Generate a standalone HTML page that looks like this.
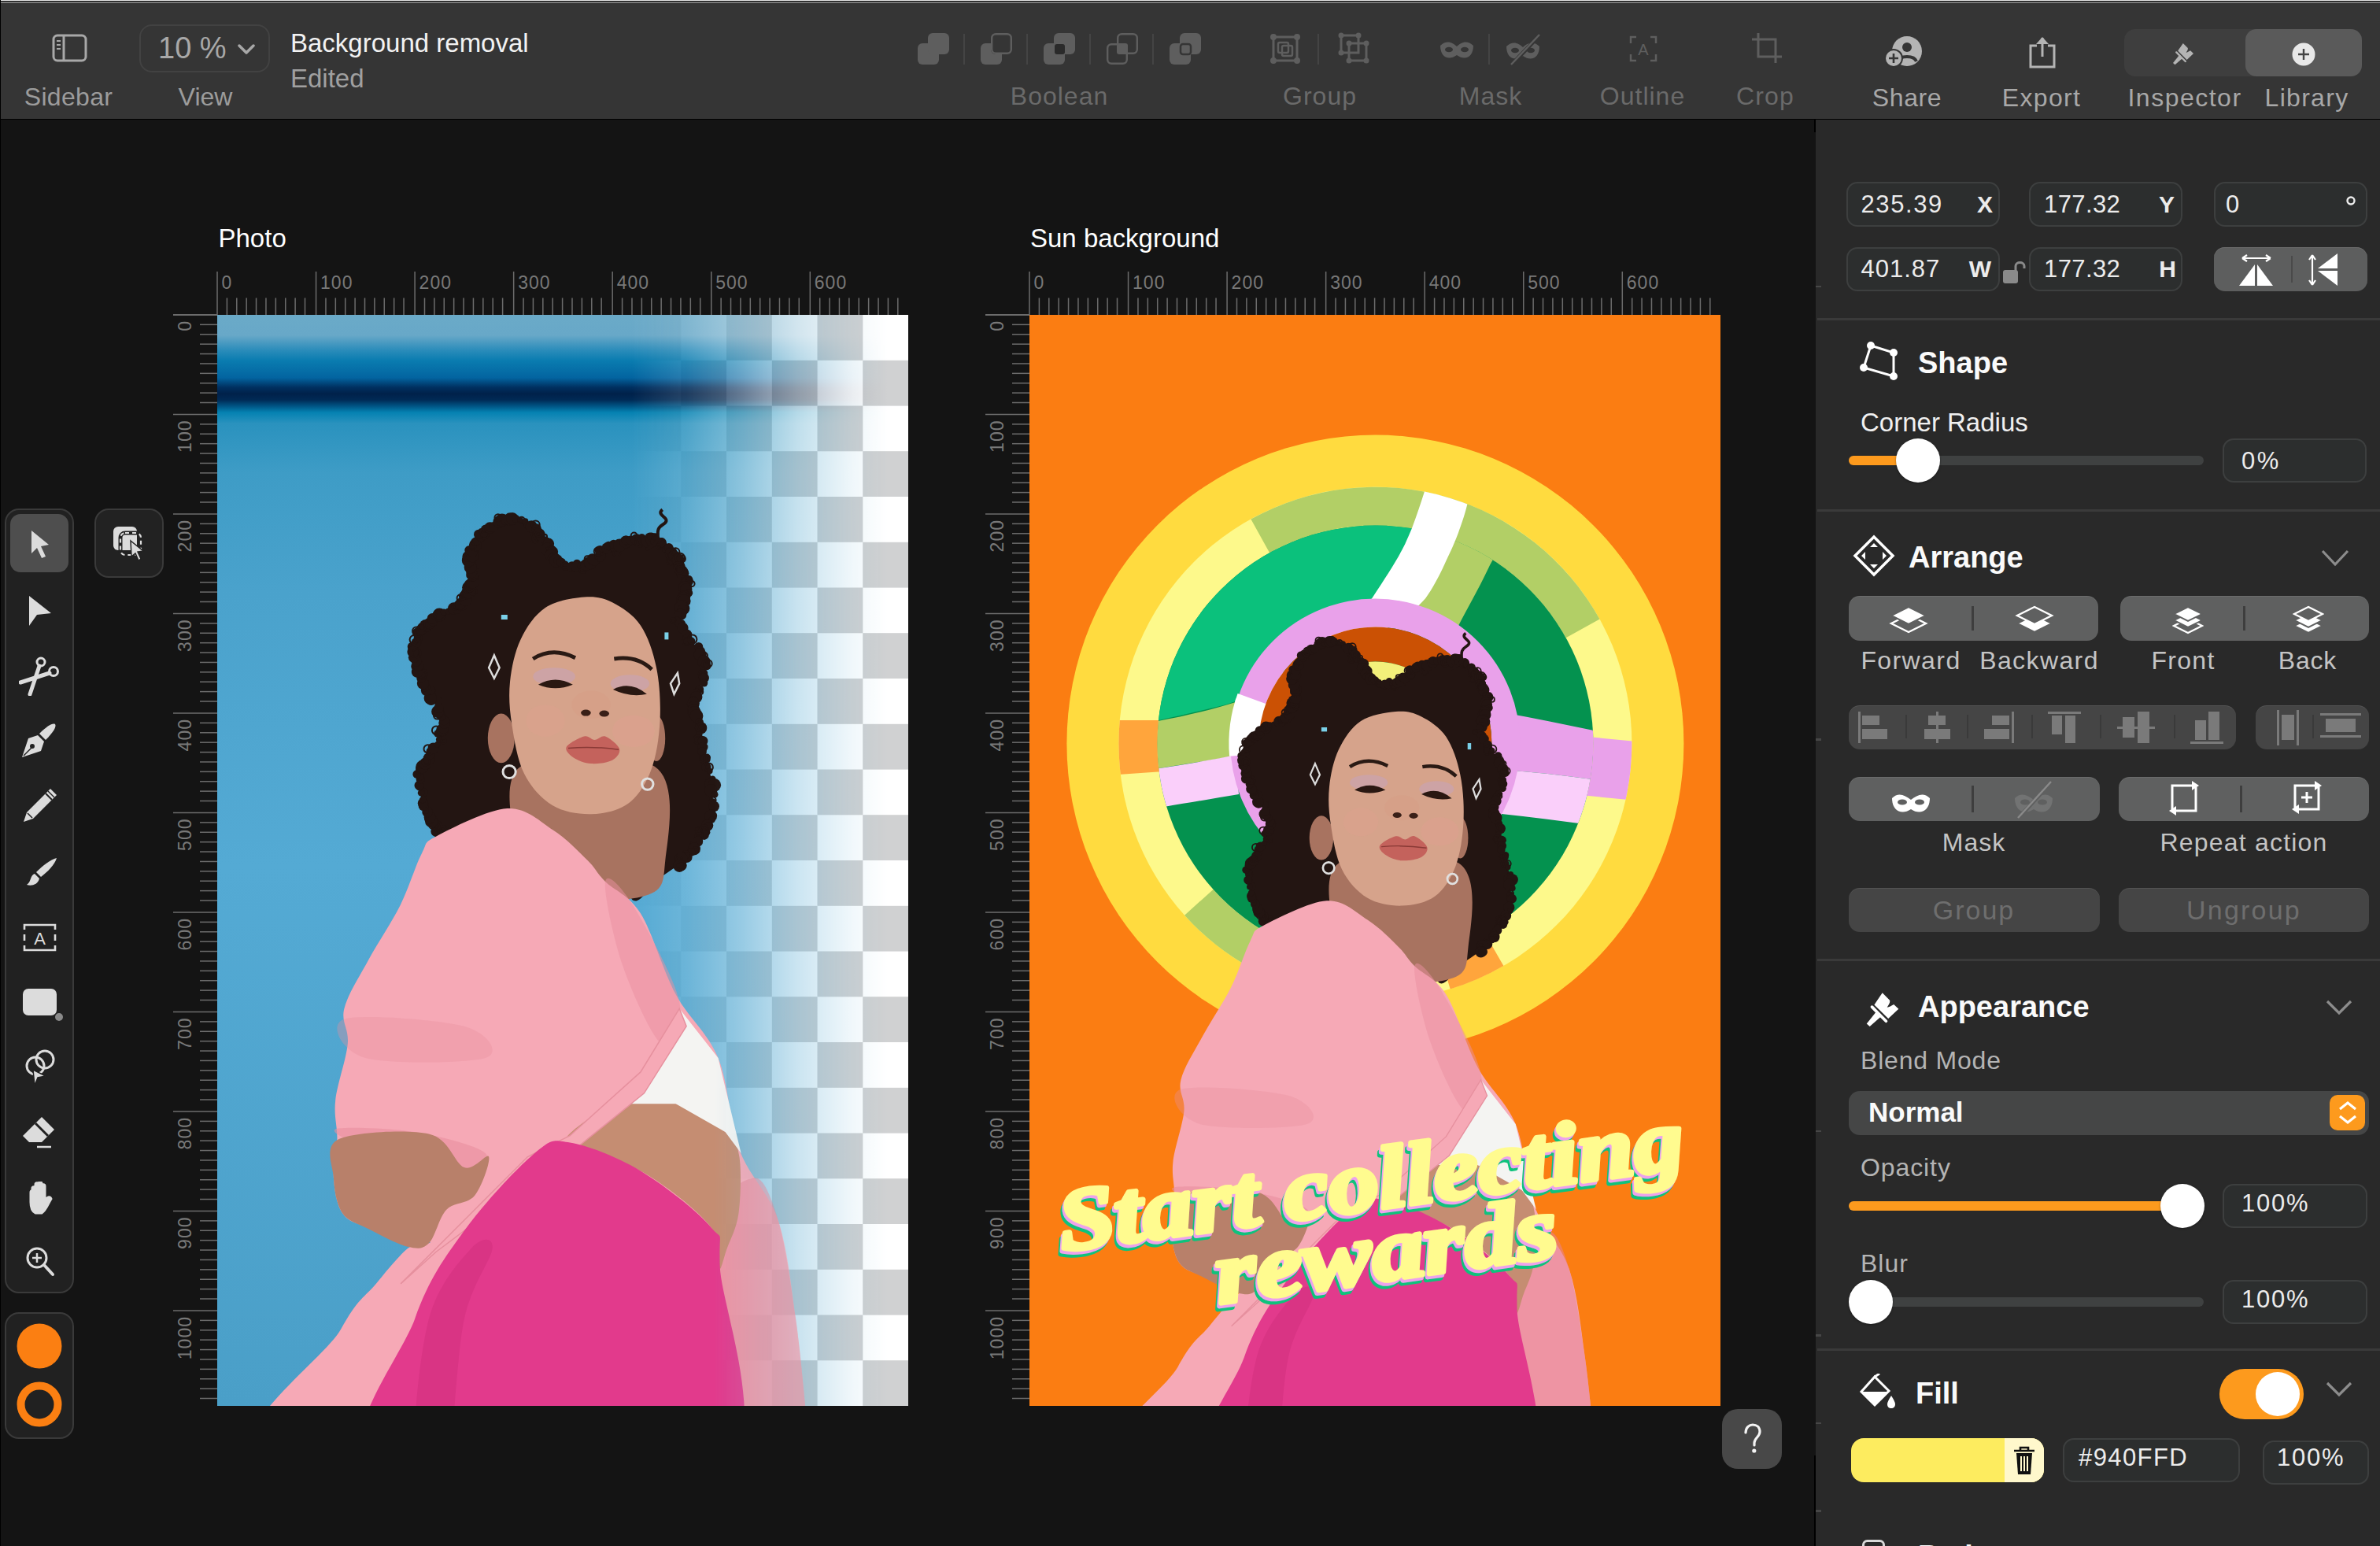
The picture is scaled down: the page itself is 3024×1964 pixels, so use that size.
<!DOCTYPE html>
<html><head><meta charset="utf-8"><style>
html,body{margin:0;padding:0;}
body{width:3024px;height:1964px;overflow:hidden;position:relative;background:#141414;font-family:"Liberation Sans", sans-serif;}
.a{position:absolute;display:block;}
.t{position:absolute;line-height:1;white-space:nowrap;}
</style></head><body>
<div class="t" style="left:277.5px;top:285.5px;font-size:33px;color:#fff;font-weight:400;letter-spacing:0px;">Photo</div><div class="t" style="left:1309.0px;top:285.5px;font-size:33px;color:#fff;font-weight:400;letter-spacing:0px;">Sun background</div><svg class="a" style="left:216.0px;top:330.0px;" width="938" height="1456" viewBox="0 0 938 1456"><rect x="4" y="69" width="56" height="2" fill="#6c6c6c"/><rect x="59.25" y="15" width="1.5" height="55" fill="#6c6c6c"/><text x="65.50" y="36.80000000000001" font-size="23" letter-spacing="1" fill="#787878" font-family="Liberation Sans">0</text><rect x="71.64" y="48.5" width="1.5" height="21.5" fill="#6c6c6c"/><rect x="84.03" y="48.5" width="1.5" height="21.5" fill="#6c6c6c"/><rect x="96.42" y="48.5" width="1.5" height="21.5" fill="#6c6c6c"/><rect x="108.81" y="48.5" width="1.5" height="21.5" fill="#6c6c6c"/><rect x="121.20" y="48.5" width="1.5" height="21.5" fill="#6c6c6c"/><rect x="133.59" y="48.5" width="1.5" height="21.5" fill="#6c6c6c"/><rect x="145.98" y="48.5" width="1.5" height="21.5" fill="#6c6c6c"/><rect x="158.37" y="48.5" width="1.5" height="21.5" fill="#6c6c6c"/><rect x="170.76" y="48.5" width="1.5" height="21.5" fill="#6c6c6c"/><rect x="184.80" y="15" width="1.5" height="55" fill="#6c6c6c"/><text x="191.05" y="36.80000000000001" font-size="23" letter-spacing="1" fill="#787878" font-family="Liberation Sans">100</text><rect x="197.19" y="48.5" width="1.5" height="21.5" fill="#6c6c6c"/><rect x="209.58" y="48.5" width="1.5" height="21.5" fill="#6c6c6c"/><rect x="221.97" y="48.5" width="1.5" height="21.5" fill="#6c6c6c"/><rect x="234.36" y="48.5" width="1.5" height="21.5" fill="#6c6c6c"/><rect x="246.75" y="48.5" width="1.5" height="21.5" fill="#6c6c6c"/><rect x="259.14" y="48.5" width="1.5" height="21.5" fill="#6c6c6c"/><rect x="271.53" y="48.5" width="1.5" height="21.5" fill="#6c6c6c"/><rect x="283.92" y="48.5" width="1.5" height="21.5" fill="#6c6c6c"/><rect x="296.31" y="48.5" width="1.5" height="21.5" fill="#6c6c6c"/><rect x="310.35" y="15" width="1.5" height="55" fill="#6c6c6c"/><text x="316.60" y="36.80000000000001" font-size="23" letter-spacing="1" fill="#787878" font-family="Liberation Sans">200</text><rect x="322.74" y="48.5" width="1.5" height="21.5" fill="#6c6c6c"/><rect x="335.13" y="48.5" width="1.5" height="21.5" fill="#6c6c6c"/><rect x="347.52" y="48.5" width="1.5" height="21.5" fill="#6c6c6c"/><rect x="359.91" y="48.5" width="1.5" height="21.5" fill="#6c6c6c"/><rect x="372.30" y="48.5" width="1.5" height="21.5" fill="#6c6c6c"/><rect x="384.69" y="48.5" width="1.5" height="21.5" fill="#6c6c6c"/><rect x="397.08" y="48.5" width="1.5" height="21.5" fill="#6c6c6c"/><rect x="409.47" y="48.5" width="1.5" height="21.5" fill="#6c6c6c"/><rect x="421.86" y="48.5" width="1.5" height="21.5" fill="#6c6c6c"/><rect x="435.90" y="15" width="1.5" height="55" fill="#6c6c6c"/><text x="442.15" y="36.80000000000001" font-size="23" letter-spacing="1" fill="#787878" font-family="Liberation Sans">300</text><rect x="448.29" y="48.5" width="1.5" height="21.5" fill="#6c6c6c"/><rect x="460.68" y="48.5" width="1.5" height="21.5" fill="#6c6c6c"/><rect x="473.07" y="48.5" width="1.5" height="21.5" fill="#6c6c6c"/><rect x="485.46" y="48.5" width="1.5" height="21.5" fill="#6c6c6c"/><rect x="497.85" y="48.5" width="1.5" height="21.5" fill="#6c6c6c"/><rect x="510.24" y="48.5" width="1.5" height="21.5" fill="#6c6c6c"/><rect x="522.63" y="48.5" width="1.5" height="21.5" fill="#6c6c6c"/><rect x="535.02" y="48.5" width="1.5" height="21.5" fill="#6c6c6c"/><rect x="547.41" y="48.5" width="1.5" height="21.5" fill="#6c6c6c"/><rect x="561.45" y="15" width="1.5" height="55" fill="#6c6c6c"/><text x="567.70" y="36.80000000000001" font-size="23" letter-spacing="1" fill="#787878" font-family="Liberation Sans">400</text><rect x="573.84" y="48.5" width="1.5" height="21.5" fill="#6c6c6c"/><rect x="586.23" y="48.5" width="1.5" height="21.5" fill="#6c6c6c"/><rect x="598.62" y="48.5" width="1.5" height="21.5" fill="#6c6c6c"/><rect x="611.01" y="48.5" width="1.5" height="21.5" fill="#6c6c6c"/><rect x="623.40" y="48.5" width="1.5" height="21.5" fill="#6c6c6c"/><rect x="635.79" y="48.5" width="1.5" height="21.5" fill="#6c6c6c"/><rect x="648.18" y="48.5" width="1.5" height="21.5" fill="#6c6c6c"/><rect x="660.57" y="48.5" width="1.5" height="21.5" fill="#6c6c6c"/><rect x="672.96" y="48.5" width="1.5" height="21.5" fill="#6c6c6c"/><rect x="687.00" y="15" width="1.5" height="55" fill="#6c6c6c"/><text x="693.25" y="36.80000000000001" font-size="23" letter-spacing="1" fill="#787878" font-family="Liberation Sans">500</text><rect x="699.39" y="48.5" width="1.5" height="21.5" fill="#6c6c6c"/><rect x="711.78" y="48.5" width="1.5" height="21.5" fill="#6c6c6c"/><rect x="724.17" y="48.5" width="1.5" height="21.5" fill="#6c6c6c"/><rect x="736.56" y="48.5" width="1.5" height="21.5" fill="#6c6c6c"/><rect x="748.95" y="48.5" width="1.5" height="21.5" fill="#6c6c6c"/><rect x="761.34" y="48.5" width="1.5" height="21.5" fill="#6c6c6c"/><rect x="773.73" y="48.5" width="1.5" height="21.5" fill="#6c6c6c"/><rect x="786.12" y="48.5" width="1.5" height="21.5" fill="#6c6c6c"/><rect x="798.51" y="48.5" width="1.5" height="21.5" fill="#6c6c6c"/><rect x="812.55" y="15" width="1.5" height="55" fill="#6c6c6c"/><text x="818.80" y="36.80000000000001" font-size="23" letter-spacing="1" fill="#787878" font-family="Liberation Sans">600</text><rect x="824.94" y="48.5" width="1.5" height="21.5" fill="#6c6c6c"/><rect x="837.33" y="48.5" width="1.5" height="21.5" fill="#6c6c6c"/><rect x="849.72" y="48.5" width="1.5" height="21.5" fill="#6c6c6c"/><rect x="862.11" y="48.5" width="1.5" height="21.5" fill="#6c6c6c"/><rect x="874.50" y="48.5" width="1.5" height="21.5" fill="#6c6c6c"/><rect x="886.89" y="48.5" width="1.5" height="21.5" fill="#6c6c6c"/><rect x="899.28" y="48.5" width="1.5" height="21.5" fill="#6c6c6c"/><rect x="911.67" y="48.5" width="1.5" height="21.5" fill="#6c6c6c"/><rect x="924.06" y="48.5" width="1.5" height="21.5" fill="#6c6c6c"/><rect x="4" y="69.25" width="56" height="1.5" fill="#6c6c6c"/><text transform="translate(27,77.0) rotate(-90)" text-anchor="end" font-size="23" letter-spacing="1" fill="#787878" font-family="Liberation Sans">0</text><rect x="38" y="81.64" width="22" height="1.5" fill="#6c6c6c"/><rect x="38" y="94.03" width="22" height="1.5" fill="#6c6c6c"/><rect x="38" y="106.42" width="22" height="1.5" fill="#6c6c6c"/><rect x="38" y="118.81" width="22" height="1.5" fill="#6c6c6c"/><rect x="38" y="131.20" width="22" height="1.5" fill="#6c6c6c"/><rect x="38" y="143.59" width="22" height="1.5" fill="#6c6c6c"/><rect x="38" y="155.98" width="22" height="1.5" fill="#6c6c6c"/><rect x="38" y="168.37" width="22" height="1.5" fill="#6c6c6c"/><rect x="38" y="180.76" width="22" height="1.5" fill="#6c6c6c"/><rect x="4" y="195.75" width="56" height="1.5" fill="#6c6c6c"/><text transform="translate(27,203.5) rotate(-90)" text-anchor="end" font-size="23" letter-spacing="1" fill="#787878" font-family="Liberation Sans">100</text><rect x="38" y="208.14" width="22" height="1.5" fill="#6c6c6c"/><rect x="38" y="220.53" width="22" height="1.5" fill="#6c6c6c"/><rect x="38" y="232.92" width="22" height="1.5" fill="#6c6c6c"/><rect x="38" y="245.31" width="22" height="1.5" fill="#6c6c6c"/><rect x="38" y="257.70" width="22" height="1.5" fill="#6c6c6c"/><rect x="38" y="270.09" width="22" height="1.5" fill="#6c6c6c"/><rect x="38" y="282.48" width="22" height="1.5" fill="#6c6c6c"/><rect x="38" y="294.87" width="22" height="1.5" fill="#6c6c6c"/><rect x="38" y="307.26" width="22" height="1.5" fill="#6c6c6c"/><rect x="4" y="322.25" width="56" height="1.5" fill="#6c6c6c"/><text transform="translate(27,330.0) rotate(-90)" text-anchor="end" font-size="23" letter-spacing="1" fill="#787878" font-family="Liberation Sans">200</text><rect x="38" y="334.64" width="22" height="1.5" fill="#6c6c6c"/><rect x="38" y="347.03" width="22" height="1.5" fill="#6c6c6c"/><rect x="38" y="359.42" width="22" height="1.5" fill="#6c6c6c"/><rect x="38" y="371.81" width="22" height="1.5" fill="#6c6c6c"/><rect x="38" y="384.20" width="22" height="1.5" fill="#6c6c6c"/><rect x="38" y="396.59" width="22" height="1.5" fill="#6c6c6c"/><rect x="38" y="408.98" width="22" height="1.5" fill="#6c6c6c"/><rect x="38" y="421.37" width="22" height="1.5" fill="#6c6c6c"/><rect x="38" y="433.76" width="22" height="1.5" fill="#6c6c6c"/><rect x="4" y="448.75" width="56" height="1.5" fill="#6c6c6c"/><text transform="translate(27,456.5) rotate(-90)" text-anchor="end" font-size="23" letter-spacing="1" fill="#787878" font-family="Liberation Sans">300</text><rect x="38" y="461.14" width="22" height="1.5" fill="#6c6c6c"/><rect x="38" y="473.53" width="22" height="1.5" fill="#6c6c6c"/><rect x="38" y="485.92" width="22" height="1.5" fill="#6c6c6c"/><rect x="38" y="498.31" width="22" height="1.5" fill="#6c6c6c"/><rect x="38" y="510.70" width="22" height="1.5" fill="#6c6c6c"/><rect x="38" y="523.09" width="22" height="1.5" fill="#6c6c6c"/><rect x="38" y="535.48" width="22" height="1.5" fill="#6c6c6c"/><rect x="38" y="547.87" width="22" height="1.5" fill="#6c6c6c"/><rect x="38" y="560.26" width="22" height="1.5" fill="#6c6c6c"/><rect x="4" y="575.25" width="56" height="1.5" fill="#6c6c6c"/><text transform="translate(27,583.0) rotate(-90)" text-anchor="end" font-size="23" letter-spacing="1" fill="#787878" font-family="Liberation Sans">400</text><rect x="38" y="587.64" width="22" height="1.5" fill="#6c6c6c"/><rect x="38" y="600.03" width="22" height="1.5" fill="#6c6c6c"/><rect x="38" y="612.42" width="22" height="1.5" fill="#6c6c6c"/><rect x="38" y="624.81" width="22" height="1.5" fill="#6c6c6c"/><rect x="38" y="637.20" width="22" height="1.5" fill="#6c6c6c"/><rect x="38" y="649.59" width="22" height="1.5" fill="#6c6c6c"/><rect x="38" y="661.98" width="22" height="1.5" fill="#6c6c6c"/><rect x="38" y="674.37" width="22" height="1.5" fill="#6c6c6c"/><rect x="38" y="686.76" width="22" height="1.5" fill="#6c6c6c"/><rect x="4" y="701.75" width="56" height="1.5" fill="#6c6c6c"/><text transform="translate(27,709.5) rotate(-90)" text-anchor="end" font-size="23" letter-spacing="1" fill="#787878" font-family="Liberation Sans">500</text><rect x="38" y="714.14" width="22" height="1.5" fill="#6c6c6c"/><rect x="38" y="726.53" width="22" height="1.5" fill="#6c6c6c"/><rect x="38" y="738.92" width="22" height="1.5" fill="#6c6c6c"/><rect x="38" y="751.31" width="22" height="1.5" fill="#6c6c6c"/><rect x="38" y="763.70" width="22" height="1.5" fill="#6c6c6c"/><rect x="38" y="776.09" width="22" height="1.5" fill="#6c6c6c"/><rect x="38" y="788.48" width="22" height="1.5" fill="#6c6c6c"/><rect x="38" y="800.87" width="22" height="1.5" fill="#6c6c6c"/><rect x="38" y="813.26" width="22" height="1.5" fill="#6c6c6c"/><rect x="4" y="828.25" width="56" height="1.5" fill="#6c6c6c"/><text transform="translate(27,836.0) rotate(-90)" text-anchor="end" font-size="23" letter-spacing="1" fill="#787878" font-family="Liberation Sans">600</text><rect x="38" y="840.64" width="22" height="1.5" fill="#6c6c6c"/><rect x="38" y="853.03" width="22" height="1.5" fill="#6c6c6c"/><rect x="38" y="865.42" width="22" height="1.5" fill="#6c6c6c"/><rect x="38" y="877.81" width="22" height="1.5" fill="#6c6c6c"/><rect x="38" y="890.20" width="22" height="1.5" fill="#6c6c6c"/><rect x="38" y="902.59" width="22" height="1.5" fill="#6c6c6c"/><rect x="38" y="914.98" width="22" height="1.5" fill="#6c6c6c"/><rect x="38" y="927.37" width="22" height="1.5" fill="#6c6c6c"/><rect x="38" y="939.76" width="22" height="1.5" fill="#6c6c6c"/><rect x="4" y="954.75" width="56" height="1.5" fill="#6c6c6c"/><text transform="translate(27,962.5) rotate(-90)" text-anchor="end" font-size="23" letter-spacing="1" fill="#787878" font-family="Liberation Sans">700</text><rect x="38" y="967.14" width="22" height="1.5" fill="#6c6c6c"/><rect x="38" y="979.53" width="22" height="1.5" fill="#6c6c6c"/><rect x="38" y="991.92" width="22" height="1.5" fill="#6c6c6c"/><rect x="38" y="1004.31" width="22" height="1.5" fill="#6c6c6c"/><rect x="38" y="1016.70" width="22" height="1.5" fill="#6c6c6c"/><rect x="38" y="1029.09" width="22" height="1.5" fill="#6c6c6c"/><rect x="38" y="1041.48" width="22" height="1.5" fill="#6c6c6c"/><rect x="38" y="1053.87" width="22" height="1.5" fill="#6c6c6c"/><rect x="38" y="1066.26" width="22" height="1.5" fill="#6c6c6c"/><rect x="4" y="1081.25" width="56" height="1.5" fill="#6c6c6c"/><text transform="translate(27,1089.0) rotate(-90)" text-anchor="end" font-size="23" letter-spacing="1" fill="#787878" font-family="Liberation Sans">800</text><rect x="38" y="1093.64" width="22" height="1.5" fill="#6c6c6c"/><rect x="38" y="1106.03" width="22" height="1.5" fill="#6c6c6c"/><rect x="38" y="1118.42" width="22" height="1.5" fill="#6c6c6c"/><rect x="38" y="1130.81" width="22" height="1.5" fill="#6c6c6c"/><rect x="38" y="1143.20" width="22" height="1.5" fill="#6c6c6c"/><rect x="38" y="1155.59" width="22" height="1.5" fill="#6c6c6c"/><rect x="38" y="1167.98" width="22" height="1.5" fill="#6c6c6c"/><rect x="38" y="1180.37" width="22" height="1.5" fill="#6c6c6c"/><rect x="38" y="1192.76" width="22" height="1.5" fill="#6c6c6c"/><rect x="4" y="1207.75" width="56" height="1.5" fill="#6c6c6c"/><text transform="translate(27,1215.5) rotate(-90)" text-anchor="end" font-size="23" letter-spacing="1" fill="#787878" font-family="Liberation Sans">900</text><rect x="38" y="1220.14" width="22" height="1.5" fill="#6c6c6c"/><rect x="38" y="1232.53" width="22" height="1.5" fill="#6c6c6c"/><rect x="38" y="1244.92" width="22" height="1.5" fill="#6c6c6c"/><rect x="38" y="1257.31" width="22" height="1.5" fill="#6c6c6c"/><rect x="38" y="1269.70" width="22" height="1.5" fill="#6c6c6c"/><rect x="38" y="1282.09" width="22" height="1.5" fill="#6c6c6c"/><rect x="38" y="1294.48" width="22" height="1.5" fill="#6c6c6c"/><rect x="38" y="1306.87" width="22" height="1.5" fill="#6c6c6c"/><rect x="38" y="1319.26" width="22" height="1.5" fill="#6c6c6c"/><rect x="4" y="1334.25" width="56" height="1.5" fill="#6c6c6c"/><text transform="translate(27,1342.0) rotate(-90)" text-anchor="end" font-size="23" letter-spacing="1" fill="#787878" font-family="Liberation Sans">1000</text><rect x="38" y="1346.64" width="22" height="1.5" fill="#6c6c6c"/><rect x="38" y="1359.03" width="22" height="1.5" fill="#6c6c6c"/><rect x="38" y="1371.42" width="22" height="1.5" fill="#6c6c6c"/><rect x="38" y="1383.81" width="22" height="1.5" fill="#6c6c6c"/><rect x="38" y="1396.20" width="22" height="1.5" fill="#6c6c6c"/><rect x="38" y="1408.59" width="22" height="1.5" fill="#6c6c6c"/><rect x="38" y="1420.98" width="22" height="1.5" fill="#6c6c6c"/><rect x="38" y="1433.37" width="22" height="1.5" fill="#6c6c6c"/><rect x="38" y="1445.76" width="22" height="1.5" fill="#6c6c6c"/></svg><svg class="a" style="left:1247.6px;top:330.0px;" width="938" height="1456" viewBox="0 0 938 1456"><rect x="4" y="69" width="56" height="2" fill="#6c6c6c"/><rect x="59.25" y="15" width="1.5" height="55" fill="#6c6c6c"/><text x="65.50" y="36.80000000000001" font-size="23" letter-spacing="1" fill="#787878" font-family="Liberation Sans">0</text><rect x="71.64" y="48.5" width="1.5" height="21.5" fill="#6c6c6c"/><rect x="84.03" y="48.5" width="1.5" height="21.5" fill="#6c6c6c"/><rect x="96.42" y="48.5" width="1.5" height="21.5" fill="#6c6c6c"/><rect x="108.81" y="48.5" width="1.5" height="21.5" fill="#6c6c6c"/><rect x="121.20" y="48.5" width="1.5" height="21.5" fill="#6c6c6c"/><rect x="133.59" y="48.5" width="1.5" height="21.5" fill="#6c6c6c"/><rect x="145.98" y="48.5" width="1.5" height="21.5" fill="#6c6c6c"/><rect x="158.37" y="48.5" width="1.5" height="21.5" fill="#6c6c6c"/><rect x="170.76" y="48.5" width="1.5" height="21.5" fill="#6c6c6c"/><rect x="184.80" y="15" width="1.5" height="55" fill="#6c6c6c"/><text x="191.05" y="36.80000000000001" font-size="23" letter-spacing="1" fill="#787878" font-family="Liberation Sans">100</text><rect x="197.19" y="48.5" width="1.5" height="21.5" fill="#6c6c6c"/><rect x="209.58" y="48.5" width="1.5" height="21.5" fill="#6c6c6c"/><rect x="221.97" y="48.5" width="1.5" height="21.5" fill="#6c6c6c"/><rect x="234.36" y="48.5" width="1.5" height="21.5" fill="#6c6c6c"/><rect x="246.75" y="48.5" width="1.5" height="21.5" fill="#6c6c6c"/><rect x="259.14" y="48.5" width="1.5" height="21.5" fill="#6c6c6c"/><rect x="271.53" y="48.5" width="1.5" height="21.5" fill="#6c6c6c"/><rect x="283.92" y="48.5" width="1.5" height="21.5" fill="#6c6c6c"/><rect x="296.31" y="48.5" width="1.5" height="21.5" fill="#6c6c6c"/><rect x="310.35" y="15" width="1.5" height="55" fill="#6c6c6c"/><text x="316.60" y="36.80000000000001" font-size="23" letter-spacing="1" fill="#787878" font-family="Liberation Sans">200</text><rect x="322.74" y="48.5" width="1.5" height="21.5" fill="#6c6c6c"/><rect x="335.13" y="48.5" width="1.5" height="21.5" fill="#6c6c6c"/><rect x="347.52" y="48.5" width="1.5" height="21.5" fill="#6c6c6c"/><rect x="359.91" y="48.5" width="1.5" height="21.5" fill="#6c6c6c"/><rect x="372.30" y="48.5" width="1.5" height="21.5" fill="#6c6c6c"/><rect x="384.69" y="48.5" width="1.5" height="21.5" fill="#6c6c6c"/><rect x="397.08" y="48.5" width="1.5" height="21.5" fill="#6c6c6c"/><rect x="409.47" y="48.5" width="1.5" height="21.5" fill="#6c6c6c"/><rect x="421.86" y="48.5" width="1.5" height="21.5" fill="#6c6c6c"/><rect x="435.90" y="15" width="1.5" height="55" fill="#6c6c6c"/><text x="442.15" y="36.80000000000001" font-size="23" letter-spacing="1" fill="#787878" font-family="Liberation Sans">300</text><rect x="448.29" y="48.5" width="1.5" height="21.5" fill="#6c6c6c"/><rect x="460.68" y="48.5" width="1.5" height="21.5" fill="#6c6c6c"/><rect x="473.07" y="48.5" width="1.5" height="21.5" fill="#6c6c6c"/><rect x="485.46" y="48.5" width="1.5" height="21.5" fill="#6c6c6c"/><rect x="497.85" y="48.5" width="1.5" height="21.5" fill="#6c6c6c"/><rect x="510.24" y="48.5" width="1.5" height="21.5" fill="#6c6c6c"/><rect x="522.63" y="48.5" width="1.5" height="21.5" fill="#6c6c6c"/><rect x="535.02" y="48.5" width="1.5" height="21.5" fill="#6c6c6c"/><rect x="547.41" y="48.5" width="1.5" height="21.5" fill="#6c6c6c"/><rect x="561.45" y="15" width="1.5" height="55" fill="#6c6c6c"/><text x="567.70" y="36.80000000000001" font-size="23" letter-spacing="1" fill="#787878" font-family="Liberation Sans">400</text><rect x="573.84" y="48.5" width="1.5" height="21.5" fill="#6c6c6c"/><rect x="586.23" y="48.5" width="1.5" height="21.5" fill="#6c6c6c"/><rect x="598.62" y="48.5" width="1.5" height="21.5" fill="#6c6c6c"/><rect x="611.01" y="48.5" width="1.5" height="21.5" fill="#6c6c6c"/><rect x="623.40" y="48.5" width="1.5" height="21.5" fill="#6c6c6c"/><rect x="635.79" y="48.5" width="1.5" height="21.5" fill="#6c6c6c"/><rect x="648.18" y="48.5" width="1.5" height="21.5" fill="#6c6c6c"/><rect x="660.57" y="48.5" width="1.5" height="21.5" fill="#6c6c6c"/><rect x="672.96" y="48.5" width="1.5" height="21.5" fill="#6c6c6c"/><rect x="687.00" y="15" width="1.5" height="55" fill="#6c6c6c"/><text x="693.25" y="36.80000000000001" font-size="23" letter-spacing="1" fill="#787878" font-family="Liberation Sans">500</text><rect x="699.39" y="48.5" width="1.5" height="21.5" fill="#6c6c6c"/><rect x="711.78" y="48.5" width="1.5" height="21.5" fill="#6c6c6c"/><rect x="724.17" y="48.5" width="1.5" height="21.5" fill="#6c6c6c"/><rect x="736.56" y="48.5" width="1.5" height="21.5" fill="#6c6c6c"/><rect x="748.95" y="48.5" width="1.5" height="21.5" fill="#6c6c6c"/><rect x="761.34" y="48.5" width="1.5" height="21.5" fill="#6c6c6c"/><rect x="773.73" y="48.5" width="1.5" height="21.5" fill="#6c6c6c"/><rect x="786.12" y="48.5" width="1.5" height="21.5" fill="#6c6c6c"/><rect x="798.51" y="48.5" width="1.5" height="21.5" fill="#6c6c6c"/><rect x="812.55" y="15" width="1.5" height="55" fill="#6c6c6c"/><text x="818.80" y="36.80000000000001" font-size="23" letter-spacing="1" fill="#787878" font-family="Liberation Sans">600</text><rect x="824.94" y="48.5" width="1.5" height="21.5" fill="#6c6c6c"/><rect x="837.33" y="48.5" width="1.5" height="21.5" fill="#6c6c6c"/><rect x="849.72" y="48.5" width="1.5" height="21.5" fill="#6c6c6c"/><rect x="862.11" y="48.5" width="1.5" height="21.5" fill="#6c6c6c"/><rect x="874.50" y="48.5" width="1.5" height="21.5" fill="#6c6c6c"/><rect x="886.89" y="48.5" width="1.5" height="21.5" fill="#6c6c6c"/><rect x="899.28" y="48.5" width="1.5" height="21.5" fill="#6c6c6c"/><rect x="911.67" y="48.5" width="1.5" height="21.5" fill="#6c6c6c"/><rect x="924.06" y="48.5" width="1.5" height="21.5" fill="#6c6c6c"/><rect x="4" y="69.25" width="56" height="1.5" fill="#6c6c6c"/><text transform="translate(27,77.0) rotate(-90)" text-anchor="end" font-size="23" letter-spacing="1" fill="#787878" font-family="Liberation Sans">0</text><rect x="38" y="81.64" width="22" height="1.5" fill="#6c6c6c"/><rect x="38" y="94.03" width="22" height="1.5" fill="#6c6c6c"/><rect x="38" y="106.42" width="22" height="1.5" fill="#6c6c6c"/><rect x="38" y="118.81" width="22" height="1.5" fill="#6c6c6c"/><rect x="38" y="131.20" width="22" height="1.5" fill="#6c6c6c"/><rect x="38" y="143.59" width="22" height="1.5" fill="#6c6c6c"/><rect x="38" y="155.98" width="22" height="1.5" fill="#6c6c6c"/><rect x="38" y="168.37" width="22" height="1.5" fill="#6c6c6c"/><rect x="38" y="180.76" width="22" height="1.5" fill="#6c6c6c"/><rect x="4" y="195.75" width="56" height="1.5" fill="#6c6c6c"/><text transform="translate(27,203.5) rotate(-90)" text-anchor="end" font-size="23" letter-spacing="1" fill="#787878" font-family="Liberation Sans">100</text><rect x="38" y="208.14" width="22" height="1.5" fill="#6c6c6c"/><rect x="38" y="220.53" width="22" height="1.5" fill="#6c6c6c"/><rect x="38" y="232.92" width="22" height="1.5" fill="#6c6c6c"/><rect x="38" y="245.31" width="22" height="1.5" fill="#6c6c6c"/><rect x="38" y="257.70" width="22" height="1.5" fill="#6c6c6c"/><rect x="38" y="270.09" width="22" height="1.5" fill="#6c6c6c"/><rect x="38" y="282.48" width="22" height="1.5" fill="#6c6c6c"/><rect x="38" y="294.87" width="22" height="1.5" fill="#6c6c6c"/><rect x="38" y="307.26" width="22" height="1.5" fill="#6c6c6c"/><rect x="4" y="322.25" width="56" height="1.5" fill="#6c6c6c"/><text transform="translate(27,330.0) rotate(-90)" text-anchor="end" font-size="23" letter-spacing="1" fill="#787878" font-family="Liberation Sans">200</text><rect x="38" y="334.64" width="22" height="1.5" fill="#6c6c6c"/><rect x="38" y="347.03" width="22" height="1.5" fill="#6c6c6c"/><rect x="38" y="359.42" width="22" height="1.5" fill="#6c6c6c"/><rect x="38" y="371.81" width="22" height="1.5" fill="#6c6c6c"/><rect x="38" y="384.20" width="22" height="1.5" fill="#6c6c6c"/><rect x="38" y="396.59" width="22" height="1.5" fill="#6c6c6c"/><rect x="38" y="408.98" width="22" height="1.5" fill="#6c6c6c"/><rect x="38" y="421.37" width="22" height="1.5" fill="#6c6c6c"/><rect x="38" y="433.76" width="22" height="1.5" fill="#6c6c6c"/><rect x="4" y="448.75" width="56" height="1.5" fill="#6c6c6c"/><text transform="translate(27,456.5) rotate(-90)" text-anchor="end" font-size="23" letter-spacing="1" fill="#787878" font-family="Liberation Sans">300</text><rect x="38" y="461.14" width="22" height="1.5" fill="#6c6c6c"/><rect x="38" y="473.53" width="22" height="1.5" fill="#6c6c6c"/><rect x="38" y="485.92" width="22" height="1.5" fill="#6c6c6c"/><rect x="38" y="498.31" width="22" height="1.5" fill="#6c6c6c"/><rect x="38" y="510.70" width="22" height="1.5" fill="#6c6c6c"/><rect x="38" y="523.09" width="22" height="1.5" fill="#6c6c6c"/><rect x="38" y="535.48" width="22" height="1.5" fill="#6c6c6c"/><rect x="38" y="547.87" width="22" height="1.5" fill="#6c6c6c"/><rect x="38" y="560.26" width="22" height="1.5" fill="#6c6c6c"/><rect x="4" y="575.25" width="56" height="1.5" fill="#6c6c6c"/><text transform="translate(27,583.0) rotate(-90)" text-anchor="end" font-size="23" letter-spacing="1" fill="#787878" font-family="Liberation Sans">400</text><rect x="38" y="587.64" width="22" height="1.5" fill="#6c6c6c"/><rect x="38" y="600.03" width="22" height="1.5" fill="#6c6c6c"/><rect x="38" y="612.42" width="22" height="1.5" fill="#6c6c6c"/><rect x="38" y="624.81" width="22" height="1.5" fill="#6c6c6c"/><rect x="38" y="637.20" width="22" height="1.5" fill="#6c6c6c"/><rect x="38" y="649.59" width="22" height="1.5" fill="#6c6c6c"/><rect x="38" y="661.98" width="22" height="1.5" fill="#6c6c6c"/><rect x="38" y="674.37" width="22" height="1.5" fill="#6c6c6c"/><rect x="38" y="686.76" width="22" height="1.5" fill="#6c6c6c"/><rect x="4" y="701.75" width="56" height="1.5" fill="#6c6c6c"/><text transform="translate(27,709.5) rotate(-90)" text-anchor="end" font-size="23" letter-spacing="1" fill="#787878" font-family="Liberation Sans">500</text><rect x="38" y="714.14" width="22" height="1.5" fill="#6c6c6c"/><rect x="38" y="726.53" width="22" height="1.5" fill="#6c6c6c"/><rect x="38" y="738.92" width="22" height="1.5" fill="#6c6c6c"/><rect x="38" y="751.31" width="22" height="1.5" fill="#6c6c6c"/><rect x="38" y="763.70" width="22" height="1.5" fill="#6c6c6c"/><rect x="38" y="776.09" width="22" height="1.5" fill="#6c6c6c"/><rect x="38" y="788.48" width="22" height="1.5" fill="#6c6c6c"/><rect x="38" y="800.87" width="22" height="1.5" fill="#6c6c6c"/><rect x="38" y="813.26" width="22" height="1.5" fill="#6c6c6c"/><rect x="4" y="828.25" width="56" height="1.5" fill="#6c6c6c"/><text transform="translate(27,836.0) rotate(-90)" text-anchor="end" font-size="23" letter-spacing="1" fill="#787878" font-family="Liberation Sans">600</text><rect x="38" y="840.64" width="22" height="1.5" fill="#6c6c6c"/><rect x="38" y="853.03" width="22" height="1.5" fill="#6c6c6c"/><rect x="38" y="865.42" width="22" height="1.5" fill="#6c6c6c"/><rect x="38" y="877.81" width="22" height="1.5" fill="#6c6c6c"/><rect x="38" y="890.20" width="22" height="1.5" fill="#6c6c6c"/><rect x="38" y="902.59" width="22" height="1.5" fill="#6c6c6c"/><rect x="38" y="914.98" width="22" height="1.5" fill="#6c6c6c"/><rect x="38" y="927.37" width="22" height="1.5" fill="#6c6c6c"/><rect x="38" y="939.76" width="22" height="1.5" fill="#6c6c6c"/><rect x="4" y="954.75" width="56" height="1.5" fill="#6c6c6c"/><text transform="translate(27,962.5) rotate(-90)" text-anchor="end" font-size="23" letter-spacing="1" fill="#787878" font-family="Liberation Sans">700</text><rect x="38" y="967.14" width="22" height="1.5" fill="#6c6c6c"/><rect x="38" y="979.53" width="22" height="1.5" fill="#6c6c6c"/><rect x="38" y="991.92" width="22" height="1.5" fill="#6c6c6c"/><rect x="38" y="1004.31" width="22" height="1.5" fill="#6c6c6c"/><rect x="38" y="1016.70" width="22" height="1.5" fill="#6c6c6c"/><rect x="38" y="1029.09" width="22" height="1.5" fill="#6c6c6c"/><rect x="38" y="1041.48" width="22" height="1.5" fill="#6c6c6c"/><rect x="38" y="1053.87" width="22" height="1.5" fill="#6c6c6c"/><rect x="38" y="1066.26" width="22" height="1.5" fill="#6c6c6c"/><rect x="4" y="1081.25" width="56" height="1.5" fill="#6c6c6c"/><text transform="translate(27,1089.0) rotate(-90)" text-anchor="end" font-size="23" letter-spacing="1" fill="#787878" font-family="Liberation Sans">800</text><rect x="38" y="1093.64" width="22" height="1.5" fill="#6c6c6c"/><rect x="38" y="1106.03" width="22" height="1.5" fill="#6c6c6c"/><rect x="38" y="1118.42" width="22" height="1.5" fill="#6c6c6c"/><rect x="38" y="1130.81" width="22" height="1.5" fill="#6c6c6c"/><rect x="38" y="1143.20" width="22" height="1.5" fill="#6c6c6c"/><rect x="38" y="1155.59" width="22" height="1.5" fill="#6c6c6c"/><rect x="38" y="1167.98" width="22" height="1.5" fill="#6c6c6c"/><rect x="38" y="1180.37" width="22" height="1.5" fill="#6c6c6c"/><rect x="38" y="1192.76" width="22" height="1.5" fill="#6c6c6c"/><rect x="4" y="1207.75" width="56" height="1.5" fill="#6c6c6c"/><text transform="translate(27,1215.5) rotate(-90)" text-anchor="end" font-size="23" letter-spacing="1" fill="#787878" font-family="Liberation Sans">900</text><rect x="38" y="1220.14" width="22" height="1.5" fill="#6c6c6c"/><rect x="38" y="1232.53" width="22" height="1.5" fill="#6c6c6c"/><rect x="38" y="1244.92" width="22" height="1.5" fill="#6c6c6c"/><rect x="38" y="1257.31" width="22" height="1.5" fill="#6c6c6c"/><rect x="38" y="1269.70" width="22" height="1.5" fill="#6c6c6c"/><rect x="38" y="1282.09" width="22" height="1.5" fill="#6c6c6c"/><rect x="38" y="1294.48" width="22" height="1.5" fill="#6c6c6c"/><rect x="38" y="1306.87" width="22" height="1.5" fill="#6c6c6c"/><rect x="38" y="1319.26" width="22" height="1.5" fill="#6c6c6c"/><rect x="4" y="1334.25" width="56" height="1.5" fill="#6c6c6c"/><text transform="translate(27,1342.0) rotate(-90)" text-anchor="end" font-size="23" letter-spacing="1" fill="#787878" font-family="Liberation Sans">1000</text><rect x="38" y="1346.64" width="22" height="1.5" fill="#6c6c6c"/><rect x="38" y="1359.03" width="22" height="1.5" fill="#6c6c6c"/><rect x="38" y="1371.42" width="22" height="1.5" fill="#6c6c6c"/><rect x="38" y="1383.81" width="22" height="1.5" fill="#6c6c6c"/><rect x="38" y="1396.20" width="22" height="1.5" fill="#6c6c6c"/><rect x="38" y="1408.59" width="22" height="1.5" fill="#6c6c6c"/><rect x="38" y="1420.98" width="22" height="1.5" fill="#6c6c6c"/><rect x="38" y="1433.37" width="22" height="1.5" fill="#6c6c6c"/><rect x="38" y="1445.76" width="22" height="1.5" fill="#6c6c6c"/></svg><svg class="a" style="left:276.0px;top:400.0px;" width="878" height="1386" viewBox="0 0 878 1386"><defs><linearGradient id="p1fade" x1="0" y1="0" x2="878" y2="0" gradientUnits="userSpaceOnUse"><stop offset="0.60" stop-color="#fff" stop-opacity="1"/><stop offset="0.68" stop-color="#fff" stop-opacity="0.85"/><stop offset="0.76" stop-color="#fff" stop-opacity="0.6"/><stop offset="0.84" stop-color="#fff" stop-opacity="0.3"/><stop offset="0.92" stop-color="#fff" stop-opacity="0.08"/><stop offset="0.97" stop-color="#fff" stop-opacity="0"/></linearGradient><mask id="p1mask" maskUnits="userSpaceOnUse" x="0" y="0" width="878" height="1386"><rect width="878" height="1386" fill="url(#p1fade)"/></mask><linearGradient id="p1ffade" x1="0" y1="0" x2="878" y2="0" gradientUnits="userSpaceOnUse"><stop offset="0.72" stop-color="#fff" stop-opacity="1"/><stop offset="0.86" stop-color="#fff" stop-opacity="0.6"/></linearGradient><mask id="p1fmask" maskUnits="userSpaceOnUse" x="0" y="0" width="878" height="1386"><rect width="878" height="1386" fill="url(#p1ffade)"/></mask><linearGradient id="p1bg" x1="0" y1="0" x2="0" y2="1386" gradientUnits="userSpaceOnUse"><stop offset="0.0000" stop-color="#6aaac8"/><stop offset="0.0188" stop-color="#68a8c8"/><stop offset="0.0325" stop-color="#2a8cba"/><stop offset="0.0418" stop-color="#0a7cb0"/><stop offset="0.0577" stop-color="#0364a0"/><stop offset="0.0664" stop-color="#003060"/><stop offset="0.0722" stop-color="#00214a"/><stop offset="0.0779" stop-color="#002a55"/><stop offset="0.0837" stop-color="#005585"/><stop offset="0.0895" stop-color="#0582b2"/><stop offset="0.0996" stop-color="#2a92be"/><stop offset="0.1443" stop-color="#3e9cc6"/><stop offset="0.2525" stop-color="#4aa2cc"/><stop offset="0.5051" stop-color="#54aad4"/><stop offset="1.0000" stop-color="#4a9fc8"/></linearGradient><filter id="p1blur" x="-0.1" y="-0.1" width="1.2" height="1.2"><feGaussianBlur stdDeviation="1.2"/></filter></defs><rect width="878" height="1386" fill="#ffffff"/><rect x="820.2" y="57.8" width="57.8" height="57.8" fill="#d0d1d2"/><rect x="820.2" y="173.2" width="57.8" height="57.8" fill="#d0d1d2"/><rect x="820.2" y="288.8" width="57.8" height="57.8" fill="#d0d1d2"/><rect x="820.2" y="404.2" width="57.8" height="57.8" fill="#d0d1d2"/><rect x="820.2" y="519.8" width="57.8" height="57.8" fill="#d0d1d2"/><rect x="820.2" y="635.2" width="57.8" height="57.8" fill="#d0d1d2"/><rect x="820.2" y="750.8" width="57.8" height="57.8" fill="#d0d1d2"/><rect x="820.2" y="866.2" width="57.8" height="57.8" fill="#d0d1d2"/><rect x="820.2" y="981.8" width="57.8" height="57.8" fill="#d0d1d2"/><rect x="820.2" y="1097.2" width="57.8" height="57.8" fill="#d0d1d2"/><rect x="820.2" y="1212.8" width="57.8" height="57.8" fill="#d0d1d2"/><rect x="820.2" y="1328.2" width="57.8" height="57.8" fill="#d0d1d2"/><rect x="762.5" y="0.0" width="57.8" height="57.8" fill="#d0d1d2"/><rect x="762.5" y="115.5" width="57.8" height="57.8" fill="#d0d1d2"/><rect x="762.5" y="231.0" width="57.8" height="57.8" fill="#d0d1d2"/><rect x="762.5" y="346.5" width="57.8" height="57.8" fill="#d0d1d2"/><rect x="762.5" y="462.0" width="57.8" height="57.8" fill="#d0d1d2"/><rect x="762.5" y="577.5" width="57.8" height="57.8" fill="#d0d1d2"/><rect x="762.5" y="693.0" width="57.8" height="57.8" fill="#d0d1d2"/><rect x="762.5" y="808.5" width="57.8" height="57.8" fill="#d0d1d2"/><rect x="762.5" y="924.0" width="57.8" height="57.8" fill="#d0d1d2"/><rect x="762.5" y="1039.5" width="57.8" height="57.8" fill="#d0d1d2"/><rect x="762.5" y="1155.0" width="57.8" height="57.8" fill="#d0d1d2"/><rect x="762.5" y="1270.5" width="57.8" height="57.8" fill="#d0d1d2"/><rect x="704.8" y="57.8" width="57.8" height="57.8" fill="#d0d1d2"/><rect x="704.8" y="173.2" width="57.8" height="57.8" fill="#d0d1d2"/><rect x="704.8" y="288.8" width="57.8" height="57.8" fill="#d0d1d2"/><rect x="704.8" y="404.2" width="57.8" height="57.8" fill="#d0d1d2"/><rect x="704.8" y="519.8" width="57.8" height="57.8" fill="#d0d1d2"/><rect x="704.8" y="635.2" width="57.8" height="57.8" fill="#d0d1d2"/><rect x="704.8" y="750.8" width="57.8" height="57.8" fill="#d0d1d2"/><rect x="704.8" y="866.2" width="57.8" height="57.8" fill="#d0d1d2"/><rect x="704.8" y="981.8" width="57.8" height="57.8" fill="#d0d1d2"/><rect x="704.8" y="1097.2" width="57.8" height="57.8" fill="#d0d1d2"/><rect x="704.8" y="1212.8" width="57.8" height="57.8" fill="#d0d1d2"/><rect x="704.8" y="1328.2" width="57.8" height="57.8" fill="#d0d1d2"/><rect x="647.0" y="0.0" width="57.8" height="57.8" fill="#d0d1d2"/><rect x="647.0" y="115.5" width="57.8" height="57.8" fill="#d0d1d2"/><rect x="647.0" y="231.0" width="57.8" height="57.8" fill="#d0d1d2"/><rect x="647.0" y="346.5" width="57.8" height="57.8" fill="#d0d1d2"/><rect x="647.0" y="462.0" width="57.8" height="57.8" fill="#d0d1d2"/><rect x="647.0" y="577.5" width="57.8" height="57.8" fill="#d0d1d2"/><rect x="647.0" y="693.0" width="57.8" height="57.8" fill="#d0d1d2"/><rect x="647.0" y="808.5" width="57.8" height="57.8" fill="#d0d1d2"/><rect x="647.0" y="924.0" width="57.8" height="57.8" fill="#d0d1d2"/><rect x="647.0" y="1039.5" width="57.8" height="57.8" fill="#d0d1d2"/><rect x="647.0" y="1155.0" width="57.8" height="57.8" fill="#d0d1d2"/><rect x="647.0" y="1270.5" width="57.8" height="57.8" fill="#d0d1d2"/><rect x="589.2" y="57.8" width="57.8" height="57.8" fill="#d0d1d2"/><rect x="589.2" y="173.2" width="57.8" height="57.8" fill="#d0d1d2"/><rect x="589.2" y="288.8" width="57.8" height="57.8" fill="#d0d1d2"/><rect x="589.2" y="404.2" width="57.8" height="57.8" fill="#d0d1d2"/><rect x="589.2" y="519.8" width="57.8" height="57.8" fill="#d0d1d2"/><rect x="589.2" y="635.2" width="57.8" height="57.8" fill="#d0d1d2"/><rect x="589.2" y="750.8" width="57.8" height="57.8" fill="#d0d1d2"/><rect x="589.2" y="866.2" width="57.8" height="57.8" fill="#d0d1d2"/><rect x="589.2" y="981.8" width="57.8" height="57.8" fill="#d0d1d2"/><rect x="589.2" y="1097.2" width="57.8" height="57.8" fill="#d0d1d2"/><rect x="589.2" y="1212.8" width="57.8" height="57.8" fill="#d0d1d2"/><rect x="589.2" y="1328.2" width="57.8" height="57.8" fill="#d0d1d2"/><rect x="531.5" y="0.0" width="57.8" height="57.8" fill="#d0d1d2"/><rect x="531.5" y="115.5" width="57.8" height="57.8" fill="#d0d1d2"/><rect x="531.5" y="231.0" width="57.8" height="57.8" fill="#d0d1d2"/><rect x="531.5" y="346.5" width="57.8" height="57.8" fill="#d0d1d2"/><rect x="531.5" y="462.0" width="57.8" height="57.8" fill="#d0d1d2"/><rect x="531.5" y="577.5" width="57.8" height="57.8" fill="#d0d1d2"/><rect x="531.5" y="693.0" width="57.8" height="57.8" fill="#d0d1d2"/><rect x="531.5" y="808.5" width="57.8" height="57.8" fill="#d0d1d2"/><rect x="531.5" y="924.0" width="57.8" height="57.8" fill="#d0d1d2"/><rect x="531.5" y="1039.5" width="57.8" height="57.8" fill="#d0d1d2"/><rect x="531.5" y="1155.0" width="57.8" height="57.8" fill="#d0d1d2"/><rect x="531.5" y="1270.5" width="57.8" height="57.8" fill="#d0d1d2"/><rect x="473.8" y="57.8" width="57.8" height="57.8" fill="#d0d1d2"/><rect x="473.8" y="173.2" width="57.8" height="57.8" fill="#d0d1d2"/><rect x="473.8" y="288.8" width="57.8" height="57.8" fill="#d0d1d2"/><rect x="473.8" y="404.2" width="57.8" height="57.8" fill="#d0d1d2"/><rect x="473.8" y="519.8" width="57.8" height="57.8" fill="#d0d1d2"/><rect x="473.8" y="635.2" width="57.8" height="57.8" fill="#d0d1d2"/><rect x="473.8" y="750.8" width="57.8" height="57.8" fill="#d0d1d2"/><rect x="473.8" y="866.2" width="57.8" height="57.8" fill="#d0d1d2"/><rect x="473.8" y="981.8" width="57.8" height="57.8" fill="#d0d1d2"/><rect x="473.8" y="1097.2" width="57.8" height="57.8" fill="#d0d1d2"/><rect x="473.8" y="1212.8" width="57.8" height="57.8" fill="#d0d1d2"/><rect x="473.8" y="1328.2" width="57.8" height="57.8" fill="#d0d1d2"/><rect x="416.0" y="0.0" width="57.8" height="57.8" fill="#d0d1d2"/><rect x="416.0" y="115.5" width="57.8" height="57.8" fill="#d0d1d2"/><rect x="416.0" y="231.0" width="57.8" height="57.8" fill="#d0d1d2"/><rect x="416.0" y="346.5" width="57.8" height="57.8" fill="#d0d1d2"/><rect x="416.0" y="462.0" width="57.8" height="57.8" fill="#d0d1d2"/><rect x="416.0" y="577.5" width="57.8" height="57.8" fill="#d0d1d2"/><rect x="416.0" y="693.0" width="57.8" height="57.8" fill="#d0d1d2"/><rect x="416.0" y="808.5" width="57.8" height="57.8" fill="#d0d1d2"/><rect x="416.0" y="924.0" width="57.8" height="57.8" fill="#d0d1d2"/><rect x="416.0" y="1039.5" width="57.8" height="57.8" fill="#d0d1d2"/><rect x="416.0" y="1155.0" width="57.8" height="57.8" fill="#d0d1d2"/><rect x="416.0" y="1270.5" width="57.8" height="57.8" fill="#d0d1d2"/><rect x="358.2" y="57.8" width="57.8" height="57.8" fill="#d0d1d2"/><rect x="358.2" y="173.2" width="57.8" height="57.8" fill="#d0d1d2"/><rect x="358.2" y="288.8" width="57.8" height="57.8" fill="#d0d1d2"/><rect x="358.2" y="404.2" width="57.8" height="57.8" fill="#d0d1d2"/><rect x="358.2" y="519.8" width="57.8" height="57.8" fill="#d0d1d2"/><rect x="358.2" y="635.2" width="57.8" height="57.8" fill="#d0d1d2"/><rect x="358.2" y="750.8" width="57.8" height="57.8" fill="#d0d1d2"/><rect x="358.2" y="866.2" width="57.8" height="57.8" fill="#d0d1d2"/><rect x="358.2" y="981.8" width="57.8" height="57.8" fill="#d0d1d2"/><rect x="358.2" y="1097.2" width="57.8" height="57.8" fill="#d0d1d2"/><rect x="358.2" y="1212.8" width="57.8" height="57.8" fill="#d0d1d2"/><rect x="358.2" y="1328.2" width="57.8" height="57.8" fill="#d0d1d2"/><rect x="300.5" y="0.0" width="57.8" height="57.8" fill="#d0d1d2"/><rect x="300.5" y="115.5" width="57.8" height="57.8" fill="#d0d1d2"/><rect x="300.5" y="231.0" width="57.8" height="57.8" fill="#d0d1d2"/><rect x="300.5" y="346.5" width="57.8" height="57.8" fill="#d0d1d2"/><rect x="300.5" y="462.0" width="57.8" height="57.8" fill="#d0d1d2"/><rect x="300.5" y="577.5" width="57.8" height="57.8" fill="#d0d1d2"/><rect x="300.5" y="693.0" width="57.8" height="57.8" fill="#d0d1d2"/><rect x="300.5" y="808.5" width="57.8" height="57.8" fill="#d0d1d2"/><rect x="300.5" y="924.0" width="57.8" height="57.8" fill="#d0d1d2"/><rect x="300.5" y="1039.5" width="57.8" height="57.8" fill="#d0d1d2"/><rect x="300.5" y="1155.0" width="57.8" height="57.8" fill="#d0d1d2"/><rect x="300.5" y="1270.5" width="57.8" height="57.8" fill="#d0d1d2"/><rect x="242.8" y="57.8" width="57.8" height="57.8" fill="#d0d1d2"/><rect x="242.8" y="173.2" width="57.8" height="57.8" fill="#d0d1d2"/><rect x="242.8" y="288.8" width="57.8" height="57.8" fill="#d0d1d2"/><rect x="242.8" y="404.2" width="57.8" height="57.8" fill="#d0d1d2"/><rect x="242.8" y="519.8" width="57.8" height="57.8" fill="#d0d1d2"/><rect x="242.8" y="635.2" width="57.8" height="57.8" fill="#d0d1d2"/><rect x="242.8" y="750.8" width="57.8" height="57.8" fill="#d0d1d2"/><rect x="242.8" y="866.2" width="57.8" height="57.8" fill="#d0d1d2"/><rect x="242.8" y="981.8" width="57.8" height="57.8" fill="#d0d1d2"/><rect x="242.8" y="1097.2" width="57.8" height="57.8" fill="#d0d1d2"/><rect x="242.8" y="1212.8" width="57.8" height="57.8" fill="#d0d1d2"/><rect x="242.8" y="1328.2" width="57.8" height="57.8" fill="#d0d1d2"/><rect x="185.0" y="0.0" width="57.8" height="57.8" fill="#d0d1d2"/><rect x="185.0" y="115.5" width="57.8" height="57.8" fill="#d0d1d2"/><rect x="185.0" y="231.0" width="57.8" height="57.8" fill="#d0d1d2"/><rect x="185.0" y="346.5" width="57.8" height="57.8" fill="#d0d1d2"/><rect x="185.0" y="462.0" width="57.8" height="57.8" fill="#d0d1d2"/><rect x="185.0" y="577.5" width="57.8" height="57.8" fill="#d0d1d2"/><rect x="185.0" y="693.0" width="57.8" height="57.8" fill="#d0d1d2"/><rect x="185.0" y="808.5" width="57.8" height="57.8" fill="#d0d1d2"/><rect x="185.0" y="924.0" width="57.8" height="57.8" fill="#d0d1d2"/><rect x="185.0" y="1039.5" width="57.8" height="57.8" fill="#d0d1d2"/><rect x="185.0" y="1155.0" width="57.8" height="57.8" fill="#d0d1d2"/><rect x="185.0" y="1270.5" width="57.8" height="57.8" fill="#d0d1d2"/><rect x="127.2" y="57.8" width="57.8" height="57.8" fill="#d0d1d2"/><rect x="127.2" y="173.2" width="57.8" height="57.8" fill="#d0d1d2"/><rect x="127.2" y="288.8" width="57.8" height="57.8" fill="#d0d1d2"/><rect x="127.2" y="404.2" width="57.8" height="57.8" fill="#d0d1d2"/><rect x="127.2" y="519.8" width="57.8" height="57.8" fill="#d0d1d2"/><rect x="127.2" y="635.2" width="57.8" height="57.8" fill="#d0d1d2"/><rect x="127.2" y="750.8" width="57.8" height="57.8" fill="#d0d1d2"/><rect x="127.2" y="866.2" width="57.8" height="57.8" fill="#d0d1d2"/><rect x="127.2" y="981.8" width="57.8" height="57.8" fill="#d0d1d2"/><rect x="127.2" y="1097.2" width="57.8" height="57.8" fill="#d0d1d2"/><rect x="127.2" y="1212.8" width="57.8" height="57.8" fill="#d0d1d2"/><rect x="127.2" y="1328.2" width="57.8" height="57.8" fill="#d0d1d2"/><rect x="69.5" y="0.0" width="57.8" height="57.8" fill="#d0d1d2"/><rect x="69.5" y="115.5" width="57.8" height="57.8" fill="#d0d1d2"/><rect x="69.5" y="231.0" width="57.8" height="57.8" fill="#d0d1d2"/><rect x="69.5" y="346.5" width="57.8" height="57.8" fill="#d0d1d2"/><rect x="69.5" y="462.0" width="57.8" height="57.8" fill="#d0d1d2"/><rect x="69.5" y="577.5" width="57.8" height="57.8" fill="#d0d1d2"/><rect x="69.5" y="693.0" width="57.8" height="57.8" fill="#d0d1d2"/><rect x="69.5" y="808.5" width="57.8" height="57.8" fill="#d0d1d2"/><rect x="69.5" y="924.0" width="57.8" height="57.8" fill="#d0d1d2"/><rect x="69.5" y="1039.5" width="57.8" height="57.8" fill="#d0d1d2"/><rect x="69.5" y="1155.0" width="57.8" height="57.8" fill="#d0d1d2"/><rect x="69.5" y="1270.5" width="57.8" height="57.8" fill="#d0d1d2"/><rect x="11.8" y="57.8" width="57.8" height="57.8" fill="#d0d1d2"/><rect x="11.8" y="173.2" width="57.8" height="57.8" fill="#d0d1d2"/><rect x="11.8" y="288.8" width="57.8" height="57.8" fill="#d0d1d2"/><rect x="11.8" y="404.2" width="57.8" height="57.8" fill="#d0d1d2"/><rect x="11.8" y="519.8" width="57.8" height="57.8" fill="#d0d1d2"/><rect x="11.8" y="635.2" width="57.8" height="57.8" fill="#d0d1d2"/><rect x="11.8" y="750.8" width="57.8" height="57.8" fill="#d0d1d2"/><rect x="11.8" y="866.2" width="57.8" height="57.8" fill="#d0d1d2"/><rect x="11.8" y="981.8" width="57.8" height="57.8" fill="#d0d1d2"/><rect x="11.8" y="1097.2" width="57.8" height="57.8" fill="#d0d1d2"/><rect x="11.8" y="1212.8" width="57.8" height="57.8" fill="#d0d1d2"/><rect x="11.8" y="1328.2" width="57.8" height="57.8" fill="#d0d1d2"/><rect x="-46.0" y="0.0" width="57.8" height="57.8" fill="#d0d1d2"/><rect x="-46.0" y="115.5" width="57.8" height="57.8" fill="#d0d1d2"/><rect x="-46.0" y="231.0" width="57.8" height="57.8" fill="#d0d1d2"/><rect x="-46.0" y="346.5" width="57.8" height="57.8" fill="#d0d1d2"/><rect x="-46.0" y="462.0" width="57.8" height="57.8" fill="#d0d1d2"/><rect x="-46.0" y="577.5" width="57.8" height="57.8" fill="#d0d1d2"/><rect x="-46.0" y="693.0" width="57.8" height="57.8" fill="#d0d1d2"/><rect x="-46.0" y="808.5" width="57.8" height="57.8" fill="#d0d1d2"/><rect x="-46.0" y="924.0" width="57.8" height="57.8" fill="#d0d1d2"/><rect x="-46.0" y="1039.5" width="57.8" height="57.8" fill="#d0d1d2"/><rect x="-46.0" y="1155.0" width="57.8" height="57.8" fill="#d0d1d2"/><rect x="-46.0" y="1270.5" width="57.8" height="57.8" fill="#d0d1d2"/><g mask="url(#p1mask)"><rect width="878" height="1386" fill="url(#p1bg)"/></g><g mask="url(#p1fmask)"><path d="M251.0,425.8 C251.8,412.4 259.2,399.7 268.9,390.0 C278.6,380.2 300.3,375.8 309.3,367.5 C318.2,359.3 320.9,350.4 322.7,340.7 C324.6,330.9 317.5,320.5 320.5,309.3 C323.5,298.1 330.6,281.6 340.7,273.4 C350.7,265.2 368.3,257.7 381.0,260.0 C393.7,262.2 408.6,277.9 416.9,286.9 C425.1,295.8 421.3,308.9 430.3,313.8 C439.3,318.6 459.4,319.0 470.6,316.0 C481.8,313.0 486.3,300.7 497.5,295.8 C508.7,291.0 527.4,288.4 537.9,286.9 C548.3,285.4 553.6,283.9 560.3,286.9 C567.0,289.9 573.0,298.8 578.2,304.8 C583.4,310.8 588.7,313.8 591.7,322.7 C594.7,331.7 596.9,347.4 596.1,358.6 C595.4,369.8 583.1,375.8 587.2,390.0 C591.3,404.2 617.4,426.6 620.8,443.7 C624.2,460.9 608.1,476.6 607.4,493.1 C606.6,509.5 612.6,523.7 616.3,542.4 C620.1,561.0 629.0,586.4 629.8,605.1 C630.5,623.8 627.1,639.8 620.8,654.4 C614.4,669.1 601.7,682.5 591.7,693.0 C581.6,703.4 570.7,708.7 560.3,717.2 C549.8,725.7 537.9,748.1 528.9,744.1 C519.9,740.0 527.4,701.5 506.5,693.0 C485.6,684.4 440.0,693.0 403.4,693.0 C366.8,693.0 306.3,697.9 286.9,693.0 C267.4,688.0 289.9,672.8 286.9,663.4 C283.9,654.0 274.2,648.4 268.9,636.5 C263.7,624.5 255.5,604.4 255.5,591.7 C255.5,579.0 263.7,573.0 268.9,560.3 C274.2,547.6 287.6,530.4 286.9,515.5 C286.1,500.5 270.4,485.6 264.5,470.6 C258.5,455.7 250.3,439.3 251.0,425.8 Z" fill="#231512"/><circle cx="248.9" cy="426.7" r="5.1" fill="#231512"/><circle cx="247.3" cy="421.4" r="4.6" fill="none" stroke="#231512" stroke-width="2"/><circle cx="248.7" cy="421.4" r="6.0" fill="#231512"/><circle cx="247.7" cy="425.3" r="3.3" fill="none" stroke="#231512" stroke-width="2"/><circle cx="250.6" cy="418.6" r="4.1" fill="#231512"/><circle cx="252.8" cy="416.8" r="6.4" fill="#231512"/><circle cx="250.2" cy="412.6" r="5.6" fill="none" stroke="#231512" stroke-width="2"/><circle cx="253.7" cy="412.1" r="4.1" fill="#231512"/><circle cx="255.4" cy="410.5" r="4.7" fill="none" stroke="#231512" stroke-width="2"/><circle cx="254.0" cy="403.8" r="6.2" fill="#231512"/><circle cx="253.1" cy="401.6" r="5.0" fill="none" stroke="#231512" stroke-width="2"/><circle cx="258.4" cy="401.7" r="6.4" fill="#231512"/><circle cx="259.4" cy="399.9" r="7.0" fill="#231512"/><circle cx="264.8" cy="394.9" r="7.9" fill="#231512"/><circle cx="265.6" cy="394.5" r="4.1" fill="#231512"/><circle cx="260.1" cy="396.5" r="4.5" fill="none" stroke="#231512" stroke-width="2"/><circle cx="269.4" cy="392.2" r="7.3" fill="#231512"/><circle cx="270.5" cy="393.2" r="5.1" fill="none" stroke="#231512" stroke-width="2"/><circle cx="274.2" cy="389.9" r="5.8" fill="#231512"/><circle cx="273.4" cy="385.9" r="6.8" fill="#231512"/><circle cx="282.2" cy="381.1" r="8.5" fill="#231512"/><circle cx="281.9" cy="380.0" r="6.8" fill="#231512"/><circle cx="276.6" cy="383.2" r="3.4" fill="none" stroke="#231512" stroke-width="2"/><circle cx="287.9" cy="377.5" r="4.1" fill="#231512"/><circle cx="293.7" cy="376.5" r="3.9" fill="#231512"/><circle cx="300.6" cy="372.8" r="7.6" fill="#231512"/><circle cx="304.9" cy="374.8" r="5.3" fill="#231512"/><circle cx="301.7" cy="371.6" r="3.5" fill="none" stroke="#231512" stroke-width="2"/><circle cx="306.8" cy="368.5" r="5.9" fill="#231512"/><circle cx="305.2" cy="369.3" r="4.3" fill="none" stroke="#231512" stroke-width="2"/><circle cx="310.4" cy="367.6" r="8.3" fill="#231512"/><circle cx="309.1" cy="367.5" r="6.9" fill="#231512"/><circle cx="315.7" cy="361.9" r="7.9" fill="#231512"/><circle cx="316.6" cy="357.3" r="4.0" fill="#231512"/><circle cx="312.5" cy="355.4" r="3.6" fill="none" stroke="#231512" stroke-width="2"/><circle cx="314.3" cy="355.2" r="3.8" fill="#231512"/><circle cx="308.7" cy="359.7" r="4.1" fill="none" stroke="#231512" stroke-width="2"/><circle cx="316.6" cy="353.2" r="6.6" fill="#231512"/><circle cx="312.0" cy="357.4" r="4.1" fill="none" stroke="#231512" stroke-width="2"/><circle cx="319.6" cy="351.9" r="8.5" fill="#231512"/><circle cx="317.7" cy="349.0" r="3.3" fill="none" stroke="#231512" stroke-width="2"/><circle cx="318.7" cy="346.3" r="7.6" fill="#231512"/><circle cx="319.3" cy="346.7" r="6.1" fill="#231512"/><circle cx="325.1" cy="351.0" r="4.6" fill="none" stroke="#231512" stroke-width="2"/><circle cx="320.7" cy="342.7" r="7.0" fill="#231512"/><circle cx="321.1" cy="346.1" r="5.3" fill="none" stroke="#231512" stroke-width="2"/><circle cx="321.1" cy="342.5" r="5.1" fill="#231512"/><circle cx="324.9" cy="339.6" r="7.8" fill="#231512"/><circle cx="323.0" cy="333.9" r="4.6" fill="#231512"/><circle cx="320.4" cy="331.0" r="3.1" fill="none" stroke="#231512" stroke-width="2"/><circle cx="325.2" cy="331.4" r="7.0" fill="#231512"/><circle cx="324.6" cy="327.8" r="8.4" fill="#231512"/><circle cx="321.0" cy="324.3" r="3.7" fill="none" stroke="#231512" stroke-width="2"/><circle cx="323.6" cy="327.6" r="6.6" fill="#231512"/><circle cx="322.3" cy="319.9" r="6.8" fill="#231512"/><circle cx="321.7" cy="320.7" r="8.0" fill="#231512"/><circle cx="321.5" cy="314.9" r="4.4" fill="#231512"/><circle cx="319.2" cy="312.0" r="8.4" fill="#231512"/><circle cx="318.5" cy="307.0" r="7.1" fill="#231512"/><circle cx="322.2" cy="302.8" r="5.7" fill="none" stroke="#231512" stroke-width="2"/><circle cx="324.4" cy="306.7" r="7.6" fill="#231512"/><circle cx="320.5" cy="299.1" r="6.2" fill="#231512"/><circle cx="324.4" cy="300.7" r="6.7" fill="#231512"/><circle cx="327.9" cy="292.4" r="7.9" fill="#231512"/><circle cx="324.8" cy="293.5" r="3.9" fill="none" stroke="#231512" stroke-width="2"/><circle cx="327.4" cy="288.0" r="4.8" fill="#231512"/><circle cx="329.8" cy="286.9" r="5.3" fill="#231512"/><circle cx="334.9" cy="282.7" r="5.6" fill="#231512"/><circle cx="332.1" cy="278.9" r="6.1" fill="#231512"/><circle cx="335.7" cy="274.9" r="3.0" fill="none" stroke="#231512" stroke-width="2"/><circle cx="339.1" cy="276.5" r="5.9" fill="#231512"/><circle cx="339.7" cy="279.9" r="4.6" fill="none" stroke="#231512" stroke-width="2"/><circle cx="341.0" cy="271.9" r="4.0" fill="#231512"/><circle cx="341.1" cy="272.7" r="5.3" fill="none" stroke="#231512" stroke-width="2"/><circle cx="346.4" cy="270.6" r="7.3" fill="#231512"/><circle cx="347.6" cy="269.8" r="6.0" fill="#231512"/><circle cx="351.3" cy="269.1" r="6.2" fill="#231512"/><circle cx="358.2" cy="263.0" r="7.9" fill="#231512"/><circle cx="361.9" cy="260.6" r="8.2" fill="#231512"/><circle cx="356.8" cy="257.5" r="4.3" fill="none" stroke="#231512" stroke-width="2"/><circle cx="365.2" cy="263.1" r="3.9" fill="#231512"/><circle cx="369.9" cy="261.3" r="4.3" fill="#231512"/><circle cx="375.5" cy="257.9" r="5.6" fill="none" stroke="#231512" stroke-width="2"/><circle cx="372.3" cy="259.6" r="8.3" fill="#231512"/><circle cx="375.0" cy="259.2" r="7.7" fill="#231512"/><circle cx="379.2" cy="258.9" r="5.2" fill="#231512"/><circle cx="385.2" cy="260.7" r="3.6" fill="#231512"/><circle cx="386.7" cy="260.8" r="4.0" fill="none" stroke="#231512" stroke-width="2"/><circle cx="391.7" cy="264.5" r="3.8" fill="#231512"/><circle cx="391.4" cy="262.3" r="4.0" fill="#231512"/><circle cx="394.5" cy="267.4" r="4.9" fill="#231512"/><circle cx="399.2" cy="268.8" r="7.6" fill="#231512"/><circle cx="405.5" cy="271.7" r="6.4" fill="#231512"/><circle cx="404.6" cy="266.6" r="5.1" fill="none" stroke="#231512" stroke-width="2"/><circle cx="408.7" cy="279.3" r="8.2" fill="#231512"/><circle cx="403.5" cy="283.7" r="5.6" fill="none" stroke="#231512" stroke-width="2"/><circle cx="410.2" cy="281.2" r="5.8" fill="#231512"/><circle cx="412.0" cy="284.2" r="4.8" fill="#231512"/><circle cx="407.9" cy="278.8" r="3.3" fill="none" stroke="#231512" stroke-width="2"/><circle cx="415.7" cy="285.7" r="4.5" fill="#231512"/><circle cx="419.0" cy="287.7" r="4.9" fill="#231512"/><circle cx="416.0" cy="281.9" r="3.1" fill="none" stroke="#231512" stroke-width="2"/><circle cx="420.9" cy="290.8" r="7.2" fill="#231512"/><circle cx="419.3" cy="297.6" r="8.2" fill="#231512"/><circle cx="424.6" cy="298.2" r="6.0" fill="#231512"/><circle cx="426.2" cy="300.9" r="6.9" fill="#231512"/><circle cx="424.9" cy="304.2" r="7.0" fill="#231512"/><circle cx="420.4" cy="299.1" r="3.2" fill="none" stroke="#231512" stroke-width="2"/><circle cx="423.5" cy="305.5" r="7.2" fill="#231512"/><circle cx="428.0" cy="307.5" r="5.5" fill="none" stroke="#231512" stroke-width="2"/><circle cx="424.7" cy="308.7" r="4.9" fill="#231512"/><circle cx="427.6" cy="310.6" r="4.3" fill="#231512"/><circle cx="430.6" cy="312.2" r="8.4" fill="#231512"/><circle cx="432.4" cy="312.1" r="5.0" fill="#231512"/><circle cx="436.9" cy="314.4" r="5.9" fill="#231512"/><circle cx="439.4" cy="314.5" r="3.5" fill="#231512"/><circle cx="442.3" cy="316.3" r="3.7" fill="#231512"/><circle cx="442.6" cy="319.3" r="4.8" fill="none" stroke="#231512" stroke-width="2"/><circle cx="450.9" cy="320.1" r="6.8" fill="#231512"/><circle cx="457.1" cy="315.8" r="5.1" fill="#231512"/><circle cx="455.9" cy="319.8" r="6.7" fill="#231512"/><circle cx="464.4" cy="319.3" r="6.6" fill="#231512"/><circle cx="464.5" cy="323.3" r="4.6" fill="none" stroke="#231512" stroke-width="2"/><circle cx="469.0" cy="317.3" r="7.5" fill="#231512"/><circle cx="471.8" cy="314.4" r="6.9" fill="#231512"/><circle cx="470.1" cy="309.6" r="3.4" fill="none" stroke="#231512" stroke-width="2"/><circle cx="474.2" cy="315.6" r="7.7" fill="#231512"/><circle cx="476.6" cy="310.2" r="6.9" fill="#231512"/><circle cx="479.3" cy="311.5" r="7.2" fill="#231512"/><circle cx="483.1" cy="307.5" r="3.8" fill="#231512"/><circle cx="485.9" cy="304.0" r="3.8" fill="none" stroke="#231512" stroke-width="2"/><circle cx="486.9" cy="306.6" r="7.2" fill="#231512"/><circle cx="487.6" cy="305.8" r="5.9" fill="#231512"/><circle cx="486.4" cy="299.6" r="6.7" fill="#231512"/><circle cx="484.0" cy="300.5" r="5.2" fill="none" stroke="#231512" stroke-width="2"/><circle cx="488.9" cy="298.1" r="3.6" fill="#231512"/><circle cx="495.4" cy="296.2" r="7.0" fill="#231512"/><circle cx="497.3" cy="293.5" r="5.8" fill="#231512"/><circle cx="504.0" cy="297.1" r="4.5" fill="#231512"/><circle cx="507.8" cy="302.7" r="4.4" fill="none" stroke="#231512" stroke-width="2"/><circle cx="503.6" cy="291.4" r="5.7" fill="#231512"/><circle cx="509.7" cy="289.9" r="4.6" fill="#231512"/><circle cx="511.4" cy="292.9" r="8.3" fill="#231512"/><circle cx="519.2" cy="288.5" r="7.9" fill="#231512"/><circle cx="519.5" cy="286.3" r="5.9" fill="#231512"/><circle cx="525.5" cy="286.4" r="5.8" fill="#231512"/><circle cx="529.6" cy="280.4" r="3.9" fill="none" stroke="#231512" stroke-width="2"/><circle cx="532.8" cy="285.6" r="7.3" fill="#231512"/><circle cx="536.9" cy="286.1" r="7.1" fill="#231512"/><circle cx="540.9" cy="287.4" r="5.5" fill="#231512"/><circle cx="539.5" cy="283.7" r="5.6" fill="#231512"/><circle cx="536.9" cy="288.9" r="5.5" fill="none" stroke="#231512" stroke-width="2"/><circle cx="542.2" cy="286.1" r="4.7" fill="#231512"/><circle cx="547.6" cy="290.7" r="4.1" fill="none" stroke="#231512" stroke-width="2"/><circle cx="546.8" cy="288.1" r="7.6" fill="#231512"/><circle cx="549.7" cy="282.7" r="6.2" fill="#231512"/><circle cx="552.0" cy="286.1" r="5.8" fill="#231512"/><circle cx="557.1" cy="281.6" r="3.1" fill="none" stroke="#231512" stroke-width="2"/><circle cx="551.6" cy="283.9" r="5.9" fill="#231512"/><circle cx="553.0" cy="286.2" r="8.4" fill="#231512"/><circle cx="551.8" cy="282.2" r="4.7" fill="none" stroke="#231512" stroke-width="2"/><circle cx="554.6" cy="288.0" r="4.3" fill="#231512"/><circle cx="560.7" cy="289.1" r="4.6" fill="#231512"/><circle cx="558.4" cy="284.4" r="4.2" fill="#231512"/><circle cx="555.3" cy="281.5" r="3.3" fill="none" stroke="#231512" stroke-width="2"/><circle cx="564.6" cy="289.4" r="6.3" fill="#231512"/><circle cx="564.4" cy="288.6" r="5.6" fill="#231512"/><circle cx="561.7" cy="294.2" r="3.2" fill="none" stroke="#231512" stroke-width="2"/><circle cx="566.2" cy="291.7" r="4.1" fill="#231512"/><circle cx="566.6" cy="291.2" r="4.6" fill="#231512"/><circle cx="572.5" cy="296.8" r="5.7" fill="#231512"/><circle cx="568.8" cy="298.0" r="3.6" fill="#231512"/><circle cx="573.8" cy="295.9" r="5.9" fill="#231512"/><circle cx="576.9" cy="303.1" r="8.1" fill="#231512"/><circle cx="574.3" cy="300.8" r="4.7" fill="#231512"/><circle cx="580.9" cy="306.1" r="6.9" fill="#231512"/><circle cx="579.5" cy="306.8" r="7.3" fill="#231512"/><circle cx="576.3" cy="311.9" r="5.3" fill="none" stroke="#231512" stroke-width="2"/><circle cx="580.2" cy="305.9" r="6.7" fill="#231512"/><circle cx="582.5" cy="301.2" r="4.9" fill="none" stroke="#231512" stroke-width="2"/><circle cx="583.0" cy="310.1" r="3.9" fill="#231512"/><circle cx="585.0" cy="308.2" r="4.6" fill="#231512"/><circle cx="590.5" cy="309.9" r="4.4" fill="none" stroke="#231512" stroke-width="2"/><circle cx="585.6" cy="311.0" r="7.9" fill="#231512"/><circle cx="588.1" cy="308.7" r="5.9" fill="none" stroke="#231512" stroke-width="2"/><circle cx="587.1" cy="315.3" r="3.6" fill="#231512"/><circle cx="589.4" cy="318.6" r="4.8" fill="#231512"/><circle cx="587.5" cy="317.6" r="3.1" fill="none" stroke="#231512" stroke-width="2"/><circle cx="587.8" cy="319.8" r="6.9" fill="#231512"/><circle cx="588.9" cy="323.0" r="6.0" fill="#231512"/><circle cx="585.7" cy="319.7" r="5.5" fill="none" stroke="#231512" stroke-width="2"/><circle cx="590.4" cy="325.4" r="7.3" fill="#231512"/><circle cx="590.9" cy="325.1" r="4.4" fill="#231512"/><circle cx="591.2" cy="328.2" r="8.2" fill="#231512"/><circle cx="586.9" cy="322.8" r="5.9" fill="none" stroke="#231512" stroke-width="2"/><circle cx="593.5" cy="334.7" r="3.8" fill="#231512"/><circle cx="597.7" cy="338.6" r="7.2" fill="#231512"/><circle cx="603.0" cy="341.5" r="3.6" fill="none" stroke="#231512" stroke-width="2"/><circle cx="596.3" cy="339.1" r="3.7" fill="#231512"/><circle cx="593.8" cy="340.7" r="5.2" fill="#231512"/><circle cx="599.2" cy="336.2" r="4.1" fill="none" stroke="#231512" stroke-width="2"/><circle cx="594.3" cy="346.7" r="8.3" fill="#231512"/><circle cx="595.8" cy="348.7" r="7.6" fill="#231512"/><circle cx="598.8" cy="353.3" r="5.4" fill="#231512"/><circle cx="593.3" cy="358.0" r="8.0" fill="#231512"/><circle cx="592.8" cy="359.0" r="7.3" fill="#231512"/><circle cx="589.9" cy="362.0" r="5.8" fill="none" stroke="#231512" stroke-width="2"/><circle cx="593.6" cy="363.4" r="8.0" fill="#231512"/><circle cx="591.7" cy="368.9" r="6.6" fill="#231512"/><circle cx="585.7" cy="372.0" r="3.8" fill="none" stroke="#231512" stroke-width="2"/><circle cx="592.3" cy="373.0" r="8.1" fill="#231512"/><circle cx="592.0" cy="378.5" r="3.7" fill="none" stroke="#231512" stroke-width="2"/><circle cx="589.2" cy="371.7" r="8.3" fill="#231512"/><circle cx="590.9" cy="374.1" r="6.0" fill="#231512"/><circle cx="589.1" cy="380.7" r="7.2" fill="#231512"/><circle cx="585.4" cy="381.5" r="5.1" fill="#231512"/><circle cx="584.6" cy="387.5" r="3.9" fill="#231512"/><circle cx="579.0" cy="388.1" r="3.2" fill="none" stroke="#231512" stroke-width="2"/><circle cx="590.1" cy="392.3" r="5.1" fill="#231512"/><circle cx="586.5" cy="392.0" r="4.8" fill="#231512"/><circle cx="591.6" cy="397.8" r="7.0" fill="#231512"/><circle cx="596.7" cy="406.1" r="6.6" fill="#231512"/><circle cx="597.5" cy="412.1" r="6.8" fill="#231512"/><circle cx="596.0" cy="415.0" r="4.7" fill="none" stroke="#231512" stroke-width="2"/><circle cx="602.8" cy="414.2" r="4.5" fill="#231512"/><circle cx="603.7" cy="412.1" r="5.7" fill="none" stroke="#231512" stroke-width="2"/><circle cx="611.7" cy="421.5" r="5.5" fill="#231512"/><circle cx="613.5" cy="427.4" r="5.4" fill="none" stroke="#231512" stroke-width="2"/><circle cx="612.7" cy="429.1" r="4.0" fill="#231512"/><circle cx="613.6" cy="431.7" r="8.1" fill="#231512"/><circle cx="619.3" cy="432.7" r="3.6" fill="none" stroke="#231512" stroke-width="2"/><circle cx="618.4" cy="440.6" r="8.2" fill="#231512"/><circle cx="622.5" cy="446.4" r="4.8" fill="#231512"/><circle cx="623.9" cy="443.0" r="4.8" fill="none" stroke="#231512" stroke-width="2"/><circle cx="619.1" cy="447.1" r="5.3" fill="#231512"/><circle cx="620.9" cy="443.5" r="4.8" fill="none" stroke="#231512" stroke-width="2"/><circle cx="619.7" cy="455.0" r="3.6" fill="#231512"/><circle cx="616.2" cy="458.5" r="3.9" fill="none" stroke="#231512" stroke-width="2"/><circle cx="616.9" cy="456.5" r="6.2" fill="#231512"/><circle cx="618.6" cy="461.3" r="6.3" fill="#231512"/><circle cx="617.5" cy="458.7" r="5.1" fill="none" stroke="#231512" stroke-width="2"/><circle cx="618.3" cy="467.6" r="5.0" fill="#231512"/><circle cx="612.9" cy="475.7" r="5.3" fill="#231512"/><circle cx="609.4" cy="479.8" r="5.3" fill="#231512"/><circle cx="614.2" cy="478.9" r="3.0" fill="none" stroke="#231512" stroke-width="2"/><circle cx="608.8" cy="485.6" r="7.6" fill="#231512"/><circle cx="605.1" cy="488.5" r="4.3" fill="#231512"/><circle cx="604.9" cy="493.8" r="8.0" fill="#231512"/><circle cx="605.2" cy="496.6" r="6.0" fill="#231512"/><circle cx="605.3" cy="502.6" r="8.1" fill="#231512"/><circle cx="606.4" cy="505.2" r="8.3" fill="#231512"/><circle cx="609.0" cy="509.4" r="8.4" fill="#231512"/><circle cx="612.6" cy="517.6" r="5.4" fill="#231512"/><circle cx="613.0" cy="520.0" r="4.3" fill="#231512"/><circle cx="614.6" cy="524.7" r="7.7" fill="#231512"/><circle cx="614.8" cy="523.3" r="4.2" fill="none" stroke="#231512" stroke-width="2"/><circle cx="612.4" cy="533.0" r="4.1" fill="#231512"/><circle cx="615.5" cy="538.4" r="3.7" fill="#231512"/><circle cx="610.9" cy="539.6" r="5.5" fill="none" stroke="#231512" stroke-width="2"/><circle cx="617.1" cy="541.2" r="6.3" fill="#231512"/><circle cx="617.1" cy="549.1" r="6.4" fill="#231512"/><circle cx="616.2" cy="555.0" r="5.7" fill="#231512"/><circle cx="622.3" cy="562.3" r="4.7" fill="#231512"/><circle cx="622.3" cy="564.8" r="4.4" fill="#231512"/><circle cx="617.4" cy="564.1" r="4.3" fill="none" stroke="#231512" stroke-width="2"/><circle cx="621.4" cy="574.6" r="6.1" fill="#231512"/><circle cx="624.7" cy="574.7" r="5.2" fill="none" stroke="#231512" stroke-width="2"/><circle cx="625.8" cy="579.6" r="3.8" fill="#231512"/><circle cx="629.4" cy="589.8" r="4.2" fill="#231512"/><circle cx="626.6" cy="596.1" r="7.6" fill="#231512"/><circle cx="631.8" cy="597.3" r="8.3" fill="#231512"/><circle cx="627.2" cy="604.2" r="8.2" fill="#231512"/><circle cx="632.2" cy="609.3" r="4.3" fill="#231512"/><circle cx="629.7" cy="618.5" r="4.2" fill="#231512"/><circle cx="629.8" cy="616.4" r="3.8" fill="none" stroke="#231512" stroke-width="2"/><circle cx="627.4" cy="619.2" r="3.7" fill="#231512"/><circle cx="631.1" cy="624.3" r="6.9" fill="#231512"/><circle cx="628.1" cy="632.1" r="4.1" fill="#231512"/><circle cx="627.2" cy="636.6" r="7.9" fill="#231512"/><circle cx="628.6" cy="641.6" r="4.0" fill="#231512"/><circle cx="622.8" cy="648.4" r="7.5" fill="#231512"/><circle cx="624.2" cy="649.6" r="5.3" fill="#231512"/><circle cx="618.8" cy="653.5" r="5.2" fill="none" stroke="#231512" stroke-width="2"/><circle cx="621.6" cy="657.3" r="4.8" fill="#231512"/><circle cx="617.6" cy="655.8" r="6.8" fill="#231512"/><circle cx="619.0" cy="655.0" r="3.4" fill="none" stroke="#231512" stroke-width="2"/><circle cx="618.7" cy="660.8" r="6.1" fill="#231512"/><circle cx="612.9" cy="654.9" r="5.0" fill="none" stroke="#231512" stroke-width="2"/><circle cx="611.2" cy="666.4" r="5.3" fill="#231512"/><circle cx="612.3" cy="662.8" r="4.8" fill="none" stroke="#231512" stroke-width="2"/><circle cx="610.6" cy="669.1" r="6.6" fill="#231512"/><circle cx="605.5" cy="672.8" r="4.7" fill="#231512"/><circle cx="606.1" cy="678.5" r="7.9" fill="#231512"/><circle cx="607.9" cy="679.3" r="3.0" fill="none" stroke="#231512" stroke-width="2"/><circle cx="602.1" cy="682.5" r="5.3" fill="#231512"/><circle cx="596.4" cy="688.8" r="7.2" fill="#231512"/><circle cx="595.3" cy="685.6" r="4.6" fill="none" stroke="#231512" stroke-width="2"/><circle cx="596.4" cy="686.8" r="3.8" fill="#231512"/><circle cx="589.5" cy="691.2" r="8.2" fill="#231512"/><circle cx="589.5" cy="697.8" r="6.0" fill="#231512"/><circle cx="587.1" cy="692.4" r="3.9" fill="none" stroke="#231512" stroke-width="2"/><circle cx="587.2" cy="700.0" r="7.9" fill="#231512"/><circle cx="590.2" cy="699.6" r="5.5" fill="none" stroke="#231512" stroke-width="2"/><circle cx="511.7" cy="694.7" r="7.2" fill="#231512"/><circle cx="506.1" cy="692.7" r="3.7" fill="none" stroke="#231512" stroke-width="2"/><circle cx="507.7" cy="695.0" r="7.2" fill="#231512"/><circle cx="499.8" cy="690.5" r="4.8" fill="#231512"/><circle cx="489.9" cy="690.5" r="6.1" fill="#231512"/><circle cx="484.2" cy="686.3" r="4.6" fill="#231512"/><circle cx="487.1" cy="691.6" r="3.7" fill="none" stroke="#231512" stroke-width="2"/><circle cx="470.7" cy="691.6" r="7.2" fill="#231512"/><circle cx="475.6" cy="693.1" r="3.7" fill="none" stroke="#231512" stroke-width="2"/><circle cx="461.8" cy="692.6" r="7.0" fill="#231512"/><circle cx="450.7" cy="692.7" r="7.7" fill="#231512"/><circle cx="438.3" cy="690.2" r="7.1" fill="#231512"/><circle cx="433.2" cy="695.1" r="4.9" fill="none" stroke="#231512" stroke-width="2"/><circle cx="423.3" cy="689.8" r="4.2" fill="#231512"/><circle cx="412.5" cy="689.9" r="5.2" fill="#231512"/><circle cx="414.1" cy="692.3" r="5.1" fill="none" stroke="#231512" stroke-width="2"/><circle cx="400.8" cy="693.5" r="7.2" fill="#231512"/><circle cx="393.7" cy="695.4" r="7.6" fill="#231512"/><circle cx="398.7" cy="700.8" r="5.6" fill="none" stroke="#231512" stroke-width="2"/><circle cx="377.3" cy="691.1" r="4.0" fill="#231512"/><circle cx="381.1" cy="692.7" r="5.5" fill="none" stroke="#231512" stroke-width="2"/><circle cx="366.6" cy="692.6" r="7.6" fill="#231512"/><circle cx="369.6" cy="689.1" r="3.3" fill="none" stroke="#231512" stroke-width="2"/><circle cx="351.7" cy="691.5" r="5.1" fill="#231512"/><circle cx="354.3" cy="689.9" r="3.8" fill="none" stroke="#231512" stroke-width="2"/><circle cx="341.5" cy="694.8" r="5.1" fill="#231512"/><circle cx="322.9" cy="694.6" r="6.6" fill="#231512"/><circle cx="312.8" cy="696.4" r="7.4" fill="#231512"/><circle cx="305.1" cy="692.4" r="4.6" fill="#231512"/><circle cx="290.9" cy="692.4" r="4.4" fill="#231512"/><circle cx="283.9" cy="692.9" r="8.4" fill="#231512"/><circle cx="280.3" cy="691.2" r="7.5" fill="#231512"/><circle cx="277.5" cy="696.5" r="5.5" fill="none" stroke="#231512" stroke-width="2"/><circle cx="278.0" cy="690.1" r="4.9" fill="#231512"/><circle cx="279.7" cy="683.7" r="4.0" fill="#231512"/><circle cx="281.1" cy="683.9" r="7.0" fill="#231512"/><circle cx="280.1" cy="682.2" r="5.5" fill="#231512"/><circle cx="274.4" cy="678.7" r="5.7" fill="none" stroke="#231512" stroke-width="2"/><circle cx="285.0" cy="676.4" r="4.8" fill="#231512"/><circle cx="282.9" cy="672.8" r="7.9" fill="#231512"/><circle cx="287.7" cy="670.5" r="7.3" fill="#231512"/><circle cx="283.5" cy="674.6" r="4.0" fill="none" stroke="#231512" stroke-width="2"/><circle cx="288.5" cy="664.4" r="6.8" fill="#231512"/><circle cx="287.3" cy="661.1" r="7.4" fill="#231512"/><circle cx="284.2" cy="658.8" r="7.9" fill="#231512"/><circle cx="288.3" cy="654.7" r="5.1" fill="none" stroke="#231512" stroke-width="2"/><circle cx="282.8" cy="657.1" r="4.3" fill="#231512"/><circle cx="281.6" cy="653.8" r="4.3" fill="#231512"/><circle cx="278.4" cy="656.1" r="7.1" fill="#231512"/><circle cx="284.2" cy="659.6" r="4.2" fill="none" stroke="#231512" stroke-width="2"/><circle cx="278.4" cy="649.1" r="7.2" fill="#231512"/><circle cx="274.9" cy="647.7" r="4.0" fill="#231512"/><circle cx="278.4" cy="650.1" r="4.2" fill="none" stroke="#231512" stroke-width="2"/><circle cx="275.3" cy="645.6" r="6.0" fill="#231512"/><circle cx="274.2" cy="648.5" r="4.8" fill="none" stroke="#231512" stroke-width="2"/><circle cx="272.1" cy="643.4" r="8.0" fill="#231512"/><circle cx="269.0" cy="641.2" r="5.6" fill="#231512"/><circle cx="270.1" cy="638.6" r="7.4" fill="#231512"/><circle cx="267.0" cy="631.5" r="6.7" fill="#231512"/><circle cx="265.0" cy="630.1" r="4.0" fill="#231512"/><circle cx="262.2" cy="623.5" r="6.6" fill="#231512"/><circle cx="261.4" cy="620.3" r="6.6" fill="#231512"/><circle cx="261.2" cy="616.0" r="4.4" fill="#231512"/><circle cx="261.6" cy="606.7" r="5.9" fill="#231512"/><circle cx="259.1" cy="607.3" r="4.3" fill="#231512"/><circle cx="256.8" cy="600.3" r="4.0" fill="#231512"/><circle cx="256.6" cy="597.7" r="6.1" fill="#231512"/><circle cx="258.2" cy="589.9" r="5.6" fill="#231512"/><circle cx="257.3" cy="585.8" r="5.5" fill="#231512"/><circle cx="253.7" cy="583.4" r="5.3" fill="#231512"/><circle cx="256.9" cy="581.2" r="3.6" fill="#231512"/><circle cx="257.3" cy="577.1" r="5.3" fill="#231512"/><circle cx="260.4" cy="574.3" r="8.2" fill="#231512"/><circle cx="260.2" cy="570.9" r="5.5" fill="#231512"/><circle cx="264.5" cy="570.1" r="7.5" fill="#231512"/><circle cx="268.3" cy="566.3" r="4.6" fill="#231512"/><circle cx="269.2" cy="563.7" r="7.6" fill="#231512"/><circle cx="264.7" cy="567.7" r="4.6" fill="none" stroke="#231512" stroke-width="2"/><circle cx="271.0" cy="558.9" r="5.3" fill="#231512"/><circle cx="270.3" cy="554.5" r="4.8" fill="#231512"/><circle cx="267.7" cy="551.4" r="5.2" fill="none" stroke="#231512" stroke-width="2"/><circle cx="272.8" cy="551.8" r="5.0" fill="#231512"/><circle cx="274.4" cy="550.4" r="6.8" fill="#231512"/><circle cx="279.7" cy="545.8" r="3.8" fill="#231512"/><circle cx="282.1" cy="539.5" r="4.2" fill="#231512"/><circle cx="287.6" cy="541.4" r="3.0" fill="none" stroke="#231512" stroke-width="2"/><circle cx="280.0" cy="531.9" r="4.8" fill="#231512"/><circle cx="278.2" cy="527.7" r="5.3" fill="none" stroke="#231512" stroke-width="2"/><circle cx="286.1" cy="527.3" r="8.0" fill="#231512"/><circle cx="287.5" cy="525.7" r="6.5" fill="#231512"/><circle cx="288.7" cy="518.2" r="7.4" fill="#231512"/><circle cx="288.3" cy="515.1" r="6.2" fill="#231512"/><circle cx="284.8" cy="509.4" r="6.3" fill="#231512"/><circle cx="279.5" cy="509.0" r="4.5" fill="none" stroke="#231512" stroke-width="2"/><circle cx="284.8" cy="506.5" r="4.2" fill="#231512"/><circle cx="279.9" cy="504.1" r="7.8" fill="#231512"/><circle cx="281.4" cy="499.6" r="6.3" fill="#231512"/><circle cx="280.4" cy="490.5" r="5.6" fill="#231512"/><circle cx="271.9" cy="489.2" r="6.7" fill="#231512"/><circle cx="270.8" cy="487.0" r="8.2" fill="#231512"/><circle cx="271.4" cy="476.8" r="5.9" fill="#231512"/><circle cx="265.5" cy="477.3" r="6.6" fill="#231512"/><circle cx="264.6" cy="472.3" r="5.9" fill="#231512"/><circle cx="263.7" cy="472.9" r="4.3" fill="none" stroke="#231512" stroke-width="2"/><circle cx="261.4" cy="468.1" r="7.6" fill="#231512"/><circle cx="259.3" cy="461.6" r="6.0" fill="#231512"/><circle cx="260.5" cy="455.9" r="6.8" fill="#231512"/><circle cx="261.6" cy="457.5" r="3.9" fill="none" stroke="#231512" stroke-width="2"/><circle cx="254.2" cy="453.6" r="7.4" fill="#231512"/><circle cx="252.5" cy="446.5" r="6.2" fill="#231512"/><circle cx="257.6" cy="447.8" r="3.6" fill="none" stroke="#231512" stroke-width="2"/><circle cx="255.4" cy="445.6" r="6.8" fill="#231512"/><circle cx="253.2" cy="439.8" r="6.6" fill="#231512"/><circle cx="249.8" cy="435.2" r="6.9" fill="#231512"/><circle cx="248.7" cy="428.0" r="7.3" fill="#231512"/><circle cx="253.6" cy="429.9" r="5.3" fill="none" stroke="#231512" stroke-width="2"/><path d="M544.6,298.1 C571.5,286.9 551.3,275.7 565.7,266.7 C580.5,257.7 555.8,255.5 565.7,247.4" fill="none" stroke="#231512" stroke-width="4"/><path d="M385.5,573.7 C414.6,553.9 525.2,553.9 555.8,573.7 C586.4,593.6 572.2,665.3 569.3,693.0 C566.3,720.6 569.3,731.8 537.9,739.6 C506.5,747.3 407.1,747.3 381.0,739.6 C354.8,731.8 380.2,720.6 381.0,693.0 C381.7,665.3 356.3,593.6 385.5,573.7 Z" fill="#a87360"/><ellipse cx="360.8" cy="537.9" rx="17.0" ry="31.4" fill="#a87360"/><ellipse cx="558.0" cy="537.9" rx="11.2" ry="29.1" fill="#a87360"/><path d="M466.2,358.6 C452.0,359.7 430.3,363.1 416.9,372.0 C403.4,381.0 392.9,396.7 385.5,412.4 C378.0,428.1 373.9,448.2 372.0,466.2 C370.2,484.1 371.3,500.5 374.3,519.9 C377.3,539.4 381.4,565.5 390.0,582.7 C398.6,599.9 411.6,614.4 425.8,623.0 C440.0,631.6 459.1,634.6 475.1,634.2 C491.2,633.9 509.5,630.1 522.2,620.8 C534.9,611.5 544.6,595.8 551.3,578.2 C558.0,560.7 561.4,537.1 562.5,515.5 C563.6,493.8 562.2,468.4 558.0,448.2 C553.9,428.1 547.2,408.3 537.9,394.4 C528.5,380.6 514.0,371.3 502.0,365.3 C490.1,359.3 480.4,357.5 466.2,358.6 Z" fill="#d6a38b"/><ellipse cx="528.9" cy="528.9" rx="26.9" ry="20.2" fill="#e0a090" opacity="0.45"/><ellipse cx="416.9" cy="515.5" rx="24.7" ry="20.2" fill="#e0a090" opacity="0.35"/><path d="M401.2,437.0 Q425.8,421.3 455.0,435.7" stroke="#2a1a14" stroke-width="5" fill="none"/><path d="M504.3,437.0 Q533.4,432.5 552.2,450.5" stroke="#2a1a14" stroke-width="5" fill="none"/><ellipse cx="428.1" cy="459.4" rx="26.9" ry="11.2" fill="#c9a3b0" opacity="0.7"/><ellipse cx="524.4" cy="468.4" rx="24.7" ry="11.2" fill="#c9a3b0" opacity="0.7"/><path d="M407.9,469.7 Q429.4,457.2 451.8,469.7 Q429.4,478.7 407.9,469.7 Z" fill="#2a1812"/><path d="M502.9,476.0 Q524.4,464.4 545.9,481.8 Q524.4,486.3 502.9,476.0 Z" fill="#2a1812"/><ellipse cx="475.1" cy="495.3" rx="24.7" ry="17.9" fill="#d6a088"/><ellipse cx="468.4" cy="505.6" rx="6.3" ry="4.0" fill="#3a2018"/><ellipse cx="491.7" cy="506.5" rx="6.3" ry="4.0" fill="#3a2018"/><path d="M443.7,549.1 C446.0,544.6 460.2,537.1 466.2,535.6 C472.1,534.1 475.1,540.1 479.6,540.1 C484.1,540.1 487.8,533.8 493.1,535.6 C498.3,537.5 509.5,546.3 511.0,551.3 C512.5,556.3 508.0,562.5 502.0,565.7 C496.0,568.8 483.3,570.7 475.1,570.1 C466.9,569.6 457.9,566.0 452.7,562.5 C447.5,559.0 441.5,553.6 443.7,549.1 Z" fill="#c4625c"/><path d="M446.0,550.4 Q477.4,547.7 510.1,552.2" stroke="#8a3a36" stroke-width="1.5" fill="none"/><circle cx="371.1" cy="580.5" r="8.1" fill="none" stroke="#e0e0e0" stroke-width="3"/><circle cx="546.8" cy="596.1" r="7.2" fill="none" stroke="#e0e0e0" stroke-width="3"/><path d="M351.9,432.5 L358.6,448.2 L351.9,461.7 L345.1,448.2 Z" fill="none" stroke="#ddd" stroke-width="2.5"/><path d="M584.9,455.0 L587.2,468.4 L580.5,481.8 L576.0,468.4 Z" fill="none" stroke="#ddd" stroke-width="2.5"/><rect x="360.8" y="381.0" width="8" height="6" fill="#7ad0e8"/><rect x="568.4" y="403.4" width="5" height="9" fill="#7ad0e8"/><path d="M260.0,684.0 C267.7,669.4 261.2,671.6 279.2,662.1 C297.3,652.6 343.9,628.4 368.4,627.1 C393.0,625.8 409.7,643.5 426.7,654.5 C443.7,665.4 459.6,682.1 470.6,693.0 C481.7,703.9 481.8,708.7 493.1,719.9 C504.3,731.1 522.9,736.3 537.9,760.2 C552.8,784.1 566.3,832.7 582.7,863.3 C599.1,894.0 623.0,911.1 636.5,944.0 C649.9,976.9 650.7,1026.2 663.4,1060.5 C676.1,1094.9 700.7,1114.3 712.7,1150.2 C724.6,1186.1 729.0,1232.4 735.1,1275.7 C741.2,1319.0 746.1,1376.5 749.4,1410.2 C752.8,1443.8 869.0,1466.2 755.3,1477.4 C641.6,1488.6 167.0,1508.8 67.2,1477.4 C-32.5,1446.0 134.5,1330.2 156.9,1289.1 C179.3,1248.1 187.5,1248.1 201.7,1230.9 C215.9,1213.7 230.8,1195.0 242.0,1186.1 C253.2,1177.1 277.2,1181.6 268.9,1177.1 C260.7,1172.6 211.0,1165.1 192.7,1159.2 C174.4,1153.2 166.6,1151.7 159.1,1141.2 C151.7,1130.8 149.0,1112.1 147.9,1096.4 C146.8,1080.7 152.0,1063.5 152.4,1047.1 C152.8,1030.7 147.9,1018.0 150.2,997.8 C152.4,977.6 164.0,945.5 165.8,926.1 C167.7,906.7 156.9,899.2 161.4,881.3 C165.8,863.3 180.9,840.4 192.7,818.5 C204.6,796.6 221.4,772.3 232.6,749.9 C243.8,727.5 252.2,698.7 260.0,684.0 Z" fill="#f6a9b6"/><path d="M152.4,1033.7 C164.4,1031.4 219.6,1032.9 251.0,1038.1 C282.4,1043.4 330.2,1055.3 340.7,1065.0 C351.1,1074.7 325.7,1097.2 313.8,1096.4 C301.8,1095.7 291.3,1068.0 268.9,1060.5 C246.5,1053.1 198.7,1056.1 179.3,1051.6 C159.9,1047.1 140.4,1035.9 152.4,1033.7 Z" fill="#e98f9f" opacity="0.6"/><path d="M161.4,894.7 C182.3,888.0 283.9,895.5 313.8,903.7 C343.6,911.9 361.6,937.3 340.7,944.0 C319.7,950.7 218.1,952.2 188.3,944.0 C158.4,935.8 140.4,901.4 161.4,894.7 Z" fill="#e98f9f" opacity="0.35"/><path d="M493.1,719.9 C495.3,707.2 513.2,725.9 528.9,751.3 C544.6,776.7 581.2,843.2 587.2,872.3 C593.2,901.4 576.7,933.5 564.8,926.1 C552.8,918.6 527.4,861.8 515.5,827.5 C503.5,793.1 490.8,732.6 493.1,719.9 Z" fill="#e98f9f" opacity="0.5"/><path d="M636.5,1168.1 C645.5,1104.6 668.6,1099.4 681.3,1096.4 C694.0,1093.4 703.7,1120.3 712.7,1150.2 C721.6,1180.1 729.0,1232.4 735.1,1275.7 C741.2,1319.0 746.1,1376.5 749.4,1410.2 C752.8,1443.8 775.6,1466.2 755.3,1477.4 C734.9,1488.6 647.3,1528.9 627.5,1477.4 C607.7,1425.9 627.5,1231.6 636.5,1168.1 Z" fill="#e88494" opacity="0.55"/><path d="M439.3,1056.1 C435.5,1041.1 491.6,1006.8 515.5,997.8 C539.4,988.8 561.0,995.6 582.7,1002.3 C604.4,1009.0 632.0,1026.9 645.5,1038.1 C658.9,1049.3 660.5,1052.3 663.4,1069.5 C666.2,1086.7 665.1,1121.8 662.5,1141.2 C659.9,1160.7 652.0,1174.1 647.7,1186.1 C643.4,1198.0 639.8,1217.4 636.5,1212.9 C633.1,1208.5 644.0,1180.1 627.5,1159.2 C611.1,1138.2 569.3,1104.6 537.9,1087.4 C506.5,1070.3 443.0,1071.0 439.3,1056.1 Z" fill="#c58d72"/><polygon points="515.5,1002.3 567.0,926.1 587.2,881.3 636.5,944.0 665.6,1065.0 645.5,1038.1 582.7,1002.3" fill="#f4f4f2"/><path d="M154.6,1047.1 C174.8,1037.8 242.4,1034.4 268.9,1040.4 C295.5,1046.4 301.1,1078.1 313.8,1083.0 C326.5,1087.8 342.9,1063.5 345.1,1069.5 C347.4,1075.5 336.2,1107.6 327.2,1118.8 C318.2,1130.0 301.1,1126.7 291.3,1136.7 C281.6,1146.8 277.2,1171.5 268.9,1179.3 C260.7,1187.2 254.7,1186.8 242.0,1183.8 C229.3,1180.8 206.6,1168.5 192.7,1161.4 C178.9,1154.3 166.6,1152.1 159.1,1141.2 C151.7,1130.4 148.7,1112.1 147.9,1096.4 C147.2,1080.7 134.5,1056.4 154.6,1047.1 Z" fill="#b8806a"/><polygon points="322.7,1141.2 394.4,1069.5 448.2,1042.6 537.9,961.9 587.2,881.3 596.1,903.7 542.4,988.8 448.2,1065.0 367.5,1123.3 277.9,1190.5 233.1,1230.9" fill="#f6a9b6" stroke="#e6909e" stroke-width="1.5"/><path d="M201.7,1477.4 C137.5,1443.8 232.3,1328.0 251.0,1275.7 C269.7,1223.4 288.4,1198.8 313.8,1163.6 C339.2,1128.5 381.0,1083.7 403.4,1065.0 C425.8,1046.4 425.8,1047.8 448.2,1051.6 C470.6,1055.3 508.0,1069.5 537.9,1087.4 C567.8,1105.4 610.7,1139.0 627.5,1159.2 C644.3,1179.3 637.2,1155.4 638.7,1208.5 C640.2,1261.5 709.3,1432.6 636.5,1477.4 C563.6,1522.2 265.9,1511.0 201.7,1477.4 Z" fill="#e23a8c"/><path d="M251.0,1455.0 C247.3,1425.1 257.0,1320.5 268.9,1275.7 C280.9,1230.9 309.3,1201.0 322.7,1186.1 C336.2,1171.1 351.1,1171.1 349.6,1186.1 C348.1,1201.0 323.5,1230.9 313.8,1275.7 C304.0,1320.5 301.8,1425.1 291.3,1455.0 C280.9,1484.9 254.7,1484.9 251.0,1455.0 Z" fill="#d02e7c" opacity="0.5"/></g></svg><svg class="a" style="left:1307.6px;top:400.0px;" width="878" height="1386" viewBox="0 0 878 1386"><defs><clipPath id="p2disc"><circle cx="439.4" cy="544.6" r="277"/></clipPath><clipPath id="p2outer"><circle cx="439.4" cy="544.6" r="326"/></clipPath><clipPath id="p2ring"><path d="M113.39999999999998,544.6 a326,326 0 1,0 652,0 a326,326 0 1,0 -652,0 Z M162.39999999999998,544.6 a277,277 0 1,1 554,0 a277,277 0 1,1 -554,0 Z" clip-rule="evenodd"/></clipPath></defs><rect width="878" height="1386" fill="#fb7d12"/><circle cx="439.4" cy="544.6" r="392" fill="#ffdb3f"/><circle cx="439.4" cy="544.6" r="326" fill="#fdf98b"/><path d="M724.5,386.6 A326,326 0 0 0 281.4,259.5 L305.1,302.3 A277,277 0 0 1 681.7,410.3 Z" fill="#b2cf66"/><path d="M197.1,762.7 A326,326 0 0 0 306.8,842.4 L326.7,797.7 A277,277 0 0 1 233.5,729.9 Z" fill="#b2cf66"/><path d="M534.7,856.4 A326,326 0 0 0 602.4,826.9 L577.9,784.5 A277,277 0 0 1 520.4,809.5 Z" fill="#ffa53c"/><circle cx="439.4" cy="544.6" r="277" fill="#04924f"/><g clip-path="url(#p2disc)"><path d="M140,200 L520,200 C500,300 470,350 420,390 C360,430 300,480 250,495 C210,505 180,512 140,520 Z" fill="#0bc17c"/><path d="M545,200 L640,200 C610,270 590,310 585,318 C570,350 555,375 545,395 L470,400 C510,350 530,300 545,200 Z" fill="#b2cf66"/><path d="M140,520 C190,512 230,502 262,492 L262,560 C230,566 190,572 140,580 Z" fill="#b2cf66"/><path d="M140,580 C190,572 230,566 262,559 L266,609 C230,615 190,622 140,630 Z" fill="#facffa"/><path d="M600,505 C660,515 720,530 780,540 L780,600 C720,590 660,582 600,578 Z" fill="#e9a1ea"/><path d="M600,578 C660,582 720,590 780,600 L780,655 C720,650 660,640 600,634 Z" fill="#facffa"/></g><g clip-path="url(#p2ring)"><path d="M100,515 L170,515 L170,580 L100,585 Z" fill="#ffa53c"/><path d="M700,535 L800,545 L800,620 L700,610 Z" fill="#e9a1ea"/></g><g clip-path="url(#p2outer)"><path d="M565,195 L556.3,240.7 C552,258 548,268 544.7,277.6 C538,295 533,305 527.7,316.3 C520,333 512,348 503.3,360 C490,375 478,384 461,392 C440,412 420,430 400,450 C370,470 340,490 305,510 L255,530 L262,488 C290,472 310,462 330,450 C355,432 375,412 396,392 C410,382 425,370 435.3,360 C455,330 468,310 477.3,291 C480,285 483,278 485.7,271.8 C492,255 497,240 501.6,225.5 L508,195 Z" fill="#ffffff"/></g><circle cx="439.4" cy="544.6" r="166" fill="none" stroke="#e9a1ea" stroke-width="36"/><path d="M264.6,481.0 A186,186 0 0 0 254.1,560.8 L294.0,557.3 A146,146 0 0 1 302.2,494.7 Z" fill="#ffffff"/><circle cx="439.4" cy="544.6" r="126" fill="none" stroke="#cb5104" stroke-width="44"/><circle cx="439.4" cy="544.6" r="104" fill="#f3f07a"/><path d="M335.4,544.6 A104,104 0 0 1 419.4,442.6 L469.4,484.6 L379.4,584.6 Z" fill="#0bc17c"/><g transform="translate(48,183) scale(0.895)"><path d="M251.0,425.8 C251.8,412.4 259.2,399.7 268.9,390.0 C278.6,380.2 300.3,375.8 309.3,367.5 C318.2,359.3 320.9,350.4 322.7,340.7 C324.6,330.9 317.5,320.5 320.5,309.3 C323.5,298.1 330.6,281.6 340.7,273.4 C350.7,265.2 368.3,257.7 381.0,260.0 C393.7,262.2 408.6,277.9 416.9,286.9 C425.1,295.8 421.3,308.9 430.3,313.8 C439.3,318.6 459.4,319.0 470.6,316.0 C481.8,313.0 486.3,300.7 497.5,295.8 C508.7,291.0 527.4,288.4 537.9,286.9 C548.3,285.4 553.6,283.9 560.3,286.9 C567.0,289.9 573.0,298.8 578.2,304.8 C583.4,310.8 588.7,313.8 591.7,322.7 C594.7,331.7 596.9,347.4 596.1,358.6 C595.4,369.8 583.1,375.8 587.2,390.0 C591.3,404.2 617.4,426.6 620.8,443.7 C624.2,460.9 608.1,476.6 607.4,493.1 C606.6,509.5 612.6,523.7 616.3,542.4 C620.1,561.0 629.0,586.4 629.8,605.1 C630.5,623.8 627.1,639.8 620.8,654.4 C614.4,669.1 601.7,682.5 591.7,693.0 C581.6,703.4 570.7,708.7 560.3,717.2 C549.8,725.7 537.9,748.1 528.9,744.1 C519.9,740.0 527.4,701.5 506.5,693.0 C485.6,684.4 440.0,693.0 403.4,693.0 C366.8,693.0 306.3,697.9 286.9,693.0 C267.4,688.0 289.9,672.8 286.9,663.4 C283.9,654.0 274.2,648.4 268.9,636.5 C263.7,624.5 255.5,604.4 255.5,591.7 C255.5,579.0 263.7,573.0 268.9,560.3 C274.2,547.6 287.6,530.4 286.9,515.5 C286.1,500.5 270.4,485.6 264.5,470.6 C258.5,455.7 250.3,439.3 251.0,425.8 Z" fill="#231512"/><circle cx="248.9" cy="426.7" r="5.1" fill="#231512"/><circle cx="247.3" cy="421.4" r="4.6" fill="none" stroke="#231512" stroke-width="2"/><circle cx="248.7" cy="421.4" r="6.0" fill="#231512"/><circle cx="247.7" cy="425.3" r="3.3" fill="none" stroke="#231512" stroke-width="2"/><circle cx="250.6" cy="418.6" r="4.1" fill="#231512"/><circle cx="252.8" cy="416.8" r="6.4" fill="#231512"/><circle cx="250.2" cy="412.6" r="5.6" fill="none" stroke="#231512" stroke-width="2"/><circle cx="253.7" cy="412.1" r="4.1" fill="#231512"/><circle cx="255.4" cy="410.5" r="4.7" fill="none" stroke="#231512" stroke-width="2"/><circle cx="254.0" cy="403.8" r="6.2" fill="#231512"/><circle cx="253.1" cy="401.6" r="5.0" fill="none" stroke="#231512" stroke-width="2"/><circle cx="258.4" cy="401.7" r="6.4" fill="#231512"/><circle cx="259.4" cy="399.9" r="7.0" fill="#231512"/><circle cx="264.8" cy="394.9" r="7.9" fill="#231512"/><circle cx="265.6" cy="394.5" r="4.1" fill="#231512"/><circle cx="260.1" cy="396.5" r="4.5" fill="none" stroke="#231512" stroke-width="2"/><circle cx="269.4" cy="392.2" r="7.3" fill="#231512"/><circle cx="270.5" cy="393.2" r="5.1" fill="none" stroke="#231512" stroke-width="2"/><circle cx="274.2" cy="389.9" r="5.8" fill="#231512"/><circle cx="273.4" cy="385.9" r="6.8" fill="#231512"/><circle cx="282.2" cy="381.1" r="8.5" fill="#231512"/><circle cx="281.9" cy="380.0" r="6.8" fill="#231512"/><circle cx="276.6" cy="383.2" r="3.4" fill="none" stroke="#231512" stroke-width="2"/><circle cx="287.9" cy="377.5" r="4.1" fill="#231512"/><circle cx="293.7" cy="376.5" r="3.9" fill="#231512"/><circle cx="300.6" cy="372.8" r="7.6" fill="#231512"/><circle cx="304.9" cy="374.8" r="5.3" fill="#231512"/><circle cx="301.7" cy="371.6" r="3.5" fill="none" stroke="#231512" stroke-width="2"/><circle cx="306.8" cy="368.5" r="5.9" fill="#231512"/><circle cx="305.2" cy="369.3" r="4.3" fill="none" stroke="#231512" stroke-width="2"/><circle cx="310.4" cy="367.6" r="8.3" fill="#231512"/><circle cx="309.1" cy="367.5" r="6.9" fill="#231512"/><circle cx="315.7" cy="361.9" r="7.9" fill="#231512"/><circle cx="316.6" cy="357.3" r="4.0" fill="#231512"/><circle cx="312.5" cy="355.4" r="3.6" fill="none" stroke="#231512" stroke-width="2"/><circle cx="314.3" cy="355.2" r="3.8" fill="#231512"/><circle cx="308.7" cy="359.7" r="4.1" fill="none" stroke="#231512" stroke-width="2"/><circle cx="316.6" cy="353.2" r="6.6" fill="#231512"/><circle cx="312.0" cy="357.4" r="4.1" fill="none" stroke="#231512" stroke-width="2"/><circle cx="319.6" cy="351.9" r="8.5" fill="#231512"/><circle cx="317.7" cy="349.0" r="3.3" fill="none" stroke="#231512" stroke-width="2"/><circle cx="318.7" cy="346.3" r="7.6" fill="#231512"/><circle cx="319.3" cy="346.7" r="6.1" fill="#231512"/><circle cx="325.1" cy="351.0" r="4.6" fill="none" stroke="#231512" stroke-width="2"/><circle cx="320.7" cy="342.7" r="7.0" fill="#231512"/><circle cx="321.1" cy="346.1" r="5.3" fill="none" stroke="#231512" stroke-width="2"/><circle cx="321.1" cy="342.5" r="5.1" fill="#231512"/><circle cx="324.9" cy="339.6" r="7.8" fill="#231512"/><circle cx="323.0" cy="333.9" r="4.6" fill="#231512"/><circle cx="320.4" cy="331.0" r="3.1" fill="none" stroke="#231512" stroke-width="2"/><circle cx="325.2" cy="331.4" r="7.0" fill="#231512"/><circle cx="324.6" cy="327.8" r="8.4" fill="#231512"/><circle cx="321.0" cy="324.3" r="3.7" fill="none" stroke="#231512" stroke-width="2"/><circle cx="323.6" cy="327.6" r="6.6" fill="#231512"/><circle cx="322.3" cy="319.9" r="6.8" fill="#231512"/><circle cx="321.7" cy="320.7" r="8.0" fill="#231512"/><circle cx="321.5" cy="314.9" r="4.4" fill="#231512"/><circle cx="319.2" cy="312.0" r="8.4" fill="#231512"/><circle cx="318.5" cy="307.0" r="7.1" fill="#231512"/><circle cx="322.2" cy="302.8" r="5.7" fill="none" stroke="#231512" stroke-width="2"/><circle cx="324.4" cy="306.7" r="7.6" fill="#231512"/><circle cx="320.5" cy="299.1" r="6.2" fill="#231512"/><circle cx="324.4" cy="300.7" r="6.7" fill="#231512"/><circle cx="327.9" cy="292.4" r="7.9" fill="#231512"/><circle cx="324.8" cy="293.5" r="3.9" fill="none" stroke="#231512" stroke-width="2"/><circle cx="327.4" cy="288.0" r="4.8" fill="#231512"/><circle cx="329.8" cy="286.9" r="5.3" fill="#231512"/><circle cx="334.9" cy="282.7" r="5.6" fill="#231512"/><circle cx="332.1" cy="278.9" r="6.1" fill="#231512"/><circle cx="335.7" cy="274.9" r="3.0" fill="none" stroke="#231512" stroke-width="2"/><circle cx="339.1" cy="276.5" r="5.9" fill="#231512"/><circle cx="339.7" cy="279.9" r="4.6" fill="none" stroke="#231512" stroke-width="2"/><circle cx="341.0" cy="271.9" r="4.0" fill="#231512"/><circle cx="341.1" cy="272.7" r="5.3" fill="none" stroke="#231512" stroke-width="2"/><circle cx="346.4" cy="270.6" r="7.3" fill="#231512"/><circle cx="347.6" cy="269.8" r="6.0" fill="#231512"/><circle cx="351.3" cy="269.1" r="6.2" fill="#231512"/><circle cx="358.2" cy="263.0" r="7.9" fill="#231512"/><circle cx="361.9" cy="260.6" r="8.2" fill="#231512"/><circle cx="356.8" cy="257.5" r="4.3" fill="none" stroke="#231512" stroke-width="2"/><circle cx="365.2" cy="263.1" r="3.9" fill="#231512"/><circle cx="369.9" cy="261.3" r="4.3" fill="#231512"/><circle cx="375.5" cy="257.9" r="5.6" fill="none" stroke="#231512" stroke-width="2"/><circle cx="372.3" cy="259.6" r="8.3" fill="#231512"/><circle cx="375.0" cy="259.2" r="7.7" fill="#231512"/><circle cx="379.2" cy="258.9" r="5.2" fill="#231512"/><circle cx="385.2" cy="260.7" r="3.6" fill="#231512"/><circle cx="386.7" cy="260.8" r="4.0" fill="none" stroke="#231512" stroke-width="2"/><circle cx="391.7" cy="264.5" r="3.8" fill="#231512"/><circle cx="391.4" cy="262.3" r="4.0" fill="#231512"/><circle cx="394.5" cy="267.4" r="4.9" fill="#231512"/><circle cx="399.2" cy="268.8" r="7.6" fill="#231512"/><circle cx="405.5" cy="271.7" r="6.4" fill="#231512"/><circle cx="404.6" cy="266.6" r="5.1" fill="none" stroke="#231512" stroke-width="2"/><circle cx="408.7" cy="279.3" r="8.2" fill="#231512"/><circle cx="403.5" cy="283.7" r="5.6" fill="none" stroke="#231512" stroke-width="2"/><circle cx="410.2" cy="281.2" r="5.8" fill="#231512"/><circle cx="412.0" cy="284.2" r="4.8" fill="#231512"/><circle cx="407.9" cy="278.8" r="3.3" fill="none" stroke="#231512" stroke-width="2"/><circle cx="415.7" cy="285.7" r="4.5" fill="#231512"/><circle cx="419.0" cy="287.7" r="4.9" fill="#231512"/><circle cx="416.0" cy="281.9" r="3.1" fill="none" stroke="#231512" stroke-width="2"/><circle cx="420.9" cy="290.8" r="7.2" fill="#231512"/><circle cx="419.3" cy="297.6" r="8.2" fill="#231512"/><circle cx="424.6" cy="298.2" r="6.0" fill="#231512"/><circle cx="426.2" cy="300.9" r="6.9" fill="#231512"/><circle cx="424.9" cy="304.2" r="7.0" fill="#231512"/><circle cx="420.4" cy="299.1" r="3.2" fill="none" stroke="#231512" stroke-width="2"/><circle cx="423.5" cy="305.5" r="7.2" fill="#231512"/><circle cx="428.0" cy="307.5" r="5.5" fill="none" stroke="#231512" stroke-width="2"/><circle cx="424.7" cy="308.7" r="4.9" fill="#231512"/><circle cx="427.6" cy="310.6" r="4.3" fill="#231512"/><circle cx="430.6" cy="312.2" r="8.4" fill="#231512"/><circle cx="432.4" cy="312.1" r="5.0" fill="#231512"/><circle cx="436.9" cy="314.4" r="5.9" fill="#231512"/><circle cx="439.4" cy="314.5" r="3.5" fill="#231512"/><circle cx="442.3" cy="316.3" r="3.7" fill="#231512"/><circle cx="442.6" cy="319.3" r="4.8" fill="none" stroke="#231512" stroke-width="2"/><circle cx="450.9" cy="320.1" r="6.8" fill="#231512"/><circle cx="457.1" cy="315.8" r="5.1" fill="#231512"/><circle cx="455.9" cy="319.8" r="6.7" fill="#231512"/><circle cx="464.4" cy="319.3" r="6.6" fill="#231512"/><circle cx="464.5" cy="323.3" r="4.6" fill="none" stroke="#231512" stroke-width="2"/><circle cx="469.0" cy="317.3" r="7.5" fill="#231512"/><circle cx="471.8" cy="314.4" r="6.9" fill="#231512"/><circle cx="470.1" cy="309.6" r="3.4" fill="none" stroke="#231512" stroke-width="2"/><circle cx="474.2" cy="315.6" r="7.7" fill="#231512"/><circle cx="476.6" cy="310.2" r="6.9" fill="#231512"/><circle cx="479.3" cy="311.5" r="7.2" fill="#231512"/><circle cx="483.1" cy="307.5" r="3.8" fill="#231512"/><circle cx="485.9" cy="304.0" r="3.8" fill="none" stroke="#231512" stroke-width="2"/><circle cx="486.9" cy="306.6" r="7.2" fill="#231512"/><circle cx="487.6" cy="305.8" r="5.9" fill="#231512"/><circle cx="486.4" cy="299.6" r="6.7" fill="#231512"/><circle cx="484.0" cy="300.5" r="5.2" fill="none" stroke="#231512" stroke-width="2"/><circle cx="488.9" cy="298.1" r="3.6" fill="#231512"/><circle cx="495.4" cy="296.2" r="7.0" fill="#231512"/><circle cx="497.3" cy="293.5" r="5.8" fill="#231512"/><circle cx="504.0" cy="297.1" r="4.5" fill="#231512"/><circle cx="507.8" cy="302.7" r="4.4" fill="none" stroke="#231512" stroke-width="2"/><circle cx="503.6" cy="291.4" r="5.7" fill="#231512"/><circle cx="509.7" cy="289.9" r="4.6" fill="#231512"/><circle cx="511.4" cy="292.9" r="8.3" fill="#231512"/><circle cx="519.2" cy="288.5" r="7.9" fill="#231512"/><circle cx="519.5" cy="286.3" r="5.9" fill="#231512"/><circle cx="525.5" cy="286.4" r="5.8" fill="#231512"/><circle cx="529.6" cy="280.4" r="3.9" fill="none" stroke="#231512" stroke-width="2"/><circle cx="532.8" cy="285.6" r="7.3" fill="#231512"/><circle cx="536.9" cy="286.1" r="7.1" fill="#231512"/><circle cx="540.9" cy="287.4" r="5.5" fill="#231512"/><circle cx="539.5" cy="283.7" r="5.6" fill="#231512"/><circle cx="536.9" cy="288.9" r="5.5" fill="none" stroke="#231512" stroke-width="2"/><circle cx="542.2" cy="286.1" r="4.7" fill="#231512"/><circle cx="547.6" cy="290.7" r="4.1" fill="none" stroke="#231512" stroke-width="2"/><circle cx="546.8" cy="288.1" r="7.6" fill="#231512"/><circle cx="549.7" cy="282.7" r="6.2" fill="#231512"/><circle cx="552.0" cy="286.1" r="5.8" fill="#231512"/><circle cx="557.1" cy="281.6" r="3.1" fill="none" stroke="#231512" stroke-width="2"/><circle cx="551.6" cy="283.9" r="5.9" fill="#231512"/><circle cx="553.0" cy="286.2" r="8.4" fill="#231512"/><circle cx="551.8" cy="282.2" r="4.7" fill="none" stroke="#231512" stroke-width="2"/><circle cx="554.6" cy="288.0" r="4.3" fill="#231512"/><circle cx="560.7" cy="289.1" r="4.6" fill="#231512"/><circle cx="558.4" cy="284.4" r="4.2" fill="#231512"/><circle cx="555.3" cy="281.5" r="3.3" fill="none" stroke="#231512" stroke-width="2"/><circle cx="564.6" cy="289.4" r="6.3" fill="#231512"/><circle cx="564.4" cy="288.6" r="5.6" fill="#231512"/><circle cx="561.7" cy="294.2" r="3.2" fill="none" stroke="#231512" stroke-width="2"/><circle cx="566.2" cy="291.7" r="4.1" fill="#231512"/><circle cx="566.6" cy="291.2" r="4.6" fill="#231512"/><circle cx="572.5" cy="296.8" r="5.7" fill="#231512"/><circle cx="568.8" cy="298.0" r="3.6" fill="#231512"/><circle cx="573.8" cy="295.9" r="5.9" fill="#231512"/><circle cx="576.9" cy="303.1" r="8.1" fill="#231512"/><circle cx="574.3" cy="300.8" r="4.7" fill="#231512"/><circle cx="580.9" cy="306.1" r="6.9" fill="#231512"/><circle cx="579.5" cy="306.8" r="7.3" fill="#231512"/><circle cx="576.3" cy="311.9" r="5.3" fill="none" stroke="#231512" stroke-width="2"/><circle cx="580.2" cy="305.9" r="6.7" fill="#231512"/><circle cx="582.5" cy="301.2" r="4.9" fill="none" stroke="#231512" stroke-width="2"/><circle cx="583.0" cy="310.1" r="3.9" fill="#231512"/><circle cx="585.0" cy="308.2" r="4.6" fill="#231512"/><circle cx="590.5" cy="309.9" r="4.4" fill="none" stroke="#231512" stroke-width="2"/><circle cx="585.6" cy="311.0" r="7.9" fill="#231512"/><circle cx="588.1" cy="308.7" r="5.9" fill="none" stroke="#231512" stroke-width="2"/><circle cx="587.1" cy="315.3" r="3.6" fill="#231512"/><circle cx="589.4" cy="318.6" r="4.8" fill="#231512"/><circle cx="587.5" cy="317.6" r="3.1" fill="none" stroke="#231512" stroke-width="2"/><circle cx="587.8" cy="319.8" r="6.9" fill="#231512"/><circle cx="588.9" cy="323.0" r="6.0" fill="#231512"/><circle cx="585.7" cy="319.7" r="5.5" fill="none" stroke="#231512" stroke-width="2"/><circle cx="590.4" cy="325.4" r="7.3" fill="#231512"/><circle cx="590.9" cy="325.1" r="4.4" fill="#231512"/><circle cx="591.2" cy="328.2" r="8.2" fill="#231512"/><circle cx="586.9" cy="322.8" r="5.9" fill="none" stroke="#231512" stroke-width="2"/><circle cx="593.5" cy="334.7" r="3.8" fill="#231512"/><circle cx="597.7" cy="338.6" r="7.2" fill="#231512"/><circle cx="603.0" cy="341.5" r="3.6" fill="none" stroke="#231512" stroke-width="2"/><circle cx="596.3" cy="339.1" r="3.7" fill="#231512"/><circle cx="593.8" cy="340.7" r="5.2" fill="#231512"/><circle cx="599.2" cy="336.2" r="4.1" fill="none" stroke="#231512" stroke-width="2"/><circle cx="594.3" cy="346.7" r="8.3" fill="#231512"/><circle cx="595.8" cy="348.7" r="7.6" fill="#231512"/><circle cx="598.8" cy="353.3" r="5.4" fill="#231512"/><circle cx="593.3" cy="358.0" r="8.0" fill="#231512"/><circle cx="592.8" cy="359.0" r="7.3" fill="#231512"/><circle cx="589.9" cy="362.0" r="5.8" fill="none" stroke="#231512" stroke-width="2"/><circle cx="593.6" cy="363.4" r="8.0" fill="#231512"/><circle cx="591.7" cy="368.9" r="6.6" fill="#231512"/><circle cx="585.7" cy="372.0" r="3.8" fill="none" stroke="#231512" stroke-width="2"/><circle cx="592.3" cy="373.0" r="8.1" fill="#231512"/><circle cx="592.0" cy="378.5" r="3.7" fill="none" stroke="#231512" stroke-width="2"/><circle cx="589.2" cy="371.7" r="8.3" fill="#231512"/><circle cx="590.9" cy="374.1" r="6.0" fill="#231512"/><circle cx="589.1" cy="380.7" r="7.2" fill="#231512"/><circle cx="585.4" cy="381.5" r="5.1" fill="#231512"/><circle cx="584.6" cy="387.5" r="3.9" fill="#231512"/><circle cx="579.0" cy="388.1" r="3.2" fill="none" stroke="#231512" stroke-width="2"/><circle cx="590.1" cy="392.3" r="5.1" fill="#231512"/><circle cx="586.5" cy="392.0" r="4.8" fill="#231512"/><circle cx="591.6" cy="397.8" r="7.0" fill="#231512"/><circle cx="596.7" cy="406.1" r="6.6" fill="#231512"/><circle cx="597.5" cy="412.1" r="6.8" fill="#231512"/><circle cx="596.0" cy="415.0" r="4.7" fill="none" stroke="#231512" stroke-width="2"/><circle cx="602.8" cy="414.2" r="4.5" fill="#231512"/><circle cx="603.7" cy="412.1" r="5.7" fill="none" stroke="#231512" stroke-width="2"/><circle cx="611.7" cy="421.5" r="5.5" fill="#231512"/><circle cx="613.5" cy="427.4" r="5.4" fill="none" stroke="#231512" stroke-width="2"/><circle cx="612.7" cy="429.1" r="4.0" fill="#231512"/><circle cx="613.6" cy="431.7" r="8.1" fill="#231512"/><circle cx="619.3" cy="432.7" r="3.6" fill="none" stroke="#231512" stroke-width="2"/><circle cx="618.4" cy="440.6" r="8.2" fill="#231512"/><circle cx="622.5" cy="446.4" r="4.8" fill="#231512"/><circle cx="623.9" cy="443.0" r="4.8" fill="none" stroke="#231512" stroke-width="2"/><circle cx="619.1" cy="447.1" r="5.3" fill="#231512"/><circle cx="620.9" cy="443.5" r="4.8" fill="none" stroke="#231512" stroke-width="2"/><circle cx="619.7" cy="455.0" r="3.6" fill="#231512"/><circle cx="616.2" cy="458.5" r="3.9" fill="none" stroke="#231512" stroke-width="2"/><circle cx="616.9" cy="456.5" r="6.2" fill="#231512"/><circle cx="618.6" cy="461.3" r="6.3" fill="#231512"/><circle cx="617.5" cy="458.7" r="5.1" fill="none" stroke="#231512" stroke-width="2"/><circle cx="618.3" cy="467.6" r="5.0" fill="#231512"/><circle cx="612.9" cy="475.7" r="5.3" fill="#231512"/><circle cx="609.4" cy="479.8" r="5.3" fill="#231512"/><circle cx="614.2" cy="478.9" r="3.0" fill="none" stroke="#231512" stroke-width="2"/><circle cx="608.8" cy="485.6" r="7.6" fill="#231512"/><circle cx="605.1" cy="488.5" r="4.3" fill="#231512"/><circle cx="604.9" cy="493.8" r="8.0" fill="#231512"/><circle cx="605.2" cy="496.6" r="6.0" fill="#231512"/><circle cx="605.3" cy="502.6" r="8.1" fill="#231512"/><circle cx="606.4" cy="505.2" r="8.3" fill="#231512"/><circle cx="609.0" cy="509.4" r="8.4" fill="#231512"/><circle cx="612.6" cy="517.6" r="5.4" fill="#231512"/><circle cx="613.0" cy="520.0" r="4.3" fill="#231512"/><circle cx="614.6" cy="524.7" r="7.7" fill="#231512"/><circle cx="614.8" cy="523.3" r="4.2" fill="none" stroke="#231512" stroke-width="2"/><circle cx="612.4" cy="533.0" r="4.1" fill="#231512"/><circle cx="615.5" cy="538.4" r="3.7" fill="#231512"/><circle cx="610.9" cy="539.6" r="5.5" fill="none" stroke="#231512" stroke-width="2"/><circle cx="617.1" cy="541.2" r="6.3" fill="#231512"/><circle cx="617.1" cy="549.1" r="6.4" fill="#231512"/><circle cx="616.2" cy="555.0" r="5.7" fill="#231512"/><circle cx="622.3" cy="562.3" r="4.7" fill="#231512"/><circle cx="622.3" cy="564.8" r="4.4" fill="#231512"/><circle cx="617.4" cy="564.1" r="4.3" fill="none" stroke="#231512" stroke-width="2"/><circle cx="621.4" cy="574.6" r="6.1" fill="#231512"/><circle cx="624.7" cy="574.7" r="5.2" fill="none" stroke="#231512" stroke-width="2"/><circle cx="625.8" cy="579.6" r="3.8" fill="#231512"/><circle cx="629.4" cy="589.8" r="4.2" fill="#231512"/><circle cx="626.6" cy="596.1" r="7.6" fill="#231512"/><circle cx="631.8" cy="597.3" r="8.3" fill="#231512"/><circle cx="627.2" cy="604.2" r="8.2" fill="#231512"/><circle cx="632.2" cy="609.3" r="4.3" fill="#231512"/><circle cx="629.7" cy="618.5" r="4.2" fill="#231512"/><circle cx="629.8" cy="616.4" r="3.8" fill="none" stroke="#231512" stroke-width="2"/><circle cx="627.4" cy="619.2" r="3.7" fill="#231512"/><circle cx="631.1" cy="624.3" r="6.9" fill="#231512"/><circle cx="628.1" cy="632.1" r="4.1" fill="#231512"/><circle cx="627.2" cy="636.6" r="7.9" fill="#231512"/><circle cx="628.6" cy="641.6" r="4.0" fill="#231512"/><circle cx="622.8" cy="648.4" r="7.5" fill="#231512"/><circle cx="624.2" cy="649.6" r="5.3" fill="#231512"/><circle cx="618.8" cy="653.5" r="5.2" fill="none" stroke="#231512" stroke-width="2"/><circle cx="621.6" cy="657.3" r="4.8" fill="#231512"/><circle cx="617.6" cy="655.8" r="6.8" fill="#231512"/><circle cx="619.0" cy="655.0" r="3.4" fill="none" stroke="#231512" stroke-width="2"/><circle cx="618.7" cy="660.8" r="6.1" fill="#231512"/><circle cx="612.9" cy="654.9" r="5.0" fill="none" stroke="#231512" stroke-width="2"/><circle cx="611.2" cy="666.4" r="5.3" fill="#231512"/><circle cx="612.3" cy="662.8" r="4.8" fill="none" stroke="#231512" stroke-width="2"/><circle cx="610.6" cy="669.1" r="6.6" fill="#231512"/><circle cx="605.5" cy="672.8" r="4.7" fill="#231512"/><circle cx="606.1" cy="678.5" r="7.9" fill="#231512"/><circle cx="607.9" cy="679.3" r="3.0" fill="none" stroke="#231512" stroke-width="2"/><circle cx="602.1" cy="682.5" r="5.3" fill="#231512"/><circle cx="596.4" cy="688.8" r="7.2" fill="#231512"/><circle cx="595.3" cy="685.6" r="4.6" fill="none" stroke="#231512" stroke-width="2"/><circle cx="596.4" cy="686.8" r="3.8" fill="#231512"/><circle cx="589.5" cy="691.2" r="8.2" fill="#231512"/><circle cx="589.5" cy="697.8" r="6.0" fill="#231512"/><circle cx="587.1" cy="692.4" r="3.9" fill="none" stroke="#231512" stroke-width="2"/><circle cx="587.2" cy="700.0" r="7.9" fill="#231512"/><circle cx="590.2" cy="699.6" r="5.5" fill="none" stroke="#231512" stroke-width="2"/><circle cx="511.7" cy="694.7" r="7.2" fill="#231512"/><circle cx="506.1" cy="692.7" r="3.7" fill="none" stroke="#231512" stroke-width="2"/><circle cx="507.7" cy="695.0" r="7.2" fill="#231512"/><circle cx="499.8" cy="690.5" r="4.8" fill="#231512"/><circle cx="489.9" cy="690.5" r="6.1" fill="#231512"/><circle cx="484.2" cy="686.3" r="4.6" fill="#231512"/><circle cx="487.1" cy="691.6" r="3.7" fill="none" stroke="#231512" stroke-width="2"/><circle cx="470.7" cy="691.6" r="7.2" fill="#231512"/><circle cx="475.6" cy="693.1" r="3.7" fill="none" stroke="#231512" stroke-width="2"/><circle cx="461.8" cy="692.6" r="7.0" fill="#231512"/><circle cx="450.7" cy="692.7" r="7.7" fill="#231512"/><circle cx="438.3" cy="690.2" r="7.1" fill="#231512"/><circle cx="433.2" cy="695.1" r="4.9" fill="none" stroke="#231512" stroke-width="2"/><circle cx="423.3" cy="689.8" r="4.2" fill="#231512"/><circle cx="412.5" cy="689.9" r="5.2" fill="#231512"/><circle cx="414.1" cy="692.3" r="5.1" fill="none" stroke="#231512" stroke-width="2"/><circle cx="400.8" cy="693.5" r="7.2" fill="#231512"/><circle cx="393.7" cy="695.4" r="7.6" fill="#231512"/><circle cx="398.7" cy="700.8" r="5.6" fill="none" stroke="#231512" stroke-width="2"/><circle cx="377.3" cy="691.1" r="4.0" fill="#231512"/><circle cx="381.1" cy="692.7" r="5.5" fill="none" stroke="#231512" stroke-width="2"/><circle cx="366.6" cy="692.6" r="7.6" fill="#231512"/><circle cx="369.6" cy="689.1" r="3.3" fill="none" stroke="#231512" stroke-width="2"/><circle cx="351.7" cy="691.5" r="5.1" fill="#231512"/><circle cx="354.3" cy="689.9" r="3.8" fill="none" stroke="#231512" stroke-width="2"/><circle cx="341.5" cy="694.8" r="5.1" fill="#231512"/><circle cx="322.9" cy="694.6" r="6.6" fill="#231512"/><circle cx="312.8" cy="696.4" r="7.4" fill="#231512"/><circle cx="305.1" cy="692.4" r="4.6" fill="#231512"/><circle cx="290.9" cy="692.4" r="4.4" fill="#231512"/><circle cx="283.9" cy="692.9" r="8.4" fill="#231512"/><circle cx="280.3" cy="691.2" r="7.5" fill="#231512"/><circle cx="277.5" cy="696.5" r="5.5" fill="none" stroke="#231512" stroke-width="2"/><circle cx="278.0" cy="690.1" r="4.9" fill="#231512"/><circle cx="279.7" cy="683.7" r="4.0" fill="#231512"/><circle cx="281.1" cy="683.9" r="7.0" fill="#231512"/><circle cx="280.1" cy="682.2" r="5.5" fill="#231512"/><circle cx="274.4" cy="678.7" r="5.7" fill="none" stroke="#231512" stroke-width="2"/><circle cx="285.0" cy="676.4" r="4.8" fill="#231512"/><circle cx="282.9" cy="672.8" r="7.9" fill="#231512"/><circle cx="287.7" cy="670.5" r="7.3" fill="#231512"/><circle cx="283.5" cy="674.6" r="4.0" fill="none" stroke="#231512" stroke-width="2"/><circle cx="288.5" cy="664.4" r="6.8" fill="#231512"/><circle cx="287.3" cy="661.1" r="7.4" fill="#231512"/><circle cx="284.2" cy="658.8" r="7.9" fill="#231512"/><circle cx="288.3" cy="654.7" r="5.1" fill="none" stroke="#231512" stroke-width="2"/><circle cx="282.8" cy="657.1" r="4.3" fill="#231512"/><circle cx="281.6" cy="653.8" r="4.3" fill="#231512"/><circle cx="278.4" cy="656.1" r="7.1" fill="#231512"/><circle cx="284.2" cy="659.6" r="4.2" fill="none" stroke="#231512" stroke-width="2"/><circle cx="278.4" cy="649.1" r="7.2" fill="#231512"/><circle cx="274.9" cy="647.7" r="4.0" fill="#231512"/><circle cx="278.4" cy="650.1" r="4.2" fill="none" stroke="#231512" stroke-width="2"/><circle cx="275.3" cy="645.6" r="6.0" fill="#231512"/><circle cx="274.2" cy="648.5" r="4.8" fill="none" stroke="#231512" stroke-width="2"/><circle cx="272.1" cy="643.4" r="8.0" fill="#231512"/><circle cx="269.0" cy="641.2" r="5.6" fill="#231512"/><circle cx="270.1" cy="638.6" r="7.4" fill="#231512"/><circle cx="267.0" cy="631.5" r="6.7" fill="#231512"/><circle cx="265.0" cy="630.1" r="4.0" fill="#231512"/><circle cx="262.2" cy="623.5" r="6.6" fill="#231512"/><circle cx="261.4" cy="620.3" r="6.6" fill="#231512"/><circle cx="261.2" cy="616.0" r="4.4" fill="#231512"/><circle cx="261.6" cy="606.7" r="5.9" fill="#231512"/><circle cx="259.1" cy="607.3" r="4.3" fill="#231512"/><circle cx="256.8" cy="600.3" r="4.0" fill="#231512"/><circle cx="256.6" cy="597.7" r="6.1" fill="#231512"/><circle cx="258.2" cy="589.9" r="5.6" fill="#231512"/><circle cx="257.3" cy="585.8" r="5.5" fill="#231512"/><circle cx="253.7" cy="583.4" r="5.3" fill="#231512"/><circle cx="256.9" cy="581.2" r="3.6" fill="#231512"/><circle cx="257.3" cy="577.1" r="5.3" fill="#231512"/><circle cx="260.4" cy="574.3" r="8.2" fill="#231512"/><circle cx="260.2" cy="570.9" r="5.5" fill="#231512"/><circle cx="264.5" cy="570.1" r="7.5" fill="#231512"/><circle cx="268.3" cy="566.3" r="4.6" fill="#231512"/><circle cx="269.2" cy="563.7" r="7.6" fill="#231512"/><circle cx="264.7" cy="567.7" r="4.6" fill="none" stroke="#231512" stroke-width="2"/><circle cx="271.0" cy="558.9" r="5.3" fill="#231512"/><circle cx="270.3" cy="554.5" r="4.8" fill="#231512"/><circle cx="267.7" cy="551.4" r="5.2" fill="none" stroke="#231512" stroke-width="2"/><circle cx="272.8" cy="551.8" r="5.0" fill="#231512"/><circle cx="274.4" cy="550.4" r="6.8" fill="#231512"/><circle cx="279.7" cy="545.8" r="3.8" fill="#231512"/><circle cx="282.1" cy="539.5" r="4.2" fill="#231512"/><circle cx="287.6" cy="541.4" r="3.0" fill="none" stroke="#231512" stroke-width="2"/><circle cx="280.0" cy="531.9" r="4.8" fill="#231512"/><circle cx="278.2" cy="527.7" r="5.3" fill="none" stroke="#231512" stroke-width="2"/><circle cx="286.1" cy="527.3" r="8.0" fill="#231512"/><circle cx="287.5" cy="525.7" r="6.5" fill="#231512"/><circle cx="288.7" cy="518.2" r="7.4" fill="#231512"/><circle cx="288.3" cy="515.1" r="6.2" fill="#231512"/><circle cx="284.8" cy="509.4" r="6.3" fill="#231512"/><circle cx="279.5" cy="509.0" r="4.5" fill="none" stroke="#231512" stroke-width="2"/><circle cx="284.8" cy="506.5" r="4.2" fill="#231512"/><circle cx="279.9" cy="504.1" r="7.8" fill="#231512"/><circle cx="281.4" cy="499.6" r="6.3" fill="#231512"/><circle cx="280.4" cy="490.5" r="5.6" fill="#231512"/><circle cx="271.9" cy="489.2" r="6.7" fill="#231512"/><circle cx="270.8" cy="487.0" r="8.2" fill="#231512"/><circle cx="271.4" cy="476.8" r="5.9" fill="#231512"/><circle cx="265.5" cy="477.3" r="6.6" fill="#231512"/><circle cx="264.6" cy="472.3" r="5.9" fill="#231512"/><circle cx="263.7" cy="472.9" r="4.3" fill="none" stroke="#231512" stroke-width="2"/><circle cx="261.4" cy="468.1" r="7.6" fill="#231512"/><circle cx="259.3" cy="461.6" r="6.0" fill="#231512"/><circle cx="260.5" cy="455.9" r="6.8" fill="#231512"/><circle cx="261.6" cy="457.5" r="3.9" fill="none" stroke="#231512" stroke-width="2"/><circle cx="254.2" cy="453.6" r="7.4" fill="#231512"/><circle cx="252.5" cy="446.5" r="6.2" fill="#231512"/><circle cx="257.6" cy="447.8" r="3.6" fill="none" stroke="#231512" stroke-width="2"/><circle cx="255.4" cy="445.6" r="6.8" fill="#231512"/><circle cx="253.2" cy="439.8" r="6.6" fill="#231512"/><circle cx="249.8" cy="435.2" r="6.9" fill="#231512"/><circle cx="248.7" cy="428.0" r="7.3" fill="#231512"/><circle cx="253.6" cy="429.9" r="5.3" fill="none" stroke="#231512" stroke-width="2"/><path d="M544.6,298.1 C571.5,286.9 551.3,275.7 565.7,266.7 C580.5,257.7 555.8,255.5 565.7,247.4" fill="none" stroke="#231512" stroke-width="4"/><path d="M385.5,573.7 C414.6,553.9 525.2,553.9 555.8,573.7 C586.4,593.6 572.2,665.3 569.3,693.0 C566.3,720.6 569.3,731.8 537.9,739.6 C506.5,747.3 407.1,747.3 381.0,739.6 C354.8,731.8 380.2,720.6 381.0,693.0 C381.7,665.3 356.3,593.6 385.5,573.7 Z" fill="#a87360"/><ellipse cx="360.8" cy="537.9" rx="17.0" ry="31.4" fill="#a87360"/><ellipse cx="558.0" cy="537.9" rx="11.2" ry="29.1" fill="#a87360"/><path d="M466.2,358.6 C452.0,359.7 430.3,363.1 416.9,372.0 C403.4,381.0 392.9,396.7 385.5,412.4 C378.0,428.1 373.9,448.2 372.0,466.2 C370.2,484.1 371.3,500.5 374.3,519.9 C377.3,539.4 381.4,565.5 390.0,582.7 C398.6,599.9 411.6,614.4 425.8,623.0 C440.0,631.6 459.1,634.6 475.1,634.2 C491.2,633.9 509.5,630.1 522.2,620.8 C534.9,611.5 544.6,595.8 551.3,578.2 C558.0,560.7 561.4,537.1 562.5,515.5 C563.6,493.8 562.2,468.4 558.0,448.2 C553.9,428.1 547.2,408.3 537.9,394.4 C528.5,380.6 514.0,371.3 502.0,365.3 C490.1,359.3 480.4,357.5 466.2,358.6 Z" fill="#d6a38b"/><ellipse cx="528.9" cy="528.9" rx="26.9" ry="20.2" fill="#e0a090" opacity="0.45"/><ellipse cx="416.9" cy="515.5" rx="24.7" ry="20.2" fill="#e0a090" opacity="0.35"/><path d="M401.2,437.0 Q425.8,421.3 455.0,435.7" stroke="#2a1a14" stroke-width="5" fill="none"/><path d="M504.3,437.0 Q533.4,432.5 552.2,450.5" stroke="#2a1a14" stroke-width="5" fill="none"/><ellipse cx="428.1" cy="459.4" rx="26.9" ry="11.2" fill="#c9a3b0" opacity="0.7"/><ellipse cx="524.4" cy="468.4" rx="24.7" ry="11.2" fill="#c9a3b0" opacity="0.7"/><path d="M407.9,469.7 Q429.4,457.2 451.8,469.7 Q429.4,478.7 407.9,469.7 Z" fill="#2a1812"/><path d="M502.9,476.0 Q524.4,464.4 545.9,481.8 Q524.4,486.3 502.9,476.0 Z" fill="#2a1812"/><ellipse cx="475.1" cy="495.3" rx="24.7" ry="17.9" fill="#d6a088"/><ellipse cx="468.4" cy="505.6" rx="6.3" ry="4.0" fill="#3a2018"/><ellipse cx="491.7" cy="506.5" rx="6.3" ry="4.0" fill="#3a2018"/><path d="M443.7,549.1 C446.0,544.6 460.2,537.1 466.2,535.6 C472.1,534.1 475.1,540.1 479.6,540.1 C484.1,540.1 487.8,533.8 493.1,535.6 C498.3,537.5 509.5,546.3 511.0,551.3 C512.5,556.3 508.0,562.5 502.0,565.7 C496.0,568.8 483.3,570.7 475.1,570.1 C466.9,569.6 457.9,566.0 452.7,562.5 C447.5,559.0 441.5,553.6 443.7,549.1 Z" fill="#c4625c"/><path d="M446.0,550.4 Q477.4,547.7 510.1,552.2" stroke="#8a3a36" stroke-width="1.5" fill="none"/><circle cx="371.1" cy="580.5" r="8.1" fill="none" stroke="#e0e0e0" stroke-width="3"/><circle cx="546.8" cy="596.1" r="7.2" fill="none" stroke="#e0e0e0" stroke-width="3"/><path d="M351.9,432.5 L358.6,448.2 L351.9,461.7 L345.1,448.2 Z" fill="none" stroke="#ddd" stroke-width="2.5"/><path d="M584.9,455.0 L587.2,468.4 L580.5,481.8 L576.0,468.4 Z" fill="none" stroke="#ddd" stroke-width="2.5"/><rect x="360.8" y="381.0" width="8" height="6" fill="#7ad0e8"/><rect x="568.4" y="403.4" width="5" height="9" fill="#7ad0e8"/><path d="M260.0,684.0 C267.7,669.4 261.2,671.6 279.2,662.1 C297.3,652.6 343.9,628.4 368.4,627.1 C393.0,625.8 409.7,643.5 426.7,654.5 C443.7,665.4 459.6,682.1 470.6,693.0 C481.7,703.9 481.8,708.7 493.1,719.9 C504.3,731.1 522.9,736.3 537.9,760.2 C552.8,784.1 566.3,832.7 582.7,863.3 C599.1,894.0 623.0,911.1 636.5,944.0 C649.9,976.9 650.7,1026.2 663.4,1060.5 C676.1,1094.9 700.7,1114.3 712.7,1150.2 C724.6,1186.1 729.0,1232.4 735.1,1275.7 C741.2,1319.0 746.1,1376.5 749.4,1410.2 C752.8,1443.8 869.0,1466.2 755.3,1477.4 C641.6,1488.6 167.0,1508.8 67.2,1477.4 C-32.5,1446.0 134.5,1330.2 156.9,1289.1 C179.3,1248.1 187.5,1248.1 201.7,1230.9 C215.9,1213.7 230.8,1195.0 242.0,1186.1 C253.2,1177.1 277.2,1181.6 268.9,1177.1 C260.7,1172.6 211.0,1165.1 192.7,1159.2 C174.4,1153.2 166.6,1151.7 159.1,1141.2 C151.7,1130.8 149.0,1112.1 147.9,1096.4 C146.8,1080.7 152.0,1063.5 152.4,1047.1 C152.8,1030.7 147.9,1018.0 150.2,997.8 C152.4,977.6 164.0,945.5 165.8,926.1 C167.7,906.7 156.9,899.2 161.4,881.3 C165.8,863.3 180.9,840.4 192.7,818.5 C204.6,796.6 221.4,772.3 232.6,749.9 C243.8,727.5 252.2,698.7 260.0,684.0 Z" fill="#f6a9b6"/><path d="M152.4,1033.7 C164.4,1031.4 219.6,1032.9 251.0,1038.1 C282.4,1043.4 330.2,1055.3 340.7,1065.0 C351.1,1074.7 325.7,1097.2 313.8,1096.4 C301.8,1095.7 291.3,1068.0 268.9,1060.5 C246.5,1053.1 198.7,1056.1 179.3,1051.6 C159.9,1047.1 140.4,1035.9 152.4,1033.7 Z" fill="#e98f9f" opacity="0.6"/><path d="M161.4,894.7 C182.3,888.0 283.9,895.5 313.8,903.7 C343.6,911.9 361.6,937.3 340.7,944.0 C319.7,950.7 218.1,952.2 188.3,944.0 C158.4,935.8 140.4,901.4 161.4,894.7 Z" fill="#e98f9f" opacity="0.35"/><path d="M493.1,719.9 C495.3,707.2 513.2,725.9 528.9,751.3 C544.6,776.7 581.2,843.2 587.2,872.3 C593.2,901.4 576.7,933.5 564.8,926.1 C552.8,918.6 527.4,861.8 515.5,827.5 C503.5,793.1 490.8,732.6 493.1,719.9 Z" fill="#e98f9f" opacity="0.5"/><path d="M636.5,1168.1 C645.5,1104.6 668.6,1099.4 681.3,1096.4 C694.0,1093.4 703.7,1120.3 712.7,1150.2 C721.6,1180.1 729.0,1232.4 735.1,1275.7 C741.2,1319.0 746.1,1376.5 749.4,1410.2 C752.8,1443.8 775.6,1466.2 755.3,1477.4 C734.9,1488.6 647.3,1528.9 627.5,1477.4 C607.7,1425.9 627.5,1231.6 636.5,1168.1 Z" fill="#e88494" opacity="0.55"/><path d="M439.3,1056.1 C435.5,1041.1 491.6,1006.8 515.5,997.8 C539.4,988.8 561.0,995.6 582.7,1002.3 C604.4,1009.0 632.0,1026.9 645.5,1038.1 C658.9,1049.3 660.5,1052.3 663.4,1069.5 C666.2,1086.7 665.1,1121.8 662.5,1141.2 C659.9,1160.7 652.0,1174.1 647.7,1186.1 C643.4,1198.0 639.8,1217.4 636.5,1212.9 C633.1,1208.5 644.0,1180.1 627.5,1159.2 C611.1,1138.2 569.3,1104.6 537.9,1087.4 C506.5,1070.3 443.0,1071.0 439.3,1056.1 Z" fill="#c58d72"/><polygon points="515.5,1002.3 567.0,926.1 587.2,881.3 636.5,944.0 665.6,1065.0 645.5,1038.1 582.7,1002.3" fill="#f4f4f2"/><path d="M154.6,1047.1 C174.8,1037.8 242.4,1034.4 268.9,1040.4 C295.5,1046.4 301.1,1078.1 313.8,1083.0 C326.5,1087.8 342.9,1063.5 345.1,1069.5 C347.4,1075.5 336.2,1107.6 327.2,1118.8 C318.2,1130.0 301.1,1126.7 291.3,1136.7 C281.6,1146.8 277.2,1171.5 268.9,1179.3 C260.7,1187.2 254.7,1186.8 242.0,1183.8 C229.3,1180.8 206.6,1168.5 192.7,1161.4 C178.9,1154.3 166.6,1152.1 159.1,1141.2 C151.7,1130.4 148.7,1112.1 147.9,1096.4 C147.2,1080.7 134.5,1056.4 154.6,1047.1 Z" fill="#b8806a"/><polygon points="322.7,1141.2 394.4,1069.5 448.2,1042.6 537.9,961.9 587.2,881.3 596.1,903.7 542.4,988.8 448.2,1065.0 367.5,1123.3 277.9,1190.5 233.1,1230.9" fill="#f6a9b6" stroke="#e6909e" stroke-width="1.5"/><path d="M201.7,1477.4 C137.5,1443.8 232.3,1328.0 251.0,1275.7 C269.7,1223.4 288.4,1198.8 313.8,1163.6 C339.2,1128.5 381.0,1083.7 403.4,1065.0 C425.8,1046.4 425.8,1047.8 448.2,1051.6 C470.6,1055.3 508.0,1069.5 537.9,1087.4 C567.8,1105.4 610.7,1139.0 627.5,1159.2 C644.3,1179.3 637.2,1155.4 638.7,1208.5 C640.2,1261.5 709.3,1432.6 636.5,1477.4 C563.6,1522.2 265.9,1511.0 201.7,1477.4 Z" fill="#e23a8c"/><path d="M251.0,1455.0 C247.3,1425.1 257.0,1320.5 268.9,1275.7 C280.9,1230.9 309.3,1201.0 322.7,1186.1 C336.2,1171.1 351.1,1171.1 349.6,1186.1 C348.1,1201.0 323.5,1230.9 313.8,1275.7 C304.0,1320.5 301.8,1425.1 291.3,1455.0 C280.9,1484.9 254.7,1484.9 251.0,1455.0 Z" fill="#d02e7c" opacity="0.5"/></g><filter id="p2sh" x="-0.1" y="-0.3" width="1.2" height="1.6"><feGaussianBlur stdDeviation="4"/></filter><g transform="rotate(-7.6 42 1189)"><text x="37" y="1196" font-family="Liberation Serif" font-weight="700" font-style="italic" font-size="112" textLength="800" lengthAdjust="spacingAndGlyphs" stroke-linejoin="round" fill="#0fc27c" stroke="#0fc27c" stroke-width="6">Start collecting</text><text x="39.5" y="1192.5" font-family="Liberation Serif" font-weight="700" font-style="italic" font-size="112" textLength="800" lengthAdjust="spacingAndGlyphs" stroke-linejoin="round" fill="#eda2ec" stroke="#eda2ec" stroke-width="6">Start collecting</text><text x="42" y="1189" font-family="Liberation Serif" font-weight="700" font-style="italic" font-size="112" textLength="800" lengthAdjust="spacingAndGlyphs" stroke-linejoin="round" fill="#fffb8f" stroke="#fffb8f" stroke-width="6">Start collecting</text></g><g transform="rotate(-8.0 241 1256)"><text x="236" y="1263" font-family="Liberation Serif" font-weight="700" font-style="italic" font-size="112" textLength="438" lengthAdjust="spacingAndGlyphs" stroke-linejoin="round" fill="#0fc27c" stroke="#0fc27c" stroke-width="6">rewards</text><text x="238.5" y="1259.5" font-family="Liberation Serif" font-weight="700" font-style="italic" font-size="112" textLength="438" lengthAdjust="spacingAndGlyphs" stroke-linejoin="round" fill="#eda2ec" stroke="#eda2ec" stroke-width="6">rewards</text><text x="241" y="1256" font-family="Liberation Serif" font-weight="700" font-style="italic" font-size="112" textLength="438" lengthAdjust="spacingAndGlyphs" stroke-linejoin="round" fill="#fffb8f" stroke="#fffb8f" stroke-width="6">rewards</text></g></svg><div class="a" style="left:2188px;top:1790px;width:76px;height:76px;background:#484848;border-radius:20px;"></div><svg class="a" style="left:2210.0px;top:1808.0px;" width="32" height="40" viewBox="0 0 32 40"><path d="M8,12 C8,5 13,2 17,2 C22,2 26,5 26,11 C26,17 19,19 19,25 V28" fill="none" stroke="#f4f4f4" stroke-width="3.2" stroke-linecap="round"/><circle cx="18.8" cy="35" r="2.6" fill="#f4f4f4"/></svg><div class="a" style="left:0.0px;top:0.0px;width:3024.0px;height:151.0px;background:#353535;"></div><div class="a" style="left:0.0px;top:0.0px;width:3024.0px;height:1.0px;background:#eeeeee;"></div><div class="a" style="left:0.0px;top:1.0px;width:3024.0px;height:1.0px;background:#000;"></div><div class="a" style="left:0.0px;top:2.0px;width:3024.0px;height:2.0px;background:#7a7a7a;"></div><div class="a" style="left:0.0px;top:151.0px;width:3024.0px;height:1.0px;background:#000;"></div><div class="a" style="left:0.0px;top:0.0px;width:1.0px;height:1964.0px;background:#000;"></div><svg class="a" style="left:66.0px;top:43.0px;" width="45" height="36" viewBox="0 0 45 36"><rect x="2" y="2" width="41" height="32" rx="5" fill="none" stroke="#a8a8a8" stroke-width="3"/><line x1="15" y1="2" x2="15" y2="34" stroke="#a8a8a8" stroke-width="3"/><line x1="6" y1="9" x2="11" y2="9" stroke="#a8a8a8" stroke-width="2"/><line x1="6" y1="14" x2="11" y2="14" stroke="#a8a8a8" stroke-width="2"/><line x1="6" y1="19" x2="11" y2="19" stroke="#a8a8a8" stroke-width="2"/></svg><div class="t" style="left:87.0px;top:106.9px;font-size:32px;color:#9c9c9c;font-weight:400;letter-spacing:0.3px;transform:translateX(-50%);">Sidebar</div><div class="a" style="left:177px;top:31px;width:166px;height:61px;border:2px solid #424242;border-radius:16px;box-sizing:border-box;"></div><div class="t" style="left:201.0px;top:41.8px;font-size:38px;color:#a8a8a8;font-weight:400;letter-spacing:0px;">10 %</div><svg class="a" style="left:302.0px;top:55.0px;" width="22" height="16" viewBox="0 0 22 16"><polyline points="2,3 11,12 20,3" fill="none" stroke="#a8a8a8" stroke-width="3.5" stroke-linecap="round" stroke-linejoin="round"/></svg><div class="t" style="left:261.0px;top:106.9px;font-size:32px;color:#9c9c9c;font-weight:400;letter-spacing:0px;transform:translateX(-50%);">View</div><div class="t" style="left:369.0px;top:38.1px;font-size:33px;color:#f2f2f2;font-weight:400;letter-spacing:0px;">Background removal</div><div class="t" style="left:369.0px;top:83.1px;font-size:33px;color:#a0a0a0;font-weight:400;letter-spacing:0px;">Edited</div><svg class="a" style="left:1166.0px;top:42.0px;" width="40" height="40" viewBox="0 0 40 40"><rect x="0" y="13" width="27" height="27" rx="6" fill="#5e5e5e"/><rect x="13" y="0" width="27" height="27" rx="6" fill="#5e5e5e"/></svg><svg class="a" style="left:1246.0px;top:42.0px;" width="40" height="40" viewBox="0 0 40 40"><rect x="0" y="13" width="27" height="27" rx="6" fill="#5e5e5e"/><rect x="13" y="0" width="27" height="27" rx="6" fill="#353535"/><rect x="14.2" y="1.2" width="24.6" height="24.6" rx="5" fill="none" stroke="#5e5e5e" stroke-width="2.4"/></svg><svg class="a" style="left:1326.0px;top:42.0px;" width="40" height="40" viewBox="0 0 40 40"><rect x="0" y="13" width="27" height="27" rx="6" fill="#5e5e5e"/><rect x="13" y="0" width="27" height="27" rx="6" fill="#5e5e5e"/><rect x="14" y="14" width="13" height="13" rx="3" fill="#2a2a2a"/></svg><svg class="a" style="left:1406.0px;top:42.0px;" width="40" height="40" viewBox="0 0 40 40"><rect x="1.2" y="14.2" width="24.6" height="24.6" rx="5" fill="none" stroke="#5e5e5e" stroke-width="2.4"/><rect x="14.2" y="1.2" width="24.6" height="24.6" rx="5" fill="none" stroke="#5e5e5e" stroke-width="2.4"/><rect x="13" y="13" width="14" height="14" rx="3" fill="#5e5e5e"/></svg><svg class="a" style="left:1486.0px;top:42.0px;" width="40" height="40" viewBox="0 0 40 40"><rect x="0" y="13" width="27" height="27" rx="6" fill="#5e5e5e"/><rect x="13" y="0" width="27" height="27" rx="6" fill="#5e5e5e"/><rect x="14" y="14" width="13" height="13" rx="3" fill="none" stroke="#353535" stroke-width="2.5"/></svg><div class="a" style="left:1224.0px;top:43.0px;width:2.0px;height:39.0px;background:#444;"></div><div class="a" style="left:1304.0px;top:43.0px;width:2.0px;height:39.0px;background:#444;"></div><div class="a" style="left:1384.0px;top:43.0px;width:2.0px;height:39.0px;background:#444;"></div><div class="a" style="left:1464.0px;top:43.0px;width:2.0px;height:39.0px;background:#444;"></div><div class="t" style="left:1346.0px;top:105.9px;font-size:32px;color:#6a6a6a;font-weight:400;letter-spacing:1px;transform:translateX(-50%);">Boolean</div><svg class="a" style="left:1614.0px;top:43.0px;" width="38" height="38" viewBox="0 0 38 38"><rect x="4" y="4" width="30" height="30" fill="none" stroke="#5e5e5e" stroke-width="3"/><circle cx="4" cy="4" r="4" fill="#5e5e5e"/><circle cx="34" cy="4" r="4" fill="#5e5e5e"/><circle cx="4" cy="34" r="4" fill="#5e5e5e"/><circle cx="34" cy="34" r="4" fill="#5e5e5e"/><rect x="10" y="11" width="13" height="13" rx="2" fill="none" stroke="#5e5e5e" stroke-width="2.5"/><rect x="15" y="15" width="13" height="13" rx="2" fill="none" stroke="#5e5e5e" stroke-width="2.5"/></svg><div class="a" style="left:1674.0px;top:43.0px;width:2.0px;height:39.0px;background:#444;"></div><svg class="a" style="left:1700.0px;top:41.0px;" width="41" height="41" viewBox="0 0 41 41"><rect x="4" y="4" width="22" height="22" fill="none" stroke="#5e5e5e" stroke-width="3"/><rect x="14" y="14" width="22" height="22" fill="none" stroke="#5e5e5e" stroke-width="3"/><circle cx="4" cy="4" r="3.5" fill="#5e5e5e"/><circle cx="26" cy="4" r="3.5" fill="#5e5e5e"/><circle cx="4" cy="26" r="3.5" fill="#5e5e5e"/><circle cx="14" cy="14" r="3.5" fill="#5e5e5e"/><circle cx="36" cy="14" r="3.5" fill="#5e5e5e"/><circle cx="14" cy="36" r="3.5" fill="#5e5e5e"/><circle cx="36" cy="36" r="3.5" fill="#5e5e5e"/></svg><div class="t" style="left:1677.0px;top:105.9px;font-size:32px;color:#6a6a6a;font-weight:400;letter-spacing:1px;transform:translateX(-50%);">Group</div><svg class="a" style="left:1828.0px;top:50.0px;" width="46" height="30" viewBox="0 0 46 30"><path d="M2,8 C10,0 18,4 23,9 C28,4 36,0 44,8 C44,22 34,28 23,20 C12,28 2,22 2,8 Z" fill="#5e5e5e"/><ellipse cx="13" cy="13" rx="5" ry="3.2" fill="#353535"/><ellipse cx="33" cy="13" rx="5" ry="3.2" fill="#353535"/></svg><div class="a" style="left:1891.0px;top:43.0px;width:2.0px;height:39.0px;background:#444;"></div><svg class="a" style="left:1912.0px;top:43.0px;" width="46" height="40" viewBox="0 0 46 40"><g transform="translate(0,8)"><path d="M2,8 C10,0 18,4 23,9 C28,4 36,0 44,8 C44,22 34,28 23,20 C12,28 2,22 2,8 Z" fill="#5e5e5e"/><ellipse cx="13" cy="13" rx="5" ry="3.2" fill="#353535"/><ellipse cx="33" cy="13" rx="5" ry="3.2" fill="#353535"/></g><line x1="8" y1="40" x2="44" y2="2" stroke="#353535" stroke-width="5"/><line x1="8" y1="39" x2="44" y2="1" stroke="#5e5e5e" stroke-width="2.5"/></svg><div class="t" style="left:1894.0px;top:105.9px;font-size:32px;color:#6a6a6a;font-weight:400;letter-spacing:1px;transform:translateX(-50%);">Mask</div><svg class="a" style="left:2070.0px;top:45.0px;" width="36" height="34" viewBox="0 0 36 34"><path d="M2,10 V2 H9 M27,2 H34 V10 M34,24 V32 H27 M9,32 H2 V24" fill="none" stroke="#5e5e5e" stroke-width="2.5"/><text x="18" y="25" font-family="Liberation Sans" font-size="20" fill="#5e5e5e" text-anchor="middle">A</text></svg><div class="t" style="left:2087.0px;top:105.9px;font-size:32px;color:#6a6a6a;font-weight:400;letter-spacing:1px;transform:translateX(-50%);">Outline</div><svg class="a" style="left:2224.0px;top:40.0px;" width="42" height="42" viewBox="0 0 42 42"><path d="M10,2 V32 H40 M2,10 H32 V40" fill="none" stroke="#5e5e5e" stroke-width="3"/></svg><div class="t" style="left:2243.0px;top:105.9px;font-size:32px;color:#6a6a6a;font-weight:400;letter-spacing:1.2px;transform:translateX(-50%);">Crop</div><svg class="a" style="left:2394.0px;top:45.0px;" width="50" height="42" viewBox="0 0 50 42"><circle cx="29" cy="20" r="19" fill="#b4b4b4"/><circle cx="29" cy="15" r="6" fill="#353535"/><path d="M17,33 C20,25 38,25 41,33" fill="none" stroke="#353535" stroke-width="4"/><circle cx="12" cy="29" r="12" fill="#353535"/><circle cx="12" cy="29" r="10" fill="#b4b4b4"/><path d="M12,23 V35 M6,29 H18" stroke="#353535" stroke-width="2.6"/></svg><div class="t" style="left:2423.0px;top:107.9px;font-size:32px;color:#a8a8a8;font-weight:400;letter-spacing:0.6px;transform:translateX(-50%);">Share</div><svg class="a" style="left:2577.0px;top:44.0px;" width="36" height="43" viewBox="0 0 36 43"><path d="M11,14 H3 V41 H33 V14 H25" fill="none" stroke="#b4b4b4" stroke-width="3"/><path d="M18,28 V4" stroke="#b4b4b4" stroke-width="3"/><path d="M10,12 L18,3 L26,12 Z" fill="#b4b4b4"/></svg><div class="t" style="left:2594.0px;top:107.9px;font-size:32px;color:#a8a8a8;font-weight:400;letter-spacing:1.3px;transform:translateX(-50%);">Export</div><div class="a" style="left:2699px;top:37px;width:302px;height:60px;background:#3e3e3e;border-radius:14px;"></div><div class="a" style="left:2853px;top:37px;width:148px;height:60px;background:#5a5a5a;border-radius:14px;"></div><svg class="a" style="left:2740.0px;top:40.0px;" width="70" height="60" viewBox="0 0 70 60"><path d="M33.8,14.9 L39.8,21 C40.2,22.5 39.5,24 37.6,26.8 C39.5,26.5 41,25.5 43.1,24.3 L47,28 L38.6,35.9 L27.2,24.6 Z" fill="#b4b4b4"/><path d="M25.3,26.4 L36.8,38" stroke="#b4b4b4" stroke-width="2.4" stroke-linecap="round"/><path d="M28.8,30.3 L32.8,34.2 L23.5,42.3 L21,40 Z" fill="#b4b4b4"/></svg><svg class="a" style="left:2912.0px;top:54.0px;" width="30" height="30" viewBox="0 0 30 30"><circle cx="15" cy="15" r="14.5" fill="#e8e8e8"/><path d="M15,8 V22 M8,15 H22" stroke="#444" stroke-width="2.4"/></svg><div class="t" style="left:2776.0px;top:107.9px;font-size:32px;color:#a8a8a8;font-weight:400;letter-spacing:1.5px;transform:translateX(-50%);">Inspector</div><div class="t" style="left:2931.0px;top:107.9px;font-size:32px;color:#a8a8a8;font-weight:400;letter-spacing:1.3px;transform:translateX(-50%);">Library</div><div class="a" style="left:6px;top:646px;width:88px;height:997px;background:#212121;border:2px solid #3a3a3a;border-radius:18px;box-sizing:border-box;"></div><div class="a" style="left:13px;top:653px;width:74px;height:74px;background:#4e4e4e;border-radius:13px;"></div><div class="a" style="left:120px;top:646px;width:88px;height:88px;background:#222;border:2px solid #3a3a3a;border-radius:18px;box-sizing:border-box;"></div><svg class="a" style="left:142.0px;top:667.0px;" width="44" height="46" viewBox="0 0 44 46"><rect x="2" y="2" width="30" height="30" rx="6" fill="#dcdcdc"/><rect x="11" y="10" width="26" height="28" rx="6" fill="none" stroke="#222" stroke-width="5"/><rect x="11" y="10" width="26" height="28" rx="6" fill="none" stroke="#dcdcdc" stroke-width="2.2" stroke-dasharray="5 4"/><path d="M24,20 L40,33 L33,34 L37,43 L34,45 L30,36 L25,40 Z" fill="#dcdcdc" stroke="#222" stroke-width="1.5"/></svg><svg class="a" style="left:36.0px;top:672.0px;" width="30" height="40" viewBox="0 0 30 40"><path d="M4,2 L26,20 L16,22 L22,35 L17,37 L11,24 L4,31 Z" fill="#dcdcdc"/></svg><svg class="a" style="left:35.0px;top:755.0px;" width="32" height="42" viewBox="0 0 32 42"><path d="M2,2 L30,24 L12,26 L2,40 Z" fill="#dcdcdc"/></svg><svg class="a" style="left:24.0px;top:832.0px;" width="52" height="52" viewBox="0 0 52 52"><circle cx="28" cy="9" r="5" fill="none" stroke="#dcdcdc" stroke-width="3"/><circle cx="44" cy="21" r="5.5" fill="none" stroke="#dcdcdc" stroke-width="3"/><path d="M26,14 L14,50" stroke="#dcdcdc" stroke-width="5" stroke-linecap="round"/><path d="M39,23 L2,35" stroke="#dcdcdc" stroke-width="5" stroke-linecap="round"/></svg><svg class="a" style="left:26.0px;top:918.0px;" width="46" height="46" viewBox="0 0 46 46"><path d="M44,2 C46,5 42,12 32,22 L24,14 C34,4 41,0 44,2 Z" fill="#dcdcdc"/><path d="M22,16 L30,24 L26,36 L2,44 L10,20 Z" fill="#dcdcdc"/><circle cx="15" cy="30" r="3" fill="#212121"/><path d="M4,42 L14,32" stroke="#212121" stroke-width="1.5"/></svg><svg class="a" style="left:28.0px;top:1000.0px;" width="46" height="46" viewBox="0 0 46 46"><path d="M36,2 L44,10 L14,40 L2,44 L6,32 Z" fill="#dcdcdc"/><path d="M30,8 L38,16" stroke="#212121" stroke-width="2"/><path d="M33,5 L41,13" stroke="#212121" stroke-width="1.5"/><path d="M7,33 L13,39" stroke="#212121" stroke-width="1.5"/></svg><svg class="a" style="left:32.0px;top:1088.0px;" width="42" height="38" viewBox="0 0 42 38"><path d="M40,2 C38,10 28,20 20,26 L14,20 C22,12 32,4 40,2 Z" fill="#dcdcdc"/><path d="M12,22 L18,28 C16,36 8,38 2,36 C8,32 6,24 12,22 Z" fill="#dcdcdc"/></svg><svg class="a" style="left:29.0px;top:1173.0px;" width="43" height="36" viewBox="0 0 43 36"><path d="M2,8 V2 H41 V8 M41,14 V22 M41,28 V34 H2 V28 M2,22 V14" fill="none" stroke="#dcdcdc" stroke-width="2.6"/><text x="21.5" y="27" font-family="Liberation Sans" font-size="22" fill="#dcdcdc" text-anchor="middle">A</text></svg><svg class="a" style="left:28.0px;top:1255.0px;" width="54" height="45" viewBox="0 0 54 45"><rect x="1" y="1" width="43" height="34" rx="7" fill="#dcdcdc"/><circle cx="47" cy="37" r="5" fill="#8a8a8a"/></svg><svg class="a" style="left:30.0px;top:1331.0px;" width="42" height="50" viewBox="0 0 42 50"><circle cx="15" cy="23" r="11" fill="none" stroke="#dcdcdc" stroke-width="3"/><circle cx="27" cy="15" r="11" fill="none" stroke="#dcdcdc" stroke-width="3"/><path d="M12,28 L28,36 L18,38 L14,48 Z" fill="#dcdcdc" stroke="#212121" stroke-width="1.5"/></svg><svg class="a" style="left:27.0px;top:1417.0px;" width="44" height="42" viewBox="0 0 44 42"><path d="M26,2 L42,18 L26,34 L10,34 L2,26 Z" fill="#dcdcdc"/><path d="M18,10 L34,26" stroke="#212121" stroke-width="3"/><path d="M20,40 H38" stroke="#dcdcdc" stroke-width="2.5"/><path d="M5,26 L12,32 L24,20 L17,14 Z" fill="#212121" opacity="0"/></svg><svg class="a" style="left:33.0px;top:1501.0px;" width="36" height="42" viewBox="0 0 36 42"><path d="M8,24 V9 C8,6 12,6 12,9 V20 M12,20 V4 C12,1 16,1 16,4 V20 M16,20 V3 C16,0 20,0 20,3 V20 M20,20 V6 C20,3 24,3 24,6 V24 C26,20 31,18 32,22 C28,28 26,36 20,40 H12 C8,38 6,32 6,26 V14 C6,11 9,11 9,14" fill="#dcdcdc" stroke="#dcdcdc" stroke-width="3" stroke-linejoin="round"/></svg><svg class="a" style="left:31.0px;top:1582.0px;" width="40" height="42" viewBox="0 0 40 42"><circle cx="16" cy="16" r="12" fill="none" stroke="#dcdcdc" stroke-width="3"/><path d="M16,10 V22 M10,16 H22" stroke="#dcdcdc" stroke-width="2.5"/><path d="M25,25 L36,37" stroke="#dcdcdc" stroke-width="4" stroke-linecap="round"/></svg><div class="a" style="left:6px;top:1667px;width:88px;height:161px;background:#212121;border:2px solid #3a3a3a;border-radius:18px;box-sizing:border-box;"></div><svg class="a" style="left:21.0px;top:1681.0px;" width="58" height="58" viewBox="0 0 58 58"><circle cx="29" cy="29" r="28.5" fill="#fb7f12"/></svg><svg class="a" style="left:21.0px;top:1755.0px;" width="58" height="58" viewBox="0 0 58 58"><circle cx="29" cy="29" r="23.5" fill="none" stroke="#fb7f12" stroke-width="10"/></svg><div class="a" style="left:2307.0px;top:152.0px;width:717.0px;height:1812.0px;background:#292929;"></div><div class="a" style="left:2305.0px;top:152.0px;width:2.0px;height:16.0px;background:#000;"></div><div class="a" style="left:2305.0px;top:1849.0px;width:2.0px;height:115.0px;background:#000;"></div><div class="a" style="left:2307.0px;top:362.6px;width:7.0px;height:2.5px;background:#474747;"></div><div class="a" style="left:2307.0px;top:938.0px;width:7.0px;height:2.5px;background:#474747;"></div><div class="a" style="left:2307.0px;top:1435.5px;width:7.0px;height:2.5px;background:#474747;"></div><div class="a" style="left:2307.0px;top:1695.0px;width:7.0px;height:2.5px;background:#474747;"></div><div class="a" style="left:2307.0px;top:1806.7px;width:7.0px;height:2.5px;background:#474747;"></div><div class="a" style="left:2307.0px;top:1918.0px;width:7.0px;height:2.5px;background:#474747;"></div><div class="a" style="left:2346px;top:231px;width:195px;height:57px;background:#2c2e2e;border:2px solid #3d3f3f;border-radius:14px;box-sizing:border-box;"></div><div class="a" style="left:2578px;top:231px;width:195px;height:57px;background:#2c2e2e;border:2px solid #3d3f3f;border-radius:14px;box-sizing:border-box;"></div><div class="a" style="left:2813px;top:231px;width:195px;height:57px;background:#2c2e2e;border:2px solid #3d3f3f;border-radius:14px;box-sizing:border-box;"></div><div class="t" style="left:2364.5px;top:243.8px;font-size:31px;color:#ececec;font-weight:400;letter-spacing:1.6px;">235.39</div><div class="t" style="left:2532.0px;top:244.6px;font-size:30px;color:#ececec;font-weight:700;letter-spacing:0px;transform:translateX(-100%);">X</div><div class="t" style="left:2597.0px;top:243.8px;font-size:31px;color:#ececec;font-weight:400;letter-spacing:0.4px;">177.32</div><div class="t" style="left:2763.0px;top:244.6px;font-size:30px;color:#ececec;font-weight:700;letter-spacing:0px;transform:translateX(-100%);">Y</div><div class="t" style="left:2828.0px;top:243.8px;font-size:31px;color:#ececec;font-weight:400;letter-spacing:0px;">0</div><svg class="a" style="left:2980.0px;top:248.0px;" width="14" height="14" viewBox="0 0 14 14"><circle cx="7" cy="7" r="4.5" fill="none" stroke="#ececec" stroke-width="2.4"/></svg><div class="a" style="left:2346px;top:314px;width:195px;height:56px;background:#2c2e2e;border:2px solid #3d3f3f;border-radius:14px;box-sizing:border-box;"></div><div class="a" style="left:2578px;top:314px;width:195px;height:56px;background:#2c2e2e;border:2px solid #3d3f3f;border-radius:14px;box-sizing:border-box;"></div><div class="t" style="left:2364.5px;top:325.8px;font-size:31px;color:#ececec;font-weight:400;letter-spacing:1px;">401.87</div><div class="t" style="left:2530.0px;top:326.6px;font-size:30px;color:#ececec;font-weight:700;letter-spacing:0px;transform:translateX(-100%);">W</div><div class="t" style="left:2597.0px;top:325.8px;font-size:31px;color:#ececec;font-weight:400;letter-spacing:0.4px;">177.32</div><div class="t" style="left:2765.0px;top:326.6px;font-size:30px;color:#ececec;font-weight:700;letter-spacing:0px;transform:translateX(-100%);">H</div><svg class="a" style="left:2544.0px;top:330.0px;" width="30" height="32" viewBox="0 0 30 32"><rect x="1" y="13" width="19" height="17" rx="3" fill="#8a8a8a"/><path d="M17,14 V8 C17,2 28,2 28,8 V11" fill="none" stroke="#8a8a8a" stroke-width="3"/></svg><div class="a" style="left:2813px;top:314px;width:195px;height:56px;background:#5d5e5e;border-radius:14px;box-shadow:inset 0 1px 0 #6a6a6a;"></div><div class="a" style="left:2911.0px;top:325.0px;width:2.0px;height:34.0px;background:#4a4a4a;"></div><svg class="a" style="left:2843.0px;top:320.0px;" width="48" height="46" viewBox="0 0 48 46"><path d="M6,8 H42 M6,8 L12,4 M6,8 L12,12 M42,8 L36,4 M42,8 L36,12" stroke="#fff" stroke-width="2.2" fill="none"/><path d="M22,16 V43 H2 Z" fill="#fff"/><path d="M25,16 V43 H45 Z" fill="#fff"/></svg><svg class="a" style="left:2930.0px;top:318.0px;" width="44" height="50" viewBox="0 0 44 50"><path d="M8,6 V44 M8,6 L4,12 M8,6 L12,12 M8,44 L4,38 M8,44 L12,38" stroke="#fff" stroke-width="2.2" fill="none"/><path d="M40,4 V23 L15,23 Z" fill="#fff"/><path d="M40,26 V45 L15,26 Z" fill="#fff"/></svg><div class="a" style="left:2309.0px;top:404.0px;width:715.0px;height:3.0px;background:#3a3a3a;"></div><svg class="a" style="left:2361.0px;top:432.0px;" width="56" height="52" viewBox="0 0 56 52"><path d="M16,7 L45,16 L45,46 L7,35 Z" fill="none" stroke="#fff" stroke-width="3"/><circle cx="16" cy="7" r="5" fill="#fff"/><circle cx="45" cy="16" r="5" fill="#fff"/><circle cx="45" cy="46" r="5" fill="#fff"/><circle cx="7" cy="35" r="5" fill="#fff"/></svg><div class="t" style="left:2437.0px;top:441.8px;font-size:38px;color:#fafafa;font-weight:700;letter-spacing:0px;">Shape</div><div class="t" style="left:2364.0px;top:519.6px;font-size:33px;color:#f0f0f0;font-weight:400;letter-spacing:0px;">Corner Radius</div><div class="a" style="left:2349.0px;top:578.7px;width:451.0px;height:12.0px;background:#3f4141;border-radius:6px;"></div><div class="a" style="left:2349.0px;top:578.7px;width:88.0px;height:12.0px;background:#fd9a1d;border-radius:6px;"></div><div class="a" style="left:2409px;top:556.7px;width:56px;height:56px;background:#fff;border-radius:50%;box-shadow:0 1px 3px rgba(0,0,0,0.35);"></div><div class="a" style="left:2824px;top:557px;width:183px;height:56px;background:#2c2e2e;border:2px solid #3d3f3f;border-radius:14px;box-sizing:border-box;"></div><div class="t" style="left:2848.0px;top:569.8px;font-size:31px;color:#ececec;font-weight:400;letter-spacing:2.5px;">0%</div><div class="a" style="left:2309.0px;top:647.0px;width:715.0px;height:3.0px;background:#3a3a3a;"></div><svg class="a" style="left:2353.0px;top:678.0px;" width="56" height="56" viewBox="0 0 56 56"><path d="M28,4 L52,28 L28,52 L4,28 Z" fill="none" stroke="#fff" stroke-width="3.5" stroke-linejoin="miter"/><path d="M28,12 L33,17 H23 Z M28,44 L33,39 H23 Z M12,28 L17,23 V33 Z M44,28 L39,23 V33 Z" fill="#fff"/></svg><div class="t" style="left:2425.0px;top:688.8px;font-size:38px;color:#fafafa;font-weight:700;letter-spacing:0px;">Arrange</div><svg class="a" style="left:2949.0px;top:698.0px;" width="36" height="22" viewBox="0 0 36 22"><polyline points="2,2 18.0,19 34,2" fill="none" stroke="#8c8c8c" stroke-width="3.2"/></svg><div class="a" style="left:2349px;top:757px;width:317px;height:57px;background:#5f6060;border-radius:14px;box-shadow:inset 0 1px 0 rgba(255,255,255,0.08);"></div><div class="a" style="left:2694px;top:757px;width:316px;height:57px;background:#5f6060;border-radius:14px;box-shadow:inset 0 1px 0 rgba(255,255,255,0.08);"></div><div class="a" style="left:2505.0px;top:770.0px;width:3.0px;height:31.0px;background:#3e3e3e;"></div><div class="a" style="left:2850.0px;top:770.0px;width:3.0px;height:31.0px;background:#3e3e3e;"></div><svg class="a" style="left:2400.0px;top:764.0px;" width="50" height="44" viewBox="0 0 50 44"><polygon points="25,17.0 47.0,28 25,39.0 3.0,28" fill="#5f6060" stroke="#fff" stroke-width="2.4"/><polygon points="25,7.0 47.0,18 25,29.0 3.0,18" fill="#fff" stroke="#5f6060" stroke-width="2"/></svg><svg class="a" style="left:2560.0px;top:764.0px;" width="50" height="44" viewBox="0 0 50 44"><polygon points="25,17.0 47.0,28 25,39.0 3.0,28" fill="#fff" stroke="#5f6060" stroke-width="2"/><polygon points="25,7.0 47.0,18 25,29.0 3.0,18" fill="#5f6060" stroke="#fff" stroke-width="2.4"/></svg><svg class="a" style="left:2760.0px;top:764.0px;" width="40" height="44" viewBox="0 0 40 44"><polygon points="20,22.0 38.0,31 20,40.0 2.0,31" fill="#5f6060" stroke="#fff" stroke-width="2.4"/><polygon points="20,15.0 38.0,24 20,33.0 2.0,24" fill="#fff" stroke="#5f6060" stroke-width="2"/><polygon points="20,7.0 38.0,16 20,25.0 2.0,16" fill="#fff" stroke="#5f6060" stroke-width="2"/></svg><svg class="a" style="left:2913.0px;top:764.0px;" width="40" height="44" viewBox="0 0 40 44"><polygon points="20,22.0 38.0,31 20,40.0 2.0,31" fill="#fff" stroke="#5f6060" stroke-width="2"/><polygon points="20,15.0 38.0,24 20,33.0 2.0,24" fill="#fff" stroke="#5f6060" stroke-width="2"/><polygon points="20,7.0 38.0,16 20,25.0 2.0,16" fill="#5f6060" stroke="#fff" stroke-width="2.4"/></svg><div class="t" style="left:2428.0px;top:822.9px;font-size:32px;color:#c4c4c4;font-weight:400;letter-spacing:1.4px;transform:translateX(-50%);">Forward</div><div class="t" style="left:2591.0px;top:822.9px;font-size:32px;color:#c4c4c4;font-weight:400;letter-spacing:1.4px;transform:translateX(-50%);">Backward</div><div class="t" style="left:2774.0px;top:822.9px;font-size:32px;color:#c4c4c4;font-weight:400;letter-spacing:1.3px;transform:translateX(-50%);">Front</div><div class="t" style="left:2932.0px;top:822.9px;font-size:32px;color:#c4c4c4;font-weight:400;letter-spacing:0.8px;transform:translateX(-50%);">Back</div><div class="a" style="left:2349px;top:896px;width:492px;height:56px;background:#454545;border-radius:14px;box-shadow:inset 0 1px 0 rgba(255,255,255,0.08);"></div><div class="a" style="left:2866px;top:896px;width:144px;height:56px;background:#454545;border-radius:14px;box-shadow:inset 0 1px 0 rgba(255,255,255,0.08);"></div><svg class="a" style="left:2361.0px;top:904.0px;" width="50" height="42" viewBox="0 0 50 42"><rect x="0" y="0" width="3" height="40" fill="#7a7a7a"/><rect x="5" y="5" width="22" height="12" fill="#7a7a7a"/><rect x="5" y="22" width="32" height="13" fill="#7a7a7a"/></svg><svg class="a" style="left:2442.0px;top:904.0px;" width="50" height="42" viewBox="0 0 50 42"><rect x="18" y="0" width="3" height="40" fill="#7a7a7a"/><rect x="8" y="5" width="22" height="12" fill="#7a7a7a"/><rect x="3" y="22" width="33" height="13" fill="#7a7a7a"/></svg><svg class="a" style="left:2520.0px;top:904.0px;" width="50" height="42" viewBox="0 0 50 42"><rect x="36" y="0" width="3" height="40" fill="#7a7a7a"/><rect x="11" y="5" width="22" height="12" fill="#7a7a7a"/><rect x="1" y="22" width="32" height="13" fill="#7a7a7a"/></svg><svg class="a" style="left:2602.0px;top:904.0px;" width="50" height="42" viewBox="0 0 50 42"><rect x="0" y="0" width="42" height="3" fill="#7a7a7a"/><rect x="5" y="5" width="13" height="24" fill="#7a7a7a"/><rect x="22" y="5" width="13" height="35" fill="#7a7a7a"/></svg><svg class="a" style="left:2690.0px;top:904.0px;" width="50" height="42" viewBox="0 0 50 42"><rect x="0" y="19" width="48" height="3" fill="#7a7a7a"/><rect x="7" y="7" width="15" height="26" fill="#7a7a7a"/><rect x="26" y="0" width="15" height="40" fill="#7a7a7a"/></svg><svg class="a" style="left:2783.0px;top:904.0px;" width="50" height="42" viewBox="0 0 50 42"><rect x="0" y="38" width="42" height="3" fill="#7a7a7a"/><rect x="6" y="11" width="14" height="25" fill="#7a7a7a"/><rect x="23" y="0" width="14" height="36" fill="#7a7a7a"/></svg><div class="a" style="left:2421.0px;top:908.0px;width:2.0px;height:30.0px;background:#3a3a3a;"></div><div class="a" style="left:2499.0px;top:908.0px;width:2.0px;height:30.0px;background:#3a3a3a;"></div><div class="a" style="left:2581.0px;top:908.0px;width:2.0px;height:30.0px;background:#3a3a3a;"></div><div class="a" style="left:2668.0px;top:908.0px;width:2.0px;height:30.0px;background:#3a3a3a;"></div><div class="a" style="left:2762.0px;top:908.0px;width:2.0px;height:30.0px;background:#3a3a3a;"></div><svg class="a" style="left:2893.0px;top:902.0px;" width="40" height="45" viewBox="0 0 40 45"><rect x="0" y="0" width="3" height="45" fill="#7a7a7a"/><rect x="6" y="6" width="16" height="32" fill="#7a7a7a"/><rect x="25" y="0" width="3" height="45" fill="#7a7a7a"/></svg><div class="a" style="left:2938.0px;top:908.0px;width:2.0px;height:30.0px;background:#3a3a3a;"></div><svg class="a" style="left:2948.0px;top:906.0px;" width="52" height="36" viewBox="0 0 52 36"><rect x="0" y="0" width="52" height="3" fill="#7a7a7a"/><rect x="7" y="7" width="38" height="17" fill="#7a7a7a"/><rect x="0" y="28" width="52" height="3" fill="#7a7a7a"/></svg><div class="a" style="left:2349px;top:987px;width:319px;height:56px;background:#5f6060;border-radius:14px;box-shadow:inset 0 1px 0 rgba(255,255,255,0.08);"></div><div class="a" style="left:2692px;top:987px;width:318px;height:56px;background:#5f6060;border-radius:14px;box-shadow:inset 0 1px 0 rgba(255,255,255,0.08);"></div><div class="a" style="left:2505.0px;top:998.0px;width:3.0px;height:34.0px;background:#3e3e3e;"></div><div class="a" style="left:2846.0px;top:998.0px;width:3.0px;height:34.0px;background:#3e3e3e;"></div><svg class="a" style="left:2402.0px;top:1006.0px;" width="52" height="32" viewBox="0 0 52 32"><path d="M2,8 C10,0 18,4 26,10 C34,4 42,0 50,8 C50,24 38,30 26,22 C14,30 2,24 2,8 Z" fill="#fff"/><ellipse cx="15" cy="13" rx="6" ry="3.6" fill="#5f6060"/><ellipse cx="37" cy="13" rx="6" ry="3.6" fill="#5f6060"/></svg><svg class="a" style="left:2558.0px;top:992.0px;" width="52" height="50" viewBox="0 0 52 50"><g transform="translate(0,14)" opacity="0.45"><path d="M2,8 C10,0 18,4 26,10 C34,4 42,0 50,8 C50,24 38,30 26,22 C14,30 2,24 2,8 Z" fill="#8a8a8a"/><ellipse cx="15" cy="13" rx="6" ry="3.6" fill="#5f6060"/><ellipse cx="37" cy="13" rx="6" ry="3.6" fill="#5f6060"/></g><line x1="6" y1="48" x2="48" y2="2" stroke="#5f6060" stroke-width="5"/><line x1="6" y1="47" x2="48" y2="1" stroke="#8a8a8a" stroke-width="2.4"/></svg><svg class="a" style="left:2756.0px;top:992.0px;" width="40" height="44" viewBox="0 0 40 44"><path d="M4,36 V6 H30" fill="none" stroke="#fff" stroke-width="3"/><path d="M29,0 L38,6 L29,12 Z" fill="#fff"/><path d="M34,8 V38 H8" fill="none" stroke="#fff" stroke-width="3"/><path d="M9,32 L0,38 L9,44 Z" fill="#fff"/></svg><svg class="a" style="left:2912.0px;top:990.0px;" width="42" height="44" viewBox="0 0 42 44"><path d="M4,36 V8 H30" fill="none" stroke="#fff" stroke-width="3"/><path d="M29,2 L38,8 L29,14 Z" fill="#fff"/><path d="M34,10 V38 H8" fill="none" stroke="#fff" stroke-width="3"/><path d="M9,32 L0,38 L9,44 Z" fill="#fff"/><path d="M19,16 V30 M12,23 H26" stroke="#fff" stroke-width="3"/></svg><div class="t" style="left:2508.0px;top:1054.3px;font-size:32px;color:#c4c4c4;font-weight:400;letter-spacing:1px;transform:translateX(-50%);">Mask</div><div class="t" style="left:2851.0px;top:1054.3px;font-size:32px;color:#c4c4c4;font-weight:400;letter-spacing:1.2px;transform:translateX(-50%);">Repeat action</div><div class="a" style="left:2349px;top:1128px;width:319px;height:56px;background:#454545;border-radius:14px;box-shadow:inset 0 1px 0 rgba(255,255,255,0.08);"></div><div class="a" style="left:2692px;top:1128px;width:318px;height:56px;background:#454545;border-radius:14px;box-shadow:inset 0 1px 0 rgba(255,255,255,0.08);"></div><div class="t" style="left:2508.0px;top:1139.2px;font-size:34px;color:#6e6e6e;font-weight:400;letter-spacing:2px;transform:translateX(-50%);">Group</div><div class="t" style="left:2851.0px;top:1139.2px;font-size:34px;color:#6e6e6e;font-weight:400;letter-spacing:2.2px;transform:translateX(-50%);">Ungroup</div><div class="a" style="left:2309.0px;top:1218.0px;width:715.0px;height:3.0px;background:#3a3a3a;"></div><svg class="a" style="left:2338.7px;top:1237.8px;" width="80" height="72" viewBox="0 0 80 72"><g transform="scale(1.56)"><path d="M33.8,14.9 L39.8,21 C40.2,22.5 39.5,24 37.6,26.8 C39.5,26.5 41,25.5 43.1,24.3 L47,28 L38.6,35.9 L27.2,24.6 Z" fill="#fff"/><path d="M25.3,26.4 L36.8,38" stroke="#fff" stroke-width="2.4" stroke-linecap="round"/><path d="M28.8,30.3 L32.8,34.2 L23.5,42.3 L21,40 Z" fill="#fff"/></g></svg><div class="t" style="left:2437.0px;top:1259.8px;font-size:38px;color:#fafafa;font-weight:700;letter-spacing:0px;">Appearance</div><svg class="a" style="left:2955.0px;top:1270.0px;" width="34" height="20" viewBox="0 0 34 20"><polyline points="2,2 17.0,17 32,2" fill="none" stroke="#8c8c8c" stroke-width="3.2"/></svg><div class="t" style="left:2364.0px;top:1331.3px;font-size:32px;color:#b4b4b4;font-weight:400;letter-spacing:0.8px;">Blend Mode</div><div class="a" style="left:2349px;top:1386px;width:661px;height:56px;background:#454646;border-radius:14px;"></div><div class="t" style="left:2374.0px;top:1395.1px;font-size:35px;color:#fafafa;font-weight:700;letter-spacing:0px;">Normal</div><div class="a" style="left:2960px;top:1391px;width:45px;height:45px;background:#fd9a1d;border-radius:10px;"></div><svg class="a" style="left:2968.0px;top:1396.0px;" width="30" height="36" viewBox="0 0 30 36"><polyline points="5,13 15,5 25,13" fill="none" stroke="#fff" stroke-width="3.2"/><polyline points="5,22 15,30 25,22" fill="none" stroke="#fff" stroke-width="3.2"/></svg><div class="t" style="left:2364.0px;top:1466.9px;font-size:32px;color:#b4b4b4;font-weight:400;letter-spacing:0.9px;">Opacity</div><div class="a" style="left:2349.0px;top:1526.3px;width:451.0px;height:12.0px;background:#3f4141;border-radius:6px;"></div><div class="a" style="left:2349.0px;top:1526.3px;width:424.0px;height:12.0px;background:#fd9a1d;border-radius:6px;"></div><div class="a" style="left:2745px;top:1504.3px;width:56px;height:56px;background:#fff;border-radius:50%;box-shadow:0 1px 3px rgba(0,0,0,0.35);"></div><div class="a" style="left:2824px;top:1504px;width:184px;height:56px;background:#2c2e2e;border:2px solid #3d3f3f;border-radius:14px;box-sizing:border-box;"></div><div class="t" style="left:2848.0px;top:1513.3px;font-size:31px;color:#ececec;font-weight:400;letter-spacing:1.75px;">100%</div><div class="t" style="left:2364.0px;top:1588.9px;font-size:32px;color:#b4b4b4;font-weight:400;letter-spacing:1px;">Blur</div><div class="a" style="left:2349.0px;top:1647.7px;width:451.0px;height:12.0px;background:#3f4141;border-radius:6px;"></div><div class="a" style="left:2349px;top:1625.7px;width:56px;height:56px;background:#fff;border-radius:50%;box-shadow:0 1px 3px rgba(0,0,0,0.35);"></div><div class="a" style="left:2824px;top:1626px;width:184px;height:56px;background:#2c2e2e;border:2px solid #3d3f3f;border-radius:14px;box-sizing:border-box;"></div><div class="t" style="left:2848.0px;top:1634.8px;font-size:31px;color:#ececec;font-weight:400;letter-spacing:1.75px;">100%</div><div class="a" style="left:2309.0px;top:1713.0px;width:715.0px;height:3.0px;background:#3a3a3a;"></div><svg class="a" style="left:2362.0px;top:1745.0px;" width="50" height="48" viewBox="0 0 50 48"><path d="M20,4 L38,22 L20,40 L3,23 Z" fill="none" stroke="#fff" stroke-width="3"/><path d="M3,23 L38,23 L20,40 Z" fill="#fff"/><path d="M20,4 L26,0" stroke="#fff" stroke-width="3"/><path d="M41,28 C44,33 46,36 46,39 C46,42 44,44 41,44 C38,44 36,42 36,39 C36,36 38,33 41,28 Z" fill="#fff"/></svg><div class="t" style="left:2434.0px;top:1750.8px;font-size:38px;color:#fafafa;font-weight:700;letter-spacing:0px;">Fill</div><div class="a" style="left:2820px;top:1739px;width:107px;height:64px;background:#fd9a1d;border-radius:32px;"></div><div class="a" style="left:2866px;top:1743px;width:56px;height:56px;background:#fff;border-radius:50%;"></div><svg class="a" style="left:2955.0px;top:1755.0px;" width="34" height="20" viewBox="0 0 34 20"><polyline points="2,2 17.0,17 32,2" fill="none" stroke="#8c8c8c" stroke-width="3.2"/></svg><div class="a" style="left:2352px;top:1827px;width:245px;height:56px;background:#fdec5f;border-radius:16px;overflow:hidden;"><div style="position:absolute;left:195px;top:0;width:50px;height:56px;background:#fff8cc;"></div></div><svg class="a" style="left:2557.0px;top:1835.0px;" width="30" height="40" viewBox="0 0 30 40"><path d="M2,8 H28 M10,8 V4 H20 V8" fill="none" stroke="#111" stroke-width="2.6"/><path d="M5,11 H25 L23,38 H7 Z" fill="#111"/><path d="M11,15 V34 M15,15 V34 M19,15 V34" stroke="#fff8cc" stroke-width="2"/></svg><div class="a" style="left:2621px;top:1827px;width:225px;height:56px;background:#2c2e2e;border:2px solid #3d3f3f;border-radius:14px;box-sizing:border-box;"></div><div class="t" style="left:2641.0px;top:1835.8px;font-size:31px;color:#ececec;font-weight:400;letter-spacing:1.4px;">#940FFD</div><div class="a" style="left:2875px;top:1830px;width:135px;height:56px;background:#2c2e2e;border:2px solid #3d3f3f;border-radius:14px;box-sizing:border-box;"></div><div class="t" style="left:2893.0px;top:1836.3px;font-size:31px;color:#ececec;font-weight:400;letter-spacing:1.75px;">100%</div><svg class="a" style="left:2366.0px;top:1956.0px;" width="32" height="8" viewBox="0 0 32 8"><rect x="1.5" y="1.5" width="26" height="20" rx="5" fill="none" stroke="#d8d8d8" stroke-width="3"/></svg><div class="t" style="left:2437.0px;top:1957.8px;font-size:38px;color:#fafafa;font-weight:700;letter-spacing:0px;">Path</div>
</body></html>
